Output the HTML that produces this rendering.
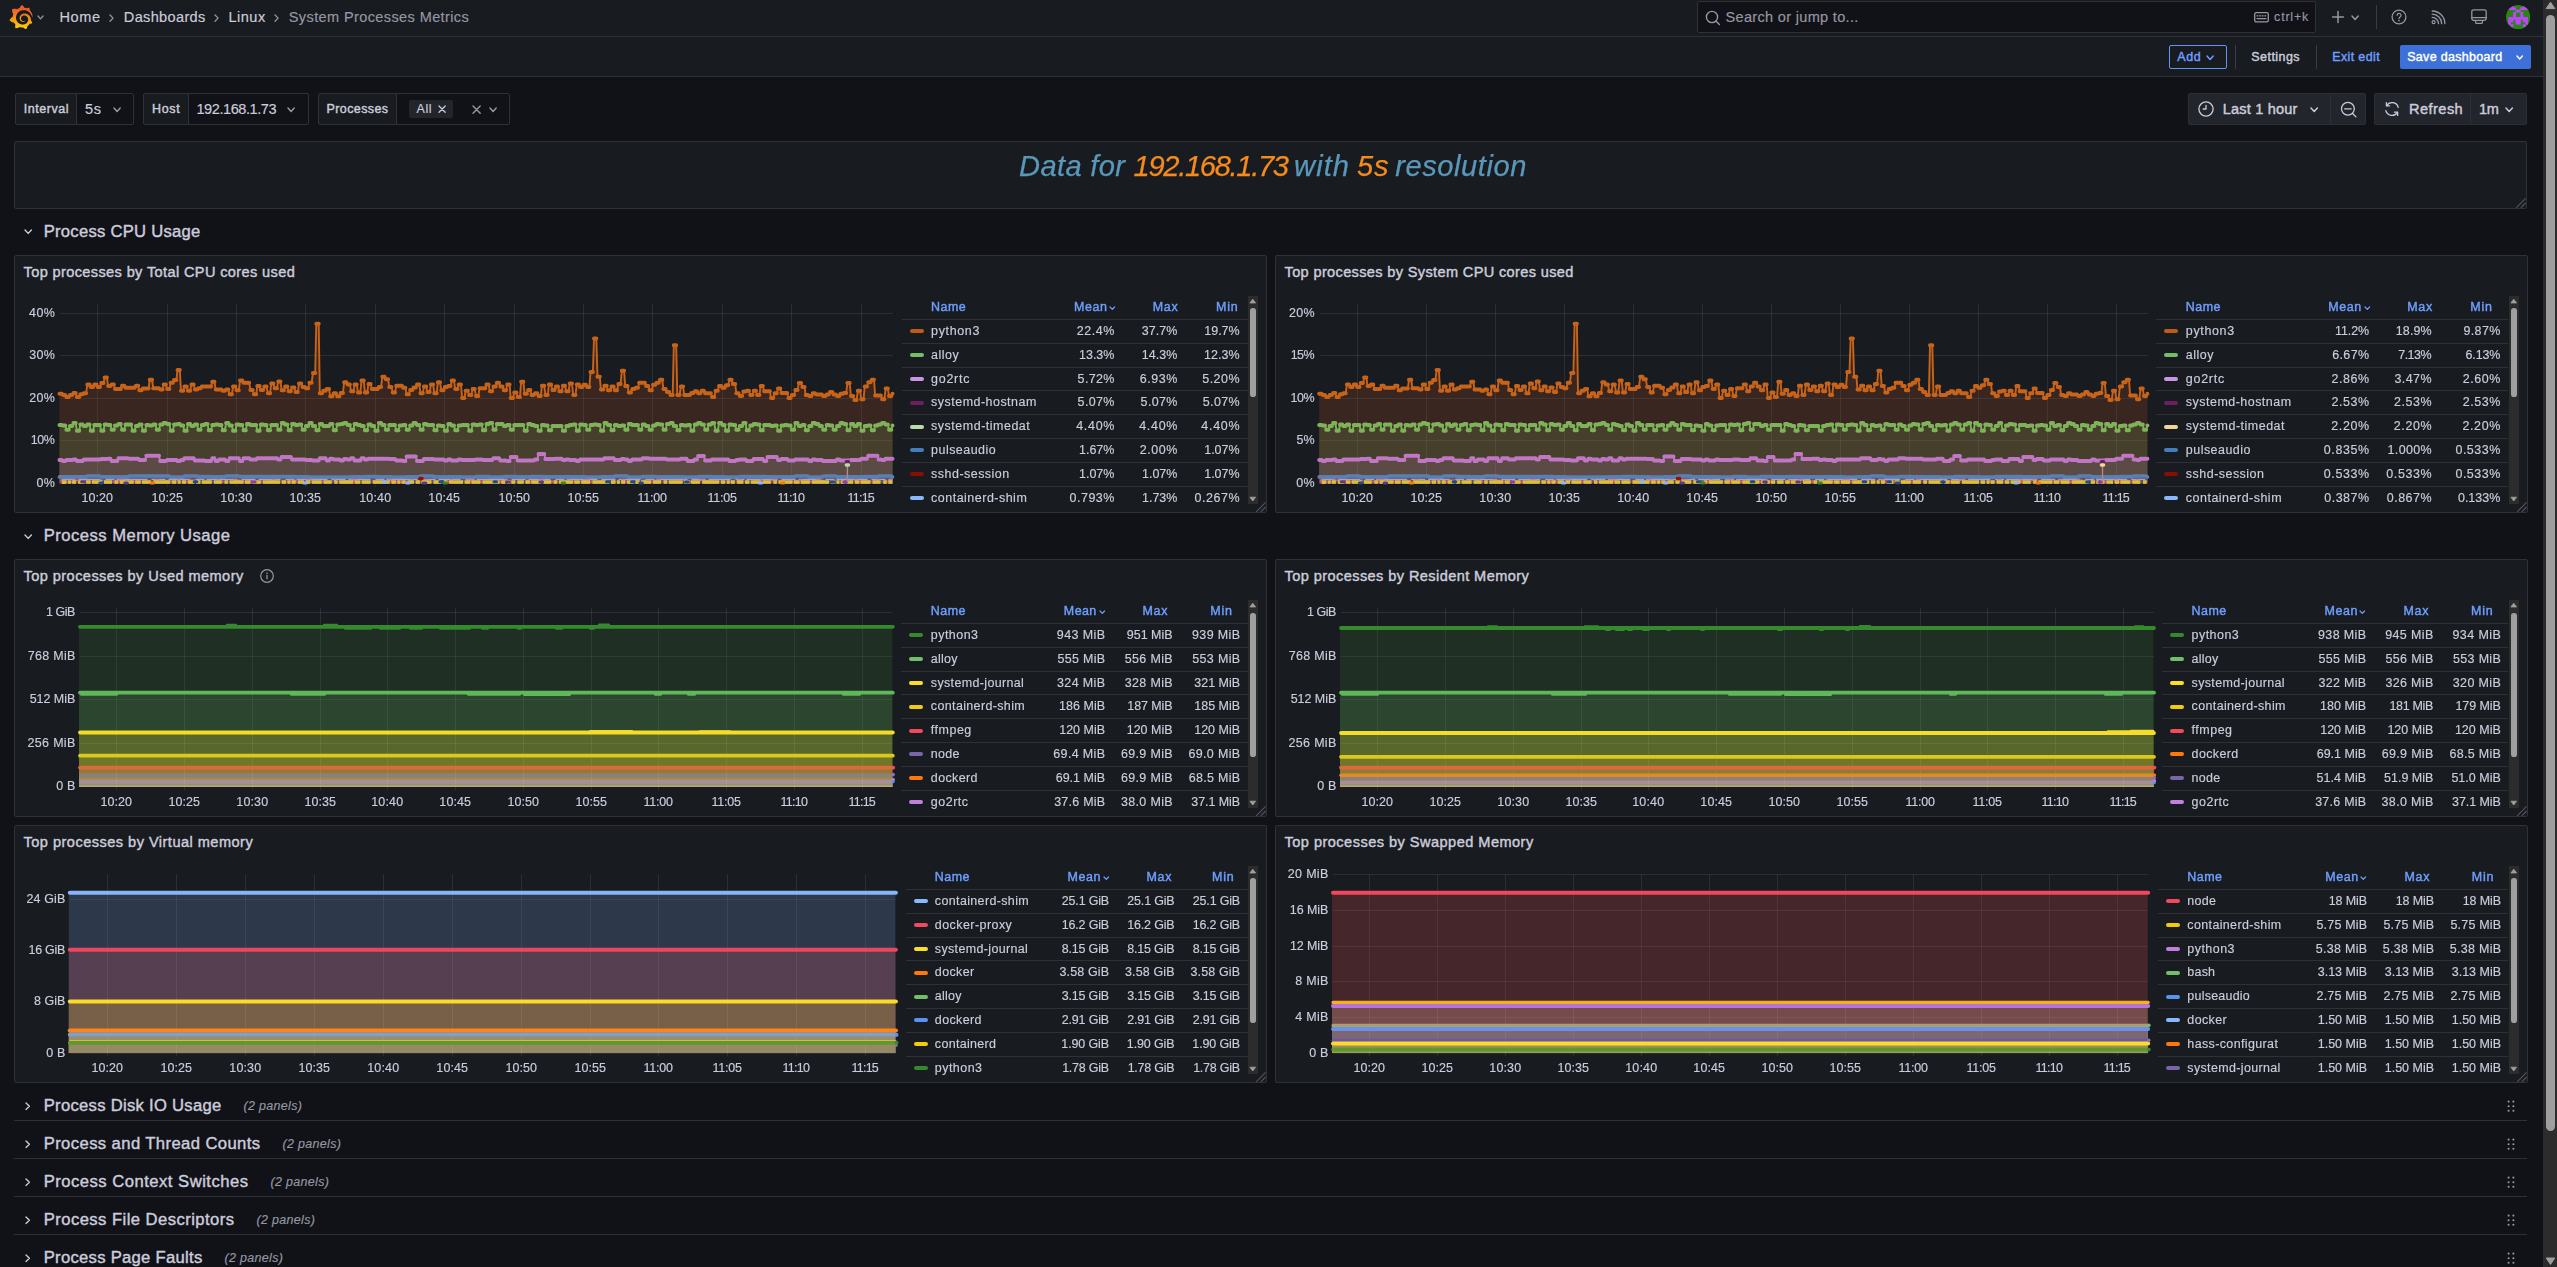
<!DOCTYPE html>
<html><head><meta charset="utf-8"><title>System Processes Metrics - Dashboards - Grafana</title>
<style>
html,body{margin:0;padding:0;}
body{width:2557px;height:1267px;overflow:hidden;background:#111217;position:relative;font-family:"Liberation Sans", sans-serif;color:#ccccdc;}
.t{position:absolute;white-space:nowrap;}
.b{position:absolute;box-sizing:border-box;display:block;}
svg{overflow:visible;}
</style></head>
<body>
<div class="b" style="left:0.00px;top:0.00px;width:2543.00px;height:37.00px;background:#181b1f;border-bottom:1px solid #2f3137;"></div>
<div class="b" style="left:0.00px;top:37.00px;width:2543.00px;height:40.00px;background:#181b1f;border-bottom:1px solid #2f3137;"></div>
<svg class="b" style="left:8.73px;top:4.78px;" width="24.05" height="24.28" viewBox="0 0 351 365" preserveAspectRatio="none"><defs><linearGradient id="gl" gradientUnits="userSpaceOnUse" x1="175.5" y1="430" x2="175.5" y2="60"><stop offset="0" stop-color="#fff100"/><stop offset="1" stop-color="#f05a28"/></linearGradient></defs><path fill="url(#gl)" d="M342 161.2c-.6-6.1-1.6-13.1-3.6-20.9-2-7.7-5-16.2-9.4-25-4.4-8.8-10.1-17.9-17.5-26.8-2.900-3.500-6.100-6.900-9.500-10.200 5.100-20.300-6.200-37.900-6.200-37.900-19.500-1.200-31.900 6.100-36.500 9.400-.8-.3-1.500-.700-2.300-1-3.300-1.300-6.700-2.600-10.300-3.700-3.500-1.100-7.100-2.100-10.800-3-3.700-.9-7.400-1.600-11.200-2.200-.7-.1-1.300-.2-2-.3-8.500-27.200-32.900-38.600-32.900-38.600-27.300 17.300-32.400 41.500-32.400 41.500s-.1.500-.3 1.400c-1.500.4-3 .9-4.500 1.300-2.100.6-4.200 1.400-6.200 2.200-2.100.8-4.100 1.600-6.200 2.500-4.100 1.800-8.200 3.800-12.200 6-3.900 2.200-7.700 4.600-11.400 7.100-.5-.2-1-.4-1-.4-37.800-14.400-71.300 2.900-71.300 2.900-3.100 40.200 15.100 65.500 18.700 70.100-.9 2.500-1.700 5-2.500 7.500-2.800 9.100-4.900 18.400-6.200 28.100-.2 1.400-.4 2.800-.5 4.200-35 17.300-45.300 52.600-45.300 52.600 29.100 33.500 63.100 35.600 63.100 35.600l.1-.1c4.300 7.700 9.300 15 14.900 21.900 2.400 2.900 4.800 5.600 7.400 8.300-10.600 30.400 1.500 55.600 1.500 55.600 32.400 1.200 53.700-14.200 58.200-17.700 3.200 1.100 6.500 2.100 9.800 2.900 10 2.600 20.200 4.100 30.400 4.500 2.500.1 5.100.2 7.600.1h3.600l1.600-.1v.1c15.300 21.800 42.100 24.900 42.100 24.900 19.100-20.100 20.200-40.100 20.200-44.400v-1.800c4-2.800 7.800-5.800 11.400-9.100 7.600-6.900 14.300-14.800 19.900-23.300.5-.8 1-1.600 1.500-2.400 21.600 1.200 36.900-13.400 36.900-13.400-3.600-22.500-16.400-33.500-19.100-35.600l-.3-.2-.2-.2c-.1-.1-.3-.2-.5-.3.1-1.400.2-2.700.3-4.100.2-2.400.2-4.900.2-7.300v-3.700l-.1-1.500-.1-2c0-.7-.1-1.300-.2-1.900-.1-.6-.1-1.300-.2-1.900l-.2-1.900-.3-1.900c-.4-2.500-.8-4.900-1.400-7.400-2.300-9.700-6.100-18.900-11-27.200-5-8.300-11.200-15.600-18.300-21.800-7-6.200-14.900-11.200-23.100-14.900-8.300-3.700-16.900-6.100-25.500-7.200-4.300-.6-8.600-.8-12.900-.7h-3.200l-1.600.1c-.6 0-1.200.1-1.700.1-2.200.2-4.400.5-6.500.9-8.600 1.600-16.700 4.700-23.800 9-7.100 4.300-13.300 9.600-18.300 15.600-5 6-8.900 12.700-11.600 19.600-2.700 6.900-4.200 14.100-4.600 21-.1 1.700-.1 3.500-.1 5.200v1.300l.1 1.400c.1.8.1 1.700.2 2.500.3 3.500 1 6.900 1.900 10.100 1.900 6.500 4.900 12.400 8.600 17.400 3.700 5 8.200 9.100 12.900 12.400 4.700 3.200 9.800 5.500 14.800 7 5 1.500 10 2.100 14.700 2.100h2.600c.3 0 .6 0 .9-.1.500 0 1-.1 1.500-.1.100 0 .3 0 .4-.1l.5-.1c.3 0 .6-.1.900-.1.600-.1 1.100-.2 1.700-.3.600-.1 1.100-.2 1.600-.4 1.100-.2 2.100-.6 3.100-.9 2-.7 4-1.500 5.700-2.400 1.800-.9 3.400-2 5-3 .4-.3.9-.6 1.300-1 1.600-1.300 1.900-3.700.6-5.300-1.100-1.400-3.100-1.800-4.700-.9-.4.2-.8.4-1.200.6-1.400.7-2.800 1.300-4.300 1.800-1.500.5-3.100.9-4.700 1.200-.8.100-1.600.2-2.500.3-.4 0-.8.100-1.300.1h-2.400c-.5 0-1 0-1.500-.1h-.6c-.2 0-.5 0-.7-.1-.5-.1-.9-.1-1.400-.2-3.700-.5-7.400-1.600-10.900-3.200-3.600-1.600-7-3.800-10.100-6.600-3.100-2.800-5.800-6.100-7.900-9.900-2.100-3.800-3.600-8-4.300-12.400-.3-2.200-.5-4.500-.4-6.700 0-.6.100-1.200.1-1.800v-.8c0-.3.100-.6.100-.9.100-1.200.3-2.400.5-3.600 1.700-9.600 6.500-19 13.900-26.100 1.900-1.800 3.900-3.400 6-4.900 2.100-1.500 4.400-2.800 6.800-3.900 2.400-1.100 4.800-2 7.400-2.700 2.500-.7 5.100-1.100 7.800-1.400 1.300-.1 2.600-.2 4-.2h3.100l1.100.1c2.900.2 5.700.6 8.500 1.300 5.600 1.200 11.100 3.300 16.200 6.100 10.200 5.700 18.900 14.500 24.200 25.100 2.700 5.300 4.600 11 5.500 16.900.2 1.500.4 3 .5 4.500l.1 1.100.1 1.100v5.400c0 .7-.1 1.900-.1 2.600-.1 1.600-.3 3.300-.5 4.900-.2 1.600-.5 3.200-.8 4.800-.3 1.600-.7 3.200-1.100 4.700-.8 3.100-1.800 6.200-3 9.300-2.400 6-5.600 11.800-9.400 17.100-7.700 10.600-18.200 19.200-30.200 24.700-6 2.700-12.300 4.700-18.800 5.700-3.200.6-6.500.9-9.800 1h-4.900c-1.800 0-3.500-.1-5.300-.3-7-.5-13.900-1.800-20.700-3.700-6.700-1.900-13.200-4.600-19.400-7.800-12.300-6.600-23.400-15.600-32-26.500-4.300-5.400-8.100-11.300-11.200-17.400-3.100-6.100-5.600-12.600-7.400-19.100-1.800-6.600-2.900-13.300-3.400-20.100l-.1-1.300v-8.300c.1-3.300.4-6.800.8-10.200.4-3.400 1-6.900 1.700-10.300.7-3.400 1.500-6.800 2.500-10.200 1.900-6.700 4.300-13.200 7.100-19.300 5.700-12.200 13.100-23.100 22-31.800 2.200-2.200 4.500-4.200 6.900-6.200 2.400-1.900 4.900-3.700 7.500-5.400 2.500-1.700 5.200-3.200 7.900-4.600 1.300-.7 2.700-1.400 4.100-2 .7-.3 1.400-.6 2.100-.9.7-.3 1.400-.6 2.100-.9 2.800-1.200 5.700-2.200 8.700-3.100.7-.2 1.500-.4 2.200-.7.7-.2 1.500-.4 2.200-.6 1.500-.4 3-.8 4.500-1.100.7-.2 1.500-.3 2.300-.5.8-.2 1.500-.3 2.300-.5.8-.1 1.500-.3 2.300-.4l1.100-.2 1.200-.2c.8-.1 1.500-.2 2.300-.3.9-.1 1.700-.2 2.600-.3.7-.1 1.900-.2 2.600-.3.5-.1 1.100-.1 1.600-.2l1.100-.1.500-.1h.6c.9-.1 1.700-.1 2.600-.2l1.300-.1h1c.7 0 1.500-.1 2.200-.1 2.900-.1 5.900-.1 8.800 0 5.800.2 11.500.9 17 1.900 11.100 2.100 21.500 5.600 31 10.300 9.500 4.600 17.900 10.300 25.300 16.500.5.400.9.800 1.400 1.200.4.400.9.800 1.300 1.200.9.800 1.700 1.600 2.600 2.400.9.800 1.700 1.600 2.500 2.400.8.800 1.600 1.600 2.400 2.500 3.100 3.300 6 6.600 8.600 10 5.200 6.700 9.400 13.500 12.700 19.900.2.400.4.800.6 1.200.2.400.4.800.6 1.200.4.800.8 1.600 1.100 2.400.4.800.7 1.500 1.100 2.300.3.800.7 1.500 1 2.300 1.200 3 2.400 5.900 3.300 8.600 1.500 4.400 2.600 8.300 3.500 11.700.3 1.400 1.600 2.300 3 2.100 1.500-.1 2.600-1.300 2.600-2.800 0-3.600-.1-7.900-.5-12.800z"/></svg>
<svg class="b" style="left:36.70px;top:14.90px;" width="7" height="4.8" viewBox="0 0 7 4.8"><path d="M1 1 L3.5 3.8 L6 1" fill="none" stroke="#9597a4" stroke-width="1.25" stroke-linecap="round" stroke-linejoin="round"/></svg>
<div class="t" style="top:9.00px;font-size:14.56px;line-height:16px;color:#ccccdc;-webkit-text-stroke:.16px #ccccdc;left:59.56px;letter-spacing:0.572px;">Home</div>
<svg class="b" style="left:109.35px;top:13.80px;" width="5.1" height="8.2" viewBox="0 0 5.1 8.2"><path d="M1 1 L4.1 4.1 L1 7.2" fill="none" stroke="#9597a4" stroke-width="1.3" stroke-linecap="round" stroke-linejoin="round"/></svg>
<div class="t" style="top:9.00px;font-size:14.56px;line-height:16px;color:#ccccdc;-webkit-text-stroke:.16px #ccccdc;left:123.81px;letter-spacing:0.340px;">Dashboards</div>
<svg class="b" style="left:214.05px;top:13.80px;" width="5.1" height="8.2" viewBox="0 0 5.1 8.2"><path d="M1 1 L4.1 4.1 L1 7.2" fill="none" stroke="#9597a4" stroke-width="1.3" stroke-linecap="round" stroke-linejoin="round"/></svg>
<div class="t" style="top:9.00px;font-size:14.56px;line-height:16px;color:#ccccdc;-webkit-text-stroke:.16px #ccccdc;left:228.56px;letter-spacing:0.464px;">Linux</div>
<svg class="b" style="left:273.85px;top:13.80px;" width="5.1" height="8.2" viewBox="0 0 5.1 8.2"><path d="M1 1 L4.1 4.1 L1 7.2" fill="none" stroke="#9597a4" stroke-width="1.3" stroke-linecap="round" stroke-linejoin="round"/></svg>
<div class="t" style="top:9.00px;font-size:14.56px;line-height:16px;color:#9597a4;-webkit-text-stroke:.16px #9597a4;left:288.81px;letter-spacing:0.374px;">System Processes Metrics</div>
<div class="b" style="left:1697.00px;top:1.00px;width:619.00px;height:32.00px;background:#111217;border:1px solid #2f3137;border-radius:2.0px;"></div>
<svg class="b" style="left:1705.00px;top:9.50px;" width="16" height="16" viewBox="0 0 16 16"><circle cx="7" cy="7" r="5.6" fill="none" stroke="#9597a4" stroke-width="1.4"/><path d="M11.2 11.2 L14.4 14.4" stroke="#9597a4" stroke-width="1.4" stroke-linecap="round"/></svg>
<div class="t" style="top:9.00px;font-size:14.56px;line-height:16px;color:#9597a4;-webkit-text-stroke:.16px #9597a4;left:1725.56px;letter-spacing:0.308px;">Search or jump to...</div>
<svg class="b" style="left:2254.00px;top:11.50px;" width="15" height="11" viewBox="0 0 15 11"><rect x="0.7" y="0.7" width="13.6" height="9.2" rx="1.6" fill="none" stroke="#9597a4" stroke-width="1.3"/><path d="M3 3.8h1M5.6 3.8h1M8.2 3.8h1M10.8 3.8h1M3 6.6h9" stroke="#9597a4" stroke-width="1.2" stroke-linecap="round"/></svg>
<div class="t" style="top:10.00px;font-size:12.48px;line-height:14px;color:#9597a4;-webkit-text-stroke:.16px #9597a4;left:2274.12px;letter-spacing:0.789px;">ctrl+k</div>
<svg class="b" style="left:2331.00px;top:10.00px;" width="14" height="14" viewBox="0 0 14 14"><path d="M7 1.6v10.8M1.6 7h10.8" stroke="#9597a4" stroke-width="1.5" stroke-linecap="round"/></svg>
<svg class="b" style="left:2350.50px;top:14.50px;" width="8.2" height="5.4" viewBox="0 0 8.2 5.4"><path d="M1 1 L4.1 4.4 L7.2 1" fill="none" stroke="#9597a4" stroke-width="1.5" stroke-linecap="round" stroke-linejoin="round"/></svg>
<div class="b" style="left:2376.00px;top:5.00px;width:1.00px;height:24.00px;background:#3a3c43;"></div>
<svg class="b" style="left:2391.00px;top:9.00px;" width="16" height="16" viewBox="0 0 16 16"><circle cx="8" cy="8" r="6.9" fill="none" stroke="#9597a4" stroke-width="1.3"/><path d="M6.1 6.3a1.95 1.95 0 1 1 2.9 1.7c-.65.36-1 .8-1 1.5" fill="none" stroke="#9597a4" stroke-width="1.25" stroke-linecap="round"/><circle cx="8" cy="11.6" r=".85" fill="#9597a4"/></svg>
<svg class="b" style="left:2431.00px;top:10.00px;" width="15" height="15" viewBox="0 0 15 15"><circle cx="2.6" cy="12.2" r="1.5" fill="none" stroke="#9597a4" stroke-width="1.2"/><path d="M1.2 7.4a6.3 6.3 0 0 1 6.3 6.3M1.2 4.2a9.5 9.5 0 0 1 9.5 9.5M1.2 1a12.7 12.7 0 0 1 12.7 12.7" fill="none" stroke="#9597a4" stroke-width="1.3" stroke-linecap="round"/></svg>
<svg class="b" style="left:2471.00px;top:9.00px;" width="16" height="16" viewBox="0 0 16 16"><rect x="0.8" y="0.8" width="14.4" height="10.6" rx="1.8" fill="none" stroke="#9597a4" stroke-width="1.3"/><path d="M0.8 8.6h14.4M4.6 11.6v1.6a1.2 1.2 0 0 0 1.2 1.2h4.4a1.2 1.2 0 0 0 1.2-1.2v-1.6" fill="none" stroke="#9597a4" stroke-width="1.3" stroke-linecap="round"/></svg>
<svg class="b" style="left:2506.00px;top:5.00px;" width="24.3" height="24.3" viewBox="0 0 24.3 24.3"><defs><clipPath id="avc"><circle cx="12.15" cy="12.15" r="12.15"/></clipPath></defs><g clip-path="url(#avc)"><rect width="24.3" height="24.3" fill="#27860f"/><g fill="#c044ff"><rect x="2.23" y="-0.20" width="2.83" height="2.83"/><rect x="4.66" y="-0.20" width="2.83" height="2.83"/><rect x="16.81" y="-0.20" width="2.83" height="2.83"/><rect x="19.24" y="-0.20" width="2.83" height="2.83"/><rect x="2.23" y="2.23" width="2.83" height="2.83"/><rect x="4.66" y="2.23" width="2.83" height="2.83"/><rect x="7.09" y="2.23" width="2.83" height="2.83"/><rect x="14.38" y="2.23" width="2.83" height="2.83"/><rect x="16.81" y="2.23" width="2.83" height="2.83"/><rect x="19.24" y="2.23" width="2.83" height="2.83"/><rect x="9.52" y="4.66" width="2.83" height="2.83"/><rect x="11.95" y="4.66" width="2.83" height="2.83"/><rect x="7.09" y="7.09" width="2.83" height="2.83"/><rect x="14.38" y="7.09" width="2.83" height="2.83"/><rect x="7.09" y="9.52" width="2.83" height="2.83"/><rect x="14.38" y="9.52" width="2.83" height="2.83"/><rect x="2.23" y="11.95" width="2.83" height="2.83"/><rect x="4.66" y="11.95" width="2.83" height="2.83"/><rect x="7.09" y="11.95" width="2.83" height="2.83"/><rect x="9.52" y="11.95" width="2.83" height="2.83"/><rect x="11.95" y="11.95" width="2.83" height="2.83"/><rect x="14.38" y="11.95" width="2.83" height="2.83"/><rect x="16.81" y="11.95" width="2.83" height="2.83"/><rect x="19.24" y="11.95" width="2.83" height="2.83"/><rect x="2.23" y="14.38" width="2.83" height="2.83"/><rect x="4.66" y="14.38" width="2.83" height="2.83"/><rect x="9.52" y="14.38" width="2.83" height="2.83"/><rect x="11.95" y="14.38" width="2.83" height="2.83"/><rect x="16.81" y="14.38" width="2.83" height="2.83"/><rect x="19.24" y="14.38" width="2.83" height="2.83"/><rect x="2.23" y="16.81" width="2.83" height="2.83"/><rect x="9.52" y="16.81" width="2.83" height="2.83"/><rect x="11.95" y="16.81" width="2.83" height="2.83"/><rect x="19.24" y="16.81" width="2.83" height="2.83"/><rect x="4.66" y="19.24" width="2.83" height="2.83"/><rect x="16.81" y="19.24" width="2.83" height="2.83"/></g></g></svg>
<div class="b" style="left:2169.00px;top:45.00px;width:58.00px;height:24.00px;border:1px solid #6394f5;border-radius:2.0px;"></div>
<div class="t" style="top:50.00px;font-size:12.48px;line-height:14px;color:#6e9fff;-webkit-text-stroke:.42px #6e9fff;left:2177.22px;letter-spacing:0.662px;">Add</div>
<svg class="b" style="left:2205.90px;top:54.60px;" width="8.2" height="5.4" viewBox="0 0 8.2 5.4"><path d="M1 1 L4.1 4.4 L7.2 1" fill="none" stroke="#6e9fff" stroke-width="1.5" stroke-linecap="round" stroke-linejoin="round"/></svg>
<div class="b" style="left:2235.00px;top:45.00px;width:1.00px;height:24.00px;background:#3a3c43;"></div>
<div class="t" style="top:50.00px;font-size:12.48px;line-height:14px;color:#ccccdc;-webkit-text-stroke:.42px #ccccdc;left:2251.37px;letter-spacing:0.445px;">Settings</div>
<div class="b" style="left:2316.00px;top:45.00px;width:1.00px;height:24.00px;background:#3a3c43;"></div>
<div class="t" style="top:50.00px;font-size:12.48px;line-height:14px;color:#6e9fff;-webkit-text-stroke:.42px #6e9fff;left:2332.22px;letter-spacing:0.379px;">Exit edit</div>
<div class="b" style="left:2399.75px;top:45.00px;width:131.00px;height:24.00px;background:#3d71d9;border-radius:2.0px;"></div>
<div class="t" style="top:50.00px;font-size:12.48px;line-height:14px;color:#ffffff;-webkit-text-stroke:.42px #ffffff;left:2407.22px;letter-spacing:0.311px;">Save dashboard</div>
<svg class="b" style="left:2516.00px;top:54.90px;" width="7.4" height="5" viewBox="0 0 7.4 5"><path d="M1 1 L3.7 4 L6.4 1" fill="none" stroke="#ffffff" stroke-width="1.4" stroke-linecap="round" stroke-linejoin="round"/></svg>
<div class="b" style="left:15.00px;top:93.00px;width:62.00px;height:32.00px;background:#181b1f;border:1px solid #2f3137;border-radius:2.0px;border-top-right-radius:0;border-bottom-right-radius:0;"></div>
<div class="b" style="left:76.00px;top:93.00px;width:58.00px;height:32.00px;background:#111217;border:1px solid #2f3137;border-radius:2.0px;border-top-left-radius:0;border-bottom-left-radius:0;"></div>
<div class="t" style="top:102.00px;font-size:12.48px;line-height:14px;color:#ccccdc;-webkit-text-stroke:.42px #ccccdc;left:23.82px;letter-spacing:0.535px;">Interval</div>
<div class="t" style="top:101.00px;font-size:14.56px;line-height:16px;color:#ccccdc;-webkit-text-stroke:.16px #ccccdc;left:85.06px;letter-spacing:0.663px;">5s</div>
<svg class="b" style="left:112.90px;top:107.30px;" width="8.2" height="5.4" viewBox="0 0 8.2 5.4"><path d="M1 1 L4.1 4.4 L7.2 1" fill="none" stroke="#9597a4" stroke-width="1.5" stroke-linecap="round" stroke-linejoin="round"/></svg>
<div class="b" style="left:143.00px;top:93.00px;width:46.00px;height:32.00px;background:#181b1f;border:1px solid #2f3137;border-radius:2.0px;border-top-right-radius:0;border-bottom-right-radius:0;"></div>
<div class="b" style="left:188.00px;top:93.00px;width:121.00px;height:32.00px;background:#111217;border:1px solid #2f3137;border-radius:2.0px;border-top-left-radius:0;border-bottom-left-radius:0;"></div>
<div class="t" style="top:102.00px;font-size:12.48px;line-height:14px;color:#ccccdc;-webkit-text-stroke:.42px #ccccdc;left:151.92px;letter-spacing:0.758px;">Host</div>
<div class="t" style="top:101.00px;font-size:14.56px;line-height:16px;color:#ccccdc;-webkit-text-stroke:.16px #ccccdc;left:196.46px;letter-spacing:-0.436px;">192.168.1.73</div>
<svg class="b" style="left:287.40px;top:107.30px;" width="8.2" height="5.4" viewBox="0 0 8.2 5.4"><path d="M1 1 L4.1 4.4 L7.2 1" fill="none" stroke="#9597a4" stroke-width="1.5" stroke-linecap="round" stroke-linejoin="round"/></svg>
<div class="b" style="left:318.00px;top:93.00px;width:79.00px;height:32.00px;background:#181b1f;border:1px solid #2f3137;border-radius:2.0px;border-top-right-radius:0;border-bottom-right-radius:0;"></div>
<div class="b" style="left:396.00px;top:93.00px;width:114.00px;height:32.00px;background:#111217;border:1px solid #2f3137;border-radius:2.0px;border-top-left-radius:0;border-bottom-left-radius:0;"></div>
<div class="t" style="top:102.00px;font-size:12.48px;line-height:14px;color:#ccccdc;-webkit-text-stroke:.42px #ccccdc;left:326.52px;letter-spacing:0.417px;">Processes</div>
<svg class="b" style="left:488.50px;top:107.30px;" width="8.2" height="5.4" viewBox="0 0 8.2 5.4"><path d="M1 1 L4.1 4.4 L7.2 1" fill="none" stroke="#9597a4" stroke-width="1.5" stroke-linecap="round" stroke-linejoin="round"/></svg>
<div class="b" style="left:408.75px;top:100.00px;width:44.00px;height:18.00px;background:#22252b;border-radius:2.0px;"></div>
<div class="t" style="top:102.00px;font-size:12.48px;line-height:14px;color:#ccccdc;-webkit-text-stroke:.16px #ccccdc;left:416.52px;letter-spacing:0.621px;">All</div>
<svg class="b" style="left:437.80px;top:104.80px;" width="8.2" height="8.2" viewBox="0 0 8.2 8.2"><path d="M1 1L7.2 7.2M7.2 1L1 7.2" stroke="#ccccdc" stroke-width="1.3" stroke-linecap="round"/></svg>
<svg class="b" style="left:472.00px;top:105.20px;" width="9.2" height="9.2" viewBox="0 0 9.2 9.2"><path d="M1 1L8.2 8.2M8.2 1L1 8.2" stroke="#9597a4" stroke-width="1.4" stroke-linecap="round"/></svg>
<div class="b" style="left:2188.00px;top:93.00px;width:178.00px;height:32.00px;background:#22252b;border:1px solid #2d2f35;border-radius:2.0px;"></div>
<div class="b" style="left:2330.00px;top:94.00px;width:1.00px;height:30.00px;background:#2d2f35;"></div>
<svg class="b" style="left:2198.00px;top:101.00px;" width="16" height="16" viewBox="0 0 16 16"><circle cx="8" cy="8" r="7.1" fill="none" stroke="#ccccdc" stroke-width="1.3"/><path d="M8 4.4V8H5.2" fill="none" stroke="#ccccdc" stroke-width="1.3" stroke-linecap="round" stroke-linejoin="round"/></svg>
<div class="t" style="top:101.00px;font-size:14.56px;line-height:16px;color:#ccccdc;-webkit-text-stroke:.42px #ccccdc;left:2222.81px;letter-spacing:0.187px;">Last 1 hour</div>
<svg class="b" style="left:2309.80px;top:106.50px;" width="8.4" height="5.4" viewBox="0 0 8.4 5.4"><path d="M1 1 L4.2 4.4 L7.4 1" fill="none" stroke="#ccccdc" stroke-width="1.5" stroke-linecap="round" stroke-linejoin="round"/></svg>
<svg class="b" style="left:2339.50px;top:100.50px;" width="18" height="18" viewBox="0 0 18 18"><circle cx="7.9" cy="7.8" r="6.4" fill="none" stroke="#ccccdc" stroke-width="1.3"/><path d="M12.6 12.5L16 15.9M4.6 7.8h6.6" fill="none" stroke="#ccccdc" stroke-width="1.3" stroke-linecap="round"/></svg>
<div class="b" style="left:2374.00px;top:93.00px;width:153.00px;height:32.00px;background:#22252b;border:1px solid #2d2f35;border-radius:2.0px;"></div>
<div class="b" style="left:2470.00px;top:94.00px;width:1.00px;height:30.00px;background:#2d2f35;"></div>
<svg class="b" style="left:2383.50px;top:101.00px;" width="16" height="16" viewBox="0 0 16 16"><path d="M14.2 6.3A6.4 6.4 0 0 0 2.6 4.6M1.8 9.7a6.4 6.4 0 0 0 11.6 1.7" fill="none" stroke="#ccccdc" stroke-width="1.3" stroke-linecap="round"/><path d="M2.4 1.6v3.2h3.2M13.6 14.4v-3.2h-3.2" fill="none" stroke="#ccccdc" stroke-width="1.3" stroke-linecap="round" stroke-linejoin="round"/></svg>
<div class="t" style="top:101.00px;font-size:14.56px;line-height:16px;color:#ccccdc;-webkit-text-stroke:.42px #ccccdc;left:2409.06px;letter-spacing:0.452px;">Refresh</div>
<div class="t" style="top:101.00px;font-size:14.56px;line-height:16px;color:#ccccdc;-webkit-text-stroke:.42px #ccccdc;left:2479.06px;letter-spacing:-0.309px;">1m</div>
<svg class="b" style="left:2505.30px;top:106.50px;" width="8.4" height="5.4" viewBox="0 0 8.4 5.4"><path d="M1 1 L4.2 4.4 L7.4 1" fill="none" stroke="#ccccdc" stroke-width="1.5" stroke-linecap="round" stroke-linejoin="round"/></svg>
<div class="b" style="left:14.00px;top:141.00px;width:2513.00px;height:68.00px;background:#181b1f;border:1px solid #2f3137;border-radius:2.0px;"></div>
<svg class="b" style="left:2515.00px;top:197.00px;" width="11" height="11" viewBox="0 0 11 11"><path d="M10.6 1.4L1.2 10.8M10.6 6L5.8 10.8" stroke="#53555d" stroke-width="1.1" fill="none"/></svg>
<div class="b" style="left:2543.00px;top:0.00px;width:14.00px;height:1267.00px;background:#2c2c2c;"></div>
<div class="b" style="left:2546.00px;top:15.00px;width:9.00px;height:1116.00px;background:#9f9f9f;border-radius:4.5px;"></div>
<svg class="b" style="left:2543.00px;top:0.00px;" width="14" height="14" viewBox="0 0 14 14"><path d="M7.5 2.2L11.8 8.6H3.2z" fill="#a0a0a0" stroke="#a0a0a0" stroke-width="1" stroke-linejoin="round"/></svg>
<svg class="b" style="left:2543.00px;top:1253.00px;" width="14" height="14" viewBox="0 0 14 14"><path d="M7.5 11.4L11.8 5H3.2z" fill="#a0a0a0" stroke="#a0a0a0" stroke-width="1" stroke-linejoin="round"/></svg>
<div class="b" style="left:14.00px;top:255.00px;width:1253.00px;height:258.00px;background:#181b1f;border:1px solid #2f3137;border-radius:2.0px;"></div>
<div class="t" style="top:264.00px;font-size:14.56px;line-height:16px;color:#ccccdc;-webkit-text-stroke:.42px #ccccdc;left:23.56px;letter-spacing:0.376px;">Top processes by Total CPU cores used</div>
<svg class="b" style="left:1255.00px;top:501.00px;" width="11" height="11" viewBox="0 0 11 11"><path d="M10.6 1.4L1.2 10.8M10.6 6L5.8 10.8" stroke="#53555d" stroke-width="1.1" fill="none"/></svg>
<svg class="b" style="left:14.00px;top:255.00px" width="1253" height="258" viewBox="14 255 1253 258"><path d="M60.50 313.50H893.00M60.50 355.50H893.00M60.50 398.50H893.00M60.50 440.50H893.00M60.50 483.50H893.00M97.50 304.00V487.00M167.50 304.00V487.00M236.50 304.00V487.00M305.50 304.00V487.00M375.50 304.00V487.00M444.50 304.00V487.00M514.50 304.00V487.00M583.50 304.00V487.00M652.50 304.00V487.00M722.50 304.00V487.00M791.50 304.00V487.00M861.50 304.00V487.00" stroke="rgba(240,250,255,0.09)" stroke-width="1" fill="none"/><defs><clipPath id="cc14"><path d="M59.5 483.3L59.5 393.7H61.8L63.0 395.0H65.3L66.4 397.1H68.8L69.9 395.0H72.2L73.4 392.9H75.7L76.9 397.1H79.2L80.3 394.2H82.6L83.8 393.3H86.1L87.3 384.4H89.6L90.7 386.9H93.1L94.2 384.4H96.5L97.7 386.9H100.0L101.2 383.1H103.5L104.6 377.6H106.9L108.1 386.1H110.4L111.6 384.4H113.9L115.0 389.1H117.3L118.5 389.1H120.8L122.0 385.7H124.3L125.4 387.8H127.8L128.9 387.8H131.2L132.4 387.8H134.7L135.9 385.7H138.2L139.3 390.3H141.6L142.8 388.6H145.1L146.3 388.6H148.6L149.7 379.7H152.1L153.2 388.2H155.5L156.7 388.2H159.0L160.2 389.5H162.5L163.6 384.4H165.9L167.1 389.1H169.4L170.6 382.7H172.9L174.0 380.1H176.4L177.5 370.0H179.8L181.0 390.8H183.3L184.4 386.5H186.8L187.9 390.8H190.2L191.4 384.4H193.7L194.9 389.5H197.2L198.3 388.2H200.6L201.8 386.5H204.1L205.3 386.5H207.6L208.7 386.5H211.1L212.2 381.8H214.5L215.7 389.5H218.0L219.2 389.5H221.5L222.6 390.8H224.9L226.1 389.5H228.4L229.6 394.2H231.9L233.0 386.5H235.4L236.5 390.3H238.8L240.0 380.6H242.3L243.5 382.7H245.8L246.9 382.7H249.2L250.4 389.9H252.7L253.9 394.2H256.2L257.3 386.1H259.7L260.8 389.9H263.1L264.3 386.5H266.6L267.8 393.3H270.1L271.2 383.5H273.5L274.7 388.2H277.0L278.2 381.4H280.5L281.6 390.3H283.9L285.1 386.5H287.4L288.6 391.2H290.9L292.0 387.4H294.4L295.5 392.0H297.8L299.0 383.5H301.3L302.5 386.9H304.8L305.9 388.2H308.2L309.4 382.7H311.7L312.9 372.9H315.2L316.3 323.7H318.7L319.8 393.3H322.1L323.3 390.8H325.6L326.8 389.1H329.1L330.2 396.3H332.5L333.7 393.3H336.0L337.2 396.3H339.5L340.6 392.9H343.0L344.1 382.3H346.4L347.6 384.4H349.9L351.1 391.2H353.4L354.5 384.4H356.8L358.0 392.5H360.3L361.5 380.6H363.8L364.9 392.5H367.2L368.4 384.0H370.7L371.9 389.1H374.2L375.3 389.1H377.7L378.8 386.9H381.1L382.3 376.8H384.6L385.8 379.3H388.1L389.2 386.9H391.5L392.7 392.5H395.0L396.2 385.7H398.5L399.6 385.7H402.0L403.1 387.8H405.4L406.6 394.2H408.9L410.1 389.9H412.4L413.5 387.4H415.8L417.0 384.4H419.3L420.5 393.3H422.8L423.9 386.5H426.3L427.4 392.0H429.7L430.9 384.4H433.2L434.3 393.3H436.7L437.8 382.3H440.1L441.3 390.3H443.6L444.8 386.9H447.1L448.2 386.1H450.5L451.7 380.6H454.0L455.2 389.1H457.5L458.6 384.4H461.0L462.1 398.0H464.4L465.6 390.8H467.9L469.1 395.0H471.4L472.5 389.1H474.8L476.0 395.9H478.3L479.5 388.2H481.8L482.9 388.2H485.3L486.4 384.4H488.7L489.9 391.2H492.2L493.4 386.5H495.7L496.8 382.7H499.1L500.3 386.5H502.6L503.8 390.3H506.1L507.2 384.4H509.6L510.7 398.0H513.0L514.2 392.5H516.5L517.6 397.1H520.0L521.1 381.8H523.4L524.6 393.7H526.9L528.1 389.9H530.4L531.5 395.0H533.8L535.0 393.3H537.3L538.5 395.9H540.8L541.9 385.7H544.3L545.4 395.0H547.7L548.9 384.4H551.2L552.4 389.9H554.7L555.8 386.5H558.1L559.3 391.2H561.6L562.8 385.7H565.1L566.2 391.2H568.6L569.7 383.5H572.0L573.2 395.0H575.5L576.7 384.4H579.0L580.1 386.9H582.4L583.6 384.8H585.9L587.1 386.9H589.4L590.5 372.1H592.9L594.0 338.5H596.3L597.5 376.8H599.8L600.9 389.5H603.3L604.4 385.7H606.7L607.9 390.3H610.2L611.4 386.5H613.7L614.8 390.3H617.1L618.3 384.0H620.6L621.8 370.8H624.1L625.2 386.1H627.6L628.7 392.5H631.0L632.2 389.1H634.5L635.7 387.8H638.0L639.1 382.7H641.4L642.6 382.7H644.9L646.1 386.1H648.4L649.5 390.3H651.9L653.0 384.8H655.3L656.5 382.7H658.8L660.0 379.7H662.3L663.4 389.1H665.7L666.9 392.0H669.2L670.4 395.0H672.7L673.8 345.3H676.2L677.3 395.0H679.6L680.8 386.5H683.1L684.2 395.0H686.6L687.7 395.0H690.0L691.2 392.9H693.5L694.7 391.2H697.0L698.1 393.3H700.4L701.6 390.8H703.9L705.1 393.3H707.4L708.5 393.3H710.9L712.0 397.1H714.3L715.5 390.8H717.8L719.0 386.1H721.3L722.4 387.8H724.7L725.9 385.2H728.2L729.4 379.7H731.7L732.8 384.0H735.2L736.3 393.3H738.6L739.8 395.9H742.1L743.3 391.6H745.6L746.7 390.8H749.0L750.2 395.0H752.5L753.7 390.8H756.0L757.1 395.0H759.5L760.6 386.1H762.9L764.1 391.2H766.4L767.5 391.2H769.9L771.0 398.0H773.3L774.5 393.3H776.8L778.0 388.6H780.3L781.4 392.9H783.7L784.9 392.9H787.2L788.4 398.0H790.7L791.8 395.0H794.2L795.3 389.9H797.6L798.8 383.1H801.1L802.3 386.9H804.6L805.7 395.0H808.0L809.2 395.9H811.5L812.7 393.3H815.0L816.1 394.6H818.5L819.6 394.6H821.9L823.1 395.9H825.4L826.6 394.6H828.9L830.0 392.0H832.3L833.5 394.6H835.8L837.0 395.9H839.3L840.4 393.7H842.8L843.9 392.9H846.2L847.4 383.1H849.7L850.9 395.9H853.2L854.3 400.1H856.6L857.8 390.8H860.1L861.3 399.2H863.6L864.7 386.5H867.0L868.2 382.3H870.5L871.7 379.7H874.0L875.1 395.4H877.5L878.6 395.4H880.9L882.1 399.2H884.4L885.6 388.6H887.9L889.0 395.9H891.3L892.5 393.7H892.5V483.3Z" fill="#3a2620"/></clipPath></defs><path d="M59.5 483.3L59.5 393.7H61.8L63.0 395.0H65.3L66.4 397.1H68.8L69.9 395.0H72.2L73.4 392.9H75.7L76.9 397.1H79.2L80.3 394.2H82.6L83.8 393.3H86.1L87.3 384.4H89.6L90.7 386.9H93.1L94.2 384.4H96.5L97.7 386.9H100.0L101.2 383.1H103.5L104.6 377.6H106.9L108.1 386.1H110.4L111.6 384.4H113.9L115.0 389.1H117.3L118.5 389.1H120.8L122.0 385.7H124.3L125.4 387.8H127.8L128.9 387.8H131.2L132.4 387.8H134.7L135.9 385.7H138.2L139.3 390.3H141.6L142.8 388.6H145.1L146.3 388.6H148.6L149.7 379.7H152.1L153.2 388.2H155.5L156.7 388.2H159.0L160.2 389.5H162.5L163.6 384.4H165.9L167.1 389.1H169.4L170.6 382.7H172.9L174.0 380.1H176.4L177.5 370.0H179.8L181.0 390.8H183.3L184.4 386.5H186.8L187.9 390.8H190.2L191.4 384.4H193.7L194.9 389.5H197.2L198.3 388.2H200.6L201.8 386.5H204.1L205.3 386.5H207.6L208.7 386.5H211.1L212.2 381.8H214.5L215.7 389.5H218.0L219.2 389.5H221.5L222.6 390.8H224.9L226.1 389.5H228.4L229.6 394.2H231.9L233.0 386.5H235.4L236.5 390.3H238.8L240.0 380.6H242.3L243.5 382.7H245.8L246.9 382.7H249.2L250.4 389.9H252.7L253.9 394.2H256.2L257.3 386.1H259.7L260.8 389.9H263.1L264.3 386.5H266.6L267.8 393.3H270.1L271.2 383.5H273.5L274.7 388.2H277.0L278.2 381.4H280.5L281.6 390.3H283.9L285.1 386.5H287.4L288.6 391.2H290.9L292.0 387.4H294.4L295.5 392.0H297.8L299.0 383.5H301.3L302.5 386.9H304.8L305.9 388.2H308.2L309.4 382.7H311.7L312.9 372.9H315.2L316.3 323.7H318.7L319.8 393.3H322.1L323.3 390.8H325.6L326.8 389.1H329.1L330.2 396.3H332.5L333.7 393.3H336.0L337.2 396.3H339.5L340.6 392.9H343.0L344.1 382.3H346.4L347.6 384.4H349.9L351.1 391.2H353.4L354.5 384.4H356.8L358.0 392.5H360.3L361.5 380.6H363.8L364.9 392.5H367.2L368.4 384.0H370.7L371.9 389.1H374.2L375.3 389.1H377.7L378.8 386.9H381.1L382.3 376.8H384.6L385.8 379.3H388.1L389.2 386.9H391.5L392.7 392.5H395.0L396.2 385.7H398.5L399.6 385.7H402.0L403.1 387.8H405.4L406.6 394.2H408.9L410.1 389.9H412.4L413.5 387.4H415.8L417.0 384.4H419.3L420.5 393.3H422.8L423.9 386.5H426.3L427.4 392.0H429.7L430.9 384.4H433.2L434.3 393.3H436.7L437.8 382.3H440.1L441.3 390.3H443.6L444.8 386.9H447.1L448.2 386.1H450.5L451.7 380.6H454.0L455.2 389.1H457.5L458.6 384.4H461.0L462.1 398.0H464.4L465.6 390.8H467.9L469.1 395.0H471.4L472.5 389.1H474.8L476.0 395.9H478.3L479.5 388.2H481.8L482.9 388.2H485.3L486.4 384.4H488.7L489.9 391.2H492.2L493.4 386.5H495.7L496.8 382.7H499.1L500.3 386.5H502.6L503.8 390.3H506.1L507.2 384.4H509.6L510.7 398.0H513.0L514.2 392.5H516.5L517.6 397.1H520.0L521.1 381.8H523.4L524.6 393.7H526.9L528.1 389.9H530.4L531.5 395.0H533.8L535.0 393.3H537.3L538.5 395.9H540.8L541.9 385.7H544.3L545.4 395.0H547.7L548.9 384.4H551.2L552.4 389.9H554.7L555.8 386.5H558.1L559.3 391.2H561.6L562.8 385.7H565.1L566.2 391.2H568.6L569.7 383.5H572.0L573.2 395.0H575.5L576.7 384.4H579.0L580.1 386.9H582.4L583.6 384.8H585.9L587.1 386.9H589.4L590.5 372.1H592.9L594.0 338.5H596.3L597.5 376.8H599.8L600.9 389.5H603.3L604.4 385.7H606.7L607.9 390.3H610.2L611.4 386.5H613.7L614.8 390.3H617.1L618.3 384.0H620.6L621.8 370.8H624.1L625.2 386.1H627.6L628.7 392.5H631.0L632.2 389.1H634.5L635.7 387.8H638.0L639.1 382.7H641.4L642.6 382.7H644.9L646.1 386.1H648.4L649.5 390.3H651.9L653.0 384.8H655.3L656.5 382.7H658.8L660.0 379.7H662.3L663.4 389.1H665.7L666.9 392.0H669.2L670.4 395.0H672.7L673.8 345.3H676.2L677.3 395.0H679.6L680.8 386.5H683.1L684.2 395.0H686.6L687.7 395.0H690.0L691.2 392.9H693.5L694.7 391.2H697.0L698.1 393.3H700.4L701.6 390.8H703.9L705.1 393.3H707.4L708.5 393.3H710.9L712.0 397.1H714.3L715.5 390.8H717.8L719.0 386.1H721.3L722.4 387.8H724.7L725.9 385.2H728.2L729.4 379.7H731.7L732.8 384.0H735.2L736.3 393.3H738.6L739.8 395.9H742.1L743.3 391.6H745.6L746.7 390.8H749.0L750.2 395.0H752.5L753.7 390.8H756.0L757.1 395.0H759.5L760.6 386.1H762.9L764.1 391.2H766.4L767.5 391.2H769.9L771.0 398.0H773.3L774.5 393.3H776.8L778.0 388.6H780.3L781.4 392.9H783.7L784.9 392.9H787.2L788.4 398.0H790.7L791.8 395.0H794.2L795.3 389.9H797.6L798.8 383.1H801.1L802.3 386.9H804.6L805.7 395.0H808.0L809.2 395.9H811.5L812.7 393.3H815.0L816.1 394.6H818.5L819.6 394.6H821.9L823.1 395.9H825.4L826.6 394.6H828.9L830.0 392.0H832.3L833.5 394.6H835.8L837.0 395.9H839.3L840.4 393.7H842.8L843.9 392.9H846.2L847.4 383.1H849.7L850.9 395.9H853.2L854.3 400.1H856.6L857.8 390.8H860.1L861.3 399.2H863.6L864.7 386.5H867.0L868.2 382.3H870.5L871.7 379.7H874.0L875.1 395.4H877.5L878.6 395.4H880.9L882.1 399.2H884.4L885.6 388.6H887.9L889.0 395.9H891.3L892.5 393.7H892.5V483.3Z" fill="#3a2620"/><path d="M59.5 483.3L59.5 424.9H61.8L63.0 425.4H65.3L66.4 429.8H68.8L69.9 426.0H72.2L73.4 423.0H75.7L76.9 430.7H79.2L80.3 424.5H82.6L83.8 426.0H86.1L87.3 424.5H89.6L90.7 430.7H93.1L94.2 424.9H96.5L97.7 424.9H100.0L101.2 430.7H103.5L104.6 424.5H106.9L108.1 424.9H110.4L111.6 429.8H113.9L115.0 425.4H117.3L118.5 424.1H120.8L122.0 429.8H124.3L125.4 424.5H127.8L128.9 424.5H131.2L132.4 430.7H134.7L135.9 426.0H138.2L139.3 424.5H141.6L142.8 430.7H145.1L146.3 424.9H148.6L149.7 425.4H152.1L153.2 424.5H155.5L156.7 429.8H159.0L160.2 424.5H162.5L163.6 423.0H165.9L167.1 424.1H169.4L170.6 430.7H172.9L174.0 424.5H176.4L177.5 424.1H179.8L181.0 425.4H183.3L184.4 430.7H186.8L187.9 424.1H190.2L191.4 426.0H193.7L194.9 424.5H197.2L198.3 429.8H200.6L201.8 424.9H204.1L205.3 424.1H207.6L208.7 430.2H211.1L212.2 424.9H214.5L215.7 424.5H218.0L219.2 424.9H221.5L222.6 430.2H224.9L226.1 423.0H228.4L229.6 425.4H231.9L233.0 430.7H235.4L236.5 424.5H238.8L240.0 424.9H242.3L243.5 430.2H245.8L246.9 424.1H249.2L250.4 424.9H252.7L253.9 424.9H256.2L257.3 430.7H259.7L260.8 424.5H263.1L264.3 424.9H266.6L267.8 430.2H270.1L271.2 424.9H273.5L274.7 424.9H277.0L278.2 429.8H280.5L281.6 423.0H283.9L285.1 424.5H287.4L288.6 430.2H290.9L292.0 424.1H294.4L295.5 424.9H297.8L299.0 424.5H301.3L302.5 429.8H304.8L305.9 426.0H308.2L309.4 423.0H311.7L312.9 426.0H315.2L316.3 430.2H318.7L319.8 424.1H322.1L323.3 426.0H325.6L326.8 426.0H329.1L330.2 424.1H332.5L333.7 430.2H336.0L337.2 424.5H339.5L340.6 424.1H343.0L344.1 423.0H346.4L347.6 424.9H349.9L351.1 429.8H353.4L354.5 424.1H356.8L358.0 424.9H360.3L361.5 426.0H363.8L364.9 430.2H367.2L368.4 424.5H370.7L371.9 426.0H374.2L375.3 430.7H377.7L378.8 423.0H381.1L382.3 424.9H384.6L385.8 429.8H388.1L389.2 424.9H391.5L392.7 424.9H395.0L396.2 430.2H398.5L399.6 425.4H402.0L403.1 424.9H405.4L406.6 429.8H408.9L410.1 425.4H412.4L413.5 423.0H415.8L417.0 424.9H419.3L420.5 429.8H422.8L423.9 424.1H426.3L427.4 424.9H429.7L430.9 424.9H433.2L434.3 430.2H436.7L437.8 425.4H440.1L441.3 426.0H443.6L444.8 430.7H447.1L448.2 424.1H450.5L451.7 425.4H454.0L455.2 430.2H457.5L458.6 425.4H461.0L462.1 424.9H464.4L465.6 424.9H467.9L469.1 430.7H471.4L472.5 424.5H474.8L476.0 424.9H478.3L479.5 424.5H481.8L482.9 430.2H485.3L486.4 424.1H488.7L489.9 423.0H492.2L493.4 429.8H495.7L496.8 424.1H499.1L500.3 424.1H502.6L503.8 426.0H506.1L507.2 424.9H509.6L510.7 429.8H513.0L514.2 424.9H516.5L517.6 424.9H520.0L521.1 424.9H523.4L524.6 430.7H526.9L528.1 424.1H530.4L531.5 424.9H533.8L535.0 426.0H537.3L538.5 430.7H540.8L541.9 424.9H544.3L545.4 425.4H547.7L548.9 430.2H551.2L552.4 426.0H554.7L555.8 426.0H558.1L559.3 426.0H561.6L562.8 430.7H565.1L566.2 426.0H568.6L569.7 424.9H572.0L573.2 424.5H575.5L576.7 430.7H579.0L580.1 424.5H582.4L583.6 424.9H585.9L587.1 429.8H589.4L590.5 424.9H592.9L594.0 424.5H596.3L597.5 424.9H599.8L600.9 430.7H603.3L604.4 423.0H606.7L607.9 424.9H610.2L611.4 430.2H613.7L614.8 424.9H617.1L618.3 426.0H620.6L621.8 425.4H624.1L625.2 429.8H627.6L628.7 424.1H631.0L632.2 424.9H634.5L635.7 424.9H638.0L639.1 429.8H641.4L642.6 424.5H644.9L646.1 426.0H648.4L649.5 429.8H651.9L653.0 425.4H655.3L656.5 424.1H658.8L660.0 424.5H662.3L663.4 429.8H665.7L666.9 424.1H669.2L670.4 423.0H672.7L673.8 426.0H676.2L677.3 430.2H679.6L680.8 424.9H683.1L684.2 425.4H686.6L687.7 424.9H690.0L691.2 430.7H693.5L694.7 424.5H697.0L698.1 423.0H700.4L701.6 424.5H703.9L705.1 429.8H707.4L708.5 424.5H710.9L712.0 423.0H714.3L715.5 430.7H717.8L719.0 423.0H721.3L722.4 424.9H724.7L725.9 430.7H728.2L729.4 424.5H731.7L732.8 424.9H735.2L736.3 429.8H738.6L739.8 426.0H742.1L743.3 423.0H745.6L746.7 430.2H749.0L750.2 425.4H752.5L753.7 424.1H756.0L757.1 424.5H759.5L760.6 430.2H762.9L764.1 424.9H766.4L767.5 424.9H769.9L771.0 426.0H773.3L774.5 425.4H776.8L778.0 430.7H780.3L781.4 425.4H783.7L784.9 424.9H787.2L788.4 425.4H790.7L791.8 429.8H794.2L795.3 423.0H797.6L798.8 426.0H801.1L802.3 424.9H804.6L805.7 430.2H808.0L809.2 426.0H811.5L812.7 423.0H815.0L816.1 424.1H818.5L819.6 426.0H821.9L823.1 429.8H825.4L826.6 424.9H828.9L830.0 425.4H832.3L833.5 429.8H835.8L837.0 426.0H839.3L840.4 423.0H842.8L843.9 424.1H846.2L847.4 430.2H849.7L850.9 424.1H853.2L854.3 426.0H856.6L857.8 424.1H860.1L861.3 430.7H863.6L864.7 426.0H867.0L868.2 425.4H870.5L871.7 430.2H874.0L875.1 425.4H877.5L878.6 424.5H880.9L882.1 423.0H884.4L885.6 424.5H887.9L889.0 429.8H891.3L892.5 425.4H892.5V483.3Z" fill="#453f2b"/><path d="M59.5 483.3L59.5 460.0H61.8L63.0 461.0H65.3L66.4 460.0H68.8L69.9 460.0H72.2L73.4 459.5H75.7L76.9 461.0H79.2L80.3 461.0H82.6L83.8 459.5H86.1L87.3 459.5H89.6L90.7 459.5H93.1L94.2 459.5H96.5L97.7 459.5H100.0L101.2 459.1H103.5L104.6 459.1H106.9L108.1 458.7H110.4L111.6 461.0H113.9L115.0 461.0H117.3L118.5 458.3H120.8L122.0 458.3H124.3L125.4 458.3H127.8L128.9 458.7H131.2L132.4 458.7H134.7L135.9 458.7H138.2L139.3 460.0H141.6L142.8 460.0H145.1L146.3 455.7H148.6L149.7 455.7H152.1L153.2 455.7H155.5L156.7 455.7H159.0L160.2 461.0H162.5L163.6 461.0H165.9L167.1 460.0H169.4L170.6 460.0H172.9L174.0 460.0H176.4L177.5 461.0H179.8L181.0 460.0H183.3L184.4 458.3H186.8L187.9 458.3H190.2L191.4 458.3H193.7L194.9 460.6H197.2L198.3 460.6H200.6L201.8 460.6H204.1L205.3 461.0H207.6L208.7 461.0H211.1L212.2 458.3H214.5L215.7 461.0H218.0L219.2 459.5H221.5L222.6 459.5H224.9L226.1 461.0H228.4L229.6 458.3H231.9L233.0 458.3H235.4L236.5 458.3H238.8L240.0 461.0H242.3L243.5 458.3H245.8L246.9 458.3H249.2L250.4 459.5H252.7L253.9 459.5H256.2L257.3 458.3H259.7L260.8 458.3H263.1L264.3 458.3H266.6L267.8 458.3H270.1L271.2 458.3H273.5L274.7 458.3H277.0L278.2 459.5H280.5L281.6 457.0H283.9L285.1 457.0H287.4L288.6 457.0H290.9L292.0 459.5H294.4L295.5 459.5H297.8L299.0 459.5H301.3L302.5 459.5H304.8L305.9 460.0H308.2L309.4 460.0H311.7L312.9 460.6H315.2L316.3 460.6H318.7L319.8 458.3H322.1L323.3 458.3H325.6L326.8 460.6H329.1L330.2 458.7H332.5L333.7 459.5H336.0L337.2 459.5H339.5L340.6 460.6H343.0L344.1 459.1H346.4L347.6 459.5H349.9L351.1 458.3H353.4L354.5 460.6H356.8L358.0 460.6H360.3L361.5 458.3H363.8L364.9 459.5H367.2L368.4 458.7H370.7L371.9 458.7H374.2L375.3 458.7H377.7L378.8 458.7H381.1L382.3 458.7H384.6L385.8 458.7H388.1L389.2 459.1H391.5L392.7 459.1H395.0L396.2 460.6H398.5L399.6 460.6H402.0L403.1 461.0H405.4L406.6 456.6H408.9L410.1 456.6H412.4L413.5 456.6H415.8L417.0 461.0H419.3L420.5 461.0H422.8L423.9 459.1H426.3L427.4 459.1H429.7L430.9 459.1H433.2L434.3 459.5H436.7L437.8 459.5H440.1L441.3 459.5H443.6L444.8 460.6H447.1L448.2 459.5H450.5L451.7 460.6H454.0L455.2 460.6H457.5L458.6 459.5H461.0L462.1 460.0H464.4L465.6 460.0H467.9L469.1 460.0H471.4L472.5 460.0H474.8L476.0 459.5H478.3L479.5 459.5H481.8L482.9 460.0H485.3L486.4 460.0H488.7L489.9 460.0H492.2L493.4 458.3H495.7L496.8 458.3H499.1L500.3 460.6H502.6L503.8 460.6H506.1L507.2 461.0H509.6L510.7 457.0H513.0L514.2 457.0H516.5L517.6 460.6H520.0L521.1 460.6H523.4L524.6 460.6H526.9L528.1 460.6H530.4L531.5 460.6H533.8L535.0 459.5H537.3L538.5 454.0H540.8L541.9 454.0H544.3L545.4 459.1H547.7L548.9 459.1H551.2L552.4 459.1H554.7L555.8 458.7H558.1L559.3 458.7H561.6L562.8 460.0H565.1L566.2 459.5H568.6L569.7 460.0H572.0L573.2 460.0H575.5L576.7 461.0H579.0L580.1 459.5H582.4L583.6 459.5H585.9L587.1 459.5H589.4L590.5 459.5H592.9L594.0 459.5H596.3L597.5 459.5H599.8L600.9 459.5H603.3L604.4 458.3H606.7L607.9 458.3H610.2L611.4 458.3H613.7L614.8 460.0H617.1L618.3 460.0H620.6L621.8 459.1H624.1L625.2 459.5H627.6L628.7 461.0H631.0L632.2 459.5H634.5L635.7 459.5H638.0L639.1 459.5H641.4L642.6 458.3H644.9L646.1 458.3H648.4L649.5 458.7H651.9L653.0 458.7H655.3L656.5 458.7H658.8L660.0 458.7H662.3L663.4 458.7H665.7L666.9 459.5H669.2L670.4 459.5H672.7L673.8 459.5H676.2L677.3 459.5H679.6L680.8 458.7H683.1L684.2 458.7H686.6L687.7 461.0H690.0L691.2 461.0H693.5L694.7 459.5H697.0L698.1 456.1H700.4L701.6 456.1H703.9L705.1 460.6H707.4L708.5 460.6H710.9L712.0 459.5H714.3L715.5 459.5H717.8L719.0 459.5H721.3L722.4 459.5H724.7L725.9 459.5H728.2L729.4 461.0H731.7L732.8 461.0H735.2L736.3 460.0H738.6L739.8 459.5H742.1L743.3 459.5H745.6L746.7 461.0H749.0L750.2 461.0H752.5L753.7 459.1H756.0L757.1 459.1H759.5L760.6 459.1H762.9L764.1 461.0H766.4L767.5 457.0H769.9L771.0 457.0H773.3L774.5 457.0H776.8L778.0 460.0H780.3L781.4 459.1H783.7L784.9 459.1H787.2L788.4 460.6H790.7L791.8 460.6H794.2L795.3 459.5H797.6L798.8 459.5H801.1L802.3 459.5H804.6L805.7 459.5H808.0L809.2 461.0H811.5L812.7 459.5H815.0L816.1 460.0H818.5L819.6 460.0H821.9L823.1 461.0H825.4L826.6 461.0H828.9L830.0 461.0H832.3L833.5 461.0H835.8L837.0 459.5H839.3L840.4 460.6H842.8L843.9 460.6H846.2L847.4 460.6H849.7L850.9 460.0H853.2L854.3 460.0H856.6L857.8 460.0H860.1L861.3 458.7H863.6L864.7 458.7H867.0L868.2 455.7H870.5L871.7 455.7H874.0L875.1 455.7H877.5L878.6 459.5H880.9L882.1 460.0H884.4L885.6 458.7H887.9L889.0 458.7H891.3L892.5 458.7H892.5V483.3Z" fill="#5c4a45"/><path d="M59.5 483.3L59.5 476.9H61.8L63.0 476.9H65.3L66.4 476.9H68.8L69.9 476.9H72.2L73.4 476.9H75.7L76.9 476.9H79.2L80.3 476.9H82.6L83.8 476.9H86.1L87.3 476.0H89.6L90.7 476.0H93.1L94.2 476.0H96.5L97.7 476.0H100.0L101.2 476.9H103.5L104.6 476.9H106.9L108.1 476.9H110.4L111.6 476.9H113.9L115.0 476.9H117.3L118.5 476.9H120.8L122.0 476.9H124.3L125.4 476.9H127.8L128.9 476.0H131.2L132.4 476.0H134.7L135.9 476.0H138.2L139.3 476.0H141.6L142.8 476.0H145.1L146.3 476.0H148.6L149.7 476.0H152.1L153.2 476.0H155.5L156.7 476.0H159.0L160.2 476.0H162.5L163.6 476.0H165.9L167.1 476.0H169.4L170.6 477.2H172.9L174.0 477.2H176.4L177.5 477.2H179.8L181.0 477.2H183.3L184.4 476.0H186.8L187.9 476.0H190.2L191.4 476.0H193.7L194.9 476.0H197.2L198.3 476.6H200.6L201.8 476.6H204.1L205.3 476.6H207.6L208.7 476.6H211.1L212.2 476.9H214.5L215.7 476.9H218.0L219.2 476.9H221.5L222.6 476.9H224.9L226.1 476.0H228.4L229.6 476.0H231.9L233.0 476.0H235.4L236.5 476.0H238.8L240.0 476.6H242.3L243.5 476.6H245.8L246.9 476.6H249.2L250.4 476.6H252.7L253.9 476.6H256.2L257.3 476.6H259.7L260.8 476.6H263.1L264.3 476.6H266.6L267.8 476.6H270.1L271.2 476.6H273.5L274.7 476.6H277.0L278.2 476.6H280.5L281.6 476.6H283.9L285.1 476.6H287.4L288.6 476.6H290.9L292.0 476.6H294.4L295.5 476.9H297.8L299.0 476.9H301.3L302.5 476.9H304.8L305.9 476.9H308.2L309.4 477.2H311.7L312.9 477.2H315.2L316.3 477.2H318.7L319.8 477.2H322.1L323.3 477.2H325.6L326.8 477.2H329.1L330.2 477.2H332.5L333.7 477.2H336.0L337.2 477.2H339.5L340.6 477.2H343.0L344.1 477.2H346.4L347.6 477.2H349.9L351.1 476.9H353.4L354.5 476.9H356.8L358.0 476.9H360.3L361.5 476.9H363.8L364.9 476.6H367.2L368.4 476.6H370.7L371.9 476.6H374.2L375.3 476.6H377.7L378.8 476.9H381.1L382.3 476.9H384.6L385.8 476.9H388.1L389.2 476.9H391.5L392.7 477.2H395.0L396.2 477.2H398.5L399.6 477.2H402.0L403.1 477.2H405.4L406.6 476.9H408.9L410.1 476.9H412.4L413.5 476.9H415.8L417.0 476.9H419.3L420.5 476.0H422.8L423.9 476.0H426.3L427.4 476.0H429.7L430.9 476.0H433.2L434.3 476.9H436.7L437.8 476.9H440.1L441.3 476.9H443.6L444.8 476.9H447.1L448.2 476.9H450.5L451.7 476.9H454.0L455.2 476.9H457.5L458.6 476.9H461.0L462.1 477.2H464.4L465.6 477.2H467.9L469.1 477.2H471.4L472.5 477.2H474.8L476.0 476.6H478.3L479.5 476.6H481.8L482.9 476.6H485.3L486.4 476.6H488.7L489.9 477.2H492.2L493.4 477.2H495.7L496.8 477.2H499.1L500.3 477.2H502.6L503.8 476.6H506.1L507.2 476.6H509.6L510.7 476.6H513.0L514.2 476.6H516.5L517.6 476.9H520.0L521.1 476.9H523.4L524.6 476.9H526.9L528.1 476.9H530.4L531.5 476.6H533.8L535.0 476.6H537.3L538.5 476.6H540.8L541.9 476.6H544.3L545.4 476.9H547.7L548.9 476.9H551.2L552.4 476.9H554.7L555.8 476.9H558.1L559.3 476.9H561.6L562.8 476.9H565.1L566.2 476.9H568.6L569.7 476.9H572.0L573.2 476.9H575.5L576.7 476.9H579.0L580.1 476.9H582.4L583.6 476.9H585.9L587.1 477.2H589.4L590.5 477.2H592.9L594.0 477.2H596.3L597.5 477.2H599.8L600.9 476.9H603.3L604.4 476.9H606.7L607.9 476.9H610.2L611.4 476.9H613.7L614.8 476.0H617.1L618.3 476.0H620.6L621.8 476.0H624.1L625.2 476.0H627.6L628.7 477.2H631.0L632.2 477.2H634.5L635.7 477.2H638.0L639.1 477.2H641.4L642.6 476.6H644.9L646.1 476.6H648.4L649.5 476.6H651.9L653.0 476.6H655.3L656.5 476.9H658.8L660.0 476.9H662.3L663.4 476.9H665.7L666.9 476.9H669.2L670.4 476.9H672.7L673.8 476.9H676.2L677.3 476.9H679.6L680.8 476.9H683.1L684.2 477.2H686.6L687.7 477.2H690.0L691.2 477.2H693.5L694.7 477.2H697.0L698.1 476.6H700.4L701.6 476.6H703.9L705.1 476.6H707.4L708.5 476.6H710.9L712.0 476.9H714.3L715.5 476.9H717.8L719.0 476.9H721.3L722.4 476.9H724.7L725.9 477.2H728.2L729.4 477.2H731.7L732.8 477.2H735.2L736.3 477.2H738.6L739.8 476.6H742.1L743.3 476.6H745.6L746.7 476.6H749.0L750.2 476.6H752.5L753.7 476.6H756.0L757.1 476.6H759.5L760.6 476.6H762.9L764.1 476.6H766.4L767.5 476.9H769.9L771.0 476.9H773.3L774.5 476.9H776.8L778.0 476.9H780.3L781.4 476.9H783.7L784.9 476.9H787.2L788.4 476.9H790.7L791.8 476.9H794.2L795.3 476.0H797.6L798.8 476.0H801.1L802.3 476.0H804.6L805.7 476.0H808.0L809.2 477.2H811.5L812.7 477.2H815.0L816.1 477.2H818.5L819.6 477.2H821.9L823.1 476.0H825.4L826.6 476.0H828.9L830.0 476.0H832.3L833.5 476.0H835.8L837.0 476.9H839.3L840.4 476.9H842.8L843.9 476.9H846.2L847.4 476.9H849.7L850.9 476.9H853.2L854.3 476.9H856.6L857.8 476.9H860.1L861.3 476.9H863.6L864.7 476.6H867.0L868.2 476.6H870.5L871.7 476.6H874.0L875.1 476.6H877.5L878.6 476.0H880.9L882.1 476.0H884.4L885.6 476.0H887.9L889.0 476.0H891.3L892.5 476.9H892.5V483.3Z" fill="#5e5560"/><g clip-path="url(#cc14)"><path d="M60.50 313.50H893.00M60.50 355.50H893.00M60.50 398.50H893.00M60.50 440.50H893.00M60.50 483.50H893.00M97.50 304.00V487.00M167.50 304.00V487.00M236.50 304.00V487.00M305.50 304.00V487.00M375.50 304.00V487.00M444.50 304.00V487.00M514.50 304.00V487.00M583.50 304.00V487.00M652.50 304.00V487.00M722.50 304.00V487.00M791.50 304.00V487.00M861.50 304.00V487.00" stroke="rgba(240,250,255,0.07)" stroke-width="1" fill="none"/></g><path d="M59.5 393.7L59.5 393.7H61.8L63.0 395.0H65.3L66.4 397.1H68.8L69.9 395.0H72.2L73.4 392.9H75.7L76.9 397.1H79.2L80.3 394.2H82.6L83.8 393.3H86.1L87.3 384.4H89.6L90.7 386.9H93.1L94.2 384.4H96.5L97.7 386.9H100.0L101.2 383.1H103.5L104.6 377.6H106.9L108.1 386.1H110.4L111.6 384.4H113.9L115.0 389.1H117.3L118.5 389.1H120.8L122.0 385.7H124.3L125.4 387.8H127.8L128.9 387.8H131.2L132.4 387.8H134.7L135.9 385.7H138.2L139.3 390.3H141.6L142.8 388.6H145.1L146.3 388.6H148.6L149.7 379.7H152.1L153.2 388.2H155.5L156.7 388.2H159.0L160.2 389.5H162.5L163.6 384.4H165.9L167.1 389.1H169.4L170.6 382.7H172.9L174.0 380.1H176.4L177.5 370.0H179.8L181.0 390.8H183.3L184.4 386.5H186.8L187.9 390.8H190.2L191.4 384.4H193.7L194.9 389.5H197.2L198.3 388.2H200.6L201.8 386.5H204.1L205.3 386.5H207.6L208.7 386.5H211.1L212.2 381.8H214.5L215.7 389.5H218.0L219.2 389.5H221.5L222.6 390.8H224.9L226.1 389.5H228.4L229.6 394.2H231.9L233.0 386.5H235.4L236.5 390.3H238.8L240.0 380.6H242.3L243.5 382.7H245.8L246.9 382.7H249.2L250.4 389.9H252.7L253.9 394.2H256.2L257.3 386.1H259.7L260.8 389.9H263.1L264.3 386.5H266.6L267.8 393.3H270.1L271.2 383.5H273.5L274.7 388.2H277.0L278.2 381.4H280.5L281.6 390.3H283.9L285.1 386.5H287.4L288.6 391.2H290.9L292.0 387.4H294.4L295.5 392.0H297.8L299.0 383.5H301.3L302.5 386.9H304.8L305.9 388.2H308.2L309.4 382.7H311.7L312.9 372.9H315.2L316.3 323.7H318.7L319.8 393.3H322.1L323.3 390.8H325.6L326.8 389.1H329.1L330.2 396.3H332.5L333.7 393.3H336.0L337.2 396.3H339.5L340.6 392.9H343.0L344.1 382.3H346.4L347.6 384.4H349.9L351.1 391.2H353.4L354.5 384.4H356.8L358.0 392.5H360.3L361.5 380.6H363.8L364.9 392.5H367.2L368.4 384.0H370.7L371.9 389.1H374.2L375.3 389.1H377.7L378.8 386.9H381.1L382.3 376.8H384.6L385.8 379.3H388.1L389.2 386.9H391.5L392.7 392.5H395.0L396.2 385.7H398.5L399.6 385.7H402.0L403.1 387.8H405.4L406.6 394.2H408.9L410.1 389.9H412.4L413.5 387.4H415.8L417.0 384.4H419.3L420.5 393.3H422.8L423.9 386.5H426.3L427.4 392.0H429.7L430.9 384.4H433.2L434.3 393.3H436.7L437.8 382.3H440.1L441.3 390.3H443.6L444.8 386.9H447.1L448.2 386.1H450.5L451.7 380.6H454.0L455.2 389.1H457.5L458.6 384.4H461.0L462.1 398.0H464.4L465.6 390.8H467.9L469.1 395.0H471.4L472.5 389.1H474.8L476.0 395.9H478.3L479.5 388.2H481.8L482.9 388.2H485.3L486.4 384.4H488.7L489.9 391.2H492.2L493.4 386.5H495.7L496.8 382.7H499.1L500.3 386.5H502.6L503.8 390.3H506.1L507.2 384.4H509.6L510.7 398.0H513.0L514.2 392.5H516.5L517.6 397.1H520.0L521.1 381.8H523.4L524.6 393.7H526.9L528.1 389.9H530.4L531.5 395.0H533.8L535.0 393.3H537.3L538.5 395.9H540.8L541.9 385.7H544.3L545.4 395.0H547.7L548.9 384.4H551.2L552.4 389.9H554.7L555.8 386.5H558.1L559.3 391.2H561.6L562.8 385.7H565.1L566.2 391.2H568.6L569.7 383.5H572.0L573.2 395.0H575.5L576.7 384.4H579.0L580.1 386.9H582.4L583.6 384.8H585.9L587.1 386.9H589.4L590.5 372.1H592.9L594.0 338.5H596.3L597.5 376.8H599.8L600.9 389.5H603.3L604.4 385.7H606.7L607.9 390.3H610.2L611.4 386.5H613.7L614.8 390.3H617.1L618.3 384.0H620.6L621.8 370.8H624.1L625.2 386.1H627.6L628.7 392.5H631.0L632.2 389.1H634.5L635.7 387.8H638.0L639.1 382.7H641.4L642.6 382.7H644.9L646.1 386.1H648.4L649.5 390.3H651.9L653.0 384.8H655.3L656.5 382.7H658.8L660.0 379.7H662.3L663.4 389.1H665.7L666.9 392.0H669.2L670.4 395.0H672.7L673.8 345.3H676.2L677.3 395.0H679.6L680.8 386.5H683.1L684.2 395.0H686.6L687.7 395.0H690.0L691.2 392.9H693.5L694.7 391.2H697.0L698.1 393.3H700.4L701.6 390.8H703.9L705.1 393.3H707.4L708.5 393.3H710.9L712.0 397.1H714.3L715.5 390.8H717.8L719.0 386.1H721.3L722.4 387.8H724.7L725.9 385.2H728.2L729.4 379.7H731.7L732.8 384.0H735.2L736.3 393.3H738.6L739.8 395.9H742.1L743.3 391.6H745.6L746.7 390.8H749.0L750.2 395.0H752.5L753.7 390.8H756.0L757.1 395.0H759.5L760.6 386.1H762.9L764.1 391.2H766.4L767.5 391.2H769.9L771.0 398.0H773.3L774.5 393.3H776.8L778.0 388.6H780.3L781.4 392.9H783.7L784.9 392.9H787.2L788.4 398.0H790.7L791.8 395.0H794.2L795.3 389.9H797.6L798.8 383.1H801.1L802.3 386.9H804.6L805.7 395.0H808.0L809.2 395.9H811.5L812.7 393.3H815.0L816.1 394.6H818.5L819.6 394.6H821.9L823.1 395.9H825.4L826.6 394.6H828.9L830.0 392.0H832.3L833.5 394.6H835.8L837.0 395.9H839.3L840.4 393.7H842.8L843.9 392.9H846.2L847.4 383.1H849.7L850.9 395.9H853.2L854.3 400.1H856.6L857.8 390.8H860.1L861.3 399.2H863.6L864.7 386.5H867.0L868.2 382.3H870.5L871.7 379.7H874.0L875.1 395.4H877.5L878.6 395.4H880.9L882.1 399.2H884.4L885.6 388.6H887.9L889.0 395.9H891.3L892.5 393.7H892.5" fill="none" stroke="#c8641a" stroke-width="1.9" stroke-linejoin="round"/><path d="M59.5 393.7H61.8M63.0 395.0H65.3M66.4 397.1H68.8M69.9 395.0H72.2M73.4 392.9H75.7M76.9 397.1H79.2M80.3 394.2H82.6M83.8 393.3H86.1M87.3 384.4H89.6M90.7 386.9H93.1M94.2 384.4H96.5M97.7 386.9H100.0M101.2 383.1H103.5M104.6 377.6H106.9M108.1 386.1H110.4M111.6 384.4H113.9M115.0 389.1H117.3M118.5 389.1H120.8M122.0 385.7H124.3M125.4 387.8H127.8M128.9 387.8H131.2M132.4 387.8H134.7M135.9 385.7H138.2M139.3 390.3H141.6M142.8 388.6H145.1M146.3 388.6H148.6M149.7 379.7H152.1M153.2 388.2H155.5M156.7 388.2H159.0M160.2 389.5H162.5M163.6 384.4H165.9M167.1 389.1H169.4M170.6 382.7H172.9M174.0 380.1H176.4M177.5 370.0H179.8M181.0 390.8H183.3M184.4 386.5H186.8M187.9 390.8H190.2M191.4 384.4H193.7M194.9 389.5H197.2M198.3 388.2H200.6M201.8 386.5H204.1M205.3 386.5H207.6M208.7 386.5H211.1M212.2 381.8H214.5M215.7 389.5H218.0M219.2 389.5H221.5M222.6 390.8H224.9M226.1 389.5H228.4M229.6 394.2H231.9M233.0 386.5H235.4M236.5 390.3H238.8M240.0 380.6H242.3M243.5 382.7H245.8M246.9 382.7H249.2M250.4 389.9H252.7M253.9 394.2H256.2M257.3 386.1H259.7M260.8 389.9H263.1M264.3 386.5H266.6M267.8 393.3H270.1M271.2 383.5H273.5M274.7 388.2H277.0M278.2 381.4H280.5M281.6 390.3H283.9M285.1 386.5H287.4M288.6 391.2H290.9M292.0 387.4H294.4M295.5 392.0H297.8M299.0 383.5H301.3M302.5 386.9H304.8M305.9 388.2H308.2M309.4 382.7H311.7M312.9 372.9H315.2M316.3 323.7H318.7M319.8 393.3H322.1M323.3 390.8H325.6M326.8 389.1H329.1M330.2 396.3H332.5M333.7 393.3H336.0M337.2 396.3H339.5M340.6 392.9H343.0M344.1 382.3H346.4M347.6 384.4H349.9M351.1 391.2H353.4M354.5 384.4H356.8M358.0 392.5H360.3M361.5 380.6H363.8M364.9 392.5H367.2M368.4 384.0H370.7M371.9 389.1H374.2M375.3 389.1H377.7M378.8 386.9H381.1M382.3 376.8H384.6M385.8 379.3H388.1M389.2 386.9H391.5M392.7 392.5H395.0M396.2 385.7H398.5M399.6 385.7H402.0M403.1 387.8H405.4M406.6 394.2H408.9M410.1 389.9H412.4M413.5 387.4H415.8M417.0 384.4H419.3M420.5 393.3H422.8M423.9 386.5H426.3M427.4 392.0H429.7M430.9 384.4H433.2M434.3 393.3H436.7M437.8 382.3H440.1M441.3 390.3H443.6M444.8 386.9H447.1M448.2 386.1H450.5M451.7 380.6H454.0M455.2 389.1H457.5M458.6 384.4H461.0M462.1 398.0H464.4M465.6 390.8H467.9M469.1 395.0H471.4M472.5 389.1H474.8M476.0 395.9H478.3M479.5 388.2H481.8M482.9 388.2H485.3M486.4 384.4H488.7M489.9 391.2H492.2M493.4 386.5H495.7M496.8 382.7H499.1M500.3 386.5H502.6M503.8 390.3H506.1M507.2 384.4H509.6M510.7 398.0H513.0M514.2 392.5H516.5M517.6 397.1H520.0M521.1 381.8H523.4M524.6 393.7H526.9M528.1 389.9H530.4M531.5 395.0H533.8M535.0 393.3H537.3M538.5 395.9H540.8M541.9 385.7H544.3M545.4 395.0H547.7M548.9 384.4H551.2M552.4 389.9H554.7M555.8 386.5H558.1M559.3 391.2H561.6M562.8 385.7H565.1M566.2 391.2H568.6M569.7 383.5H572.0M573.2 395.0H575.5M576.7 384.4H579.0M580.1 386.9H582.4M583.6 384.8H585.9M587.1 386.9H589.4M590.5 372.1H592.9M594.0 338.5H596.3M597.5 376.8H599.8M600.9 389.5H603.3M604.4 385.7H606.7M607.9 390.3H610.2M611.4 386.5H613.7M614.8 390.3H617.1M618.3 384.0H620.6M621.8 370.8H624.1M625.2 386.1H627.6M628.7 392.5H631.0M632.2 389.1H634.5M635.7 387.8H638.0M639.1 382.7H641.4M642.6 382.7H644.9M646.1 386.1H648.4M649.5 390.3H651.9M653.0 384.8H655.3M656.5 382.7H658.8M660.0 379.7H662.3M663.4 389.1H665.7M666.9 392.0H669.2M670.4 395.0H672.7M673.8 345.3H676.2M677.3 395.0H679.6M680.8 386.5H683.1M684.2 395.0H686.6M687.7 395.0H690.0M691.2 392.9H693.5M694.7 391.2H697.0M698.1 393.3H700.4M701.6 390.8H703.9M705.1 393.3H707.4M708.5 393.3H710.9M712.0 397.1H714.3M715.5 390.8H717.8M719.0 386.1H721.3M722.4 387.8H724.7M725.9 385.2H728.2M729.4 379.7H731.7M732.8 384.0H735.2M736.3 393.3H738.6M739.8 395.9H742.1M743.3 391.6H745.6M746.7 390.8H749.0M750.2 395.0H752.5M753.7 390.8H756.0M757.1 395.0H759.5M760.6 386.1H762.9M764.1 391.2H766.4M767.5 391.2H769.9M771.0 398.0H773.3M774.5 393.3H776.8M778.0 388.6H780.3M781.4 392.9H783.7M784.9 392.9H787.2M788.4 398.0H790.7M791.8 395.0H794.2M795.3 389.9H797.6M798.8 383.1H801.1M802.3 386.9H804.6M805.7 395.0H808.0M809.2 395.9H811.5M812.7 393.3H815.0M816.1 394.6H818.5M819.6 394.6H821.9M823.1 395.9H825.4M826.6 394.6H828.9M830.0 392.0H832.3M833.5 394.6H835.8M837.0 395.9H839.3M840.4 393.7H842.8M843.9 392.9H846.2M847.4 383.1H849.7M850.9 395.9H853.2M854.3 400.1H856.6M857.8 390.8H860.1M861.3 399.2H863.6M864.7 386.5H867.0M868.2 382.3H870.5M871.7 379.7H874.0M875.1 395.4H877.5M878.6 395.4H880.9M882.1 399.2H884.4M885.6 388.6H887.9M889.0 395.9H891.3M892.5 393.7H892.5" fill="none" stroke="#c8641a" stroke-width="4" stroke-linecap="round"/><path d="M59.5 424.9L59.5 424.9H61.8L63.0 425.4H65.3L66.4 429.8H68.8L69.9 426.0H72.2L73.4 423.0H75.7L76.9 430.7H79.2L80.3 424.5H82.6L83.8 426.0H86.1L87.3 424.5H89.6L90.7 430.7H93.1L94.2 424.9H96.5L97.7 424.9H100.0L101.2 430.7H103.5L104.6 424.5H106.9L108.1 424.9H110.4L111.6 429.8H113.9L115.0 425.4H117.3L118.5 424.1H120.8L122.0 429.8H124.3L125.4 424.5H127.8L128.9 424.5H131.2L132.4 430.7H134.7L135.9 426.0H138.2L139.3 424.5H141.6L142.8 430.7H145.1L146.3 424.9H148.6L149.7 425.4H152.1L153.2 424.5H155.5L156.7 429.8H159.0L160.2 424.5H162.5L163.6 423.0H165.9L167.1 424.1H169.4L170.6 430.7H172.9L174.0 424.5H176.4L177.5 424.1H179.8L181.0 425.4H183.3L184.4 430.7H186.8L187.9 424.1H190.2L191.4 426.0H193.7L194.9 424.5H197.2L198.3 429.8H200.6L201.8 424.9H204.1L205.3 424.1H207.6L208.7 430.2H211.1L212.2 424.9H214.5L215.7 424.5H218.0L219.2 424.9H221.5L222.6 430.2H224.9L226.1 423.0H228.4L229.6 425.4H231.9L233.0 430.7H235.4L236.5 424.5H238.8L240.0 424.9H242.3L243.5 430.2H245.8L246.9 424.1H249.2L250.4 424.9H252.7L253.9 424.9H256.2L257.3 430.7H259.7L260.8 424.5H263.1L264.3 424.9H266.6L267.8 430.2H270.1L271.2 424.9H273.5L274.7 424.9H277.0L278.2 429.8H280.5L281.6 423.0H283.9L285.1 424.5H287.4L288.6 430.2H290.9L292.0 424.1H294.4L295.5 424.9H297.8L299.0 424.5H301.3L302.5 429.8H304.8L305.9 426.0H308.2L309.4 423.0H311.7L312.9 426.0H315.2L316.3 430.2H318.7L319.8 424.1H322.1L323.3 426.0H325.6L326.8 426.0H329.1L330.2 424.1H332.5L333.7 430.2H336.0L337.2 424.5H339.5L340.6 424.1H343.0L344.1 423.0H346.4L347.6 424.9H349.9L351.1 429.8H353.4L354.5 424.1H356.8L358.0 424.9H360.3L361.5 426.0H363.8L364.9 430.2H367.2L368.4 424.5H370.7L371.9 426.0H374.2L375.3 430.7H377.7L378.8 423.0H381.1L382.3 424.9H384.6L385.8 429.8H388.1L389.2 424.9H391.5L392.7 424.9H395.0L396.2 430.2H398.5L399.6 425.4H402.0L403.1 424.9H405.4L406.6 429.8H408.9L410.1 425.4H412.4L413.5 423.0H415.8L417.0 424.9H419.3L420.5 429.8H422.8L423.9 424.1H426.3L427.4 424.9H429.7L430.9 424.9H433.2L434.3 430.2H436.7L437.8 425.4H440.1L441.3 426.0H443.6L444.8 430.7H447.1L448.2 424.1H450.5L451.7 425.4H454.0L455.2 430.2H457.5L458.6 425.4H461.0L462.1 424.9H464.4L465.6 424.9H467.9L469.1 430.7H471.4L472.5 424.5H474.8L476.0 424.9H478.3L479.5 424.5H481.8L482.9 430.2H485.3L486.4 424.1H488.7L489.9 423.0H492.2L493.4 429.8H495.7L496.8 424.1H499.1L500.3 424.1H502.6L503.8 426.0H506.1L507.2 424.9H509.6L510.7 429.8H513.0L514.2 424.9H516.5L517.6 424.9H520.0L521.1 424.9H523.4L524.6 430.7H526.9L528.1 424.1H530.4L531.5 424.9H533.8L535.0 426.0H537.3L538.5 430.7H540.8L541.9 424.9H544.3L545.4 425.4H547.7L548.9 430.2H551.2L552.4 426.0H554.7L555.8 426.0H558.1L559.3 426.0H561.6L562.8 430.7H565.1L566.2 426.0H568.6L569.7 424.9H572.0L573.2 424.5H575.5L576.7 430.7H579.0L580.1 424.5H582.4L583.6 424.9H585.9L587.1 429.8H589.4L590.5 424.9H592.9L594.0 424.5H596.3L597.5 424.9H599.8L600.9 430.7H603.3L604.4 423.0H606.7L607.9 424.9H610.2L611.4 430.2H613.7L614.8 424.9H617.1L618.3 426.0H620.6L621.8 425.4H624.1L625.2 429.8H627.6L628.7 424.1H631.0L632.2 424.9H634.5L635.7 424.9H638.0L639.1 429.8H641.4L642.6 424.5H644.9L646.1 426.0H648.4L649.5 429.8H651.9L653.0 425.4H655.3L656.5 424.1H658.8L660.0 424.5H662.3L663.4 429.8H665.7L666.9 424.1H669.2L670.4 423.0H672.7L673.8 426.0H676.2L677.3 430.2H679.6L680.8 424.9H683.1L684.2 425.4H686.6L687.7 424.9H690.0L691.2 430.7H693.5L694.7 424.5H697.0L698.1 423.0H700.4L701.6 424.5H703.9L705.1 429.8H707.4L708.5 424.5H710.9L712.0 423.0H714.3L715.5 430.7H717.8L719.0 423.0H721.3L722.4 424.9H724.7L725.9 430.7H728.2L729.4 424.5H731.7L732.8 424.9H735.2L736.3 429.8H738.6L739.8 426.0H742.1L743.3 423.0H745.6L746.7 430.2H749.0L750.2 425.4H752.5L753.7 424.1H756.0L757.1 424.5H759.5L760.6 430.2H762.9L764.1 424.9H766.4L767.5 424.9H769.9L771.0 426.0H773.3L774.5 425.4H776.8L778.0 430.7H780.3L781.4 425.4H783.7L784.9 424.9H787.2L788.4 425.4H790.7L791.8 429.8H794.2L795.3 423.0H797.6L798.8 426.0H801.1L802.3 424.9H804.6L805.7 430.2H808.0L809.2 426.0H811.5L812.7 423.0H815.0L816.1 424.1H818.5L819.6 426.0H821.9L823.1 429.8H825.4L826.6 424.9H828.9L830.0 425.4H832.3L833.5 429.8H835.8L837.0 426.0H839.3L840.4 423.0H842.8L843.9 424.1H846.2L847.4 430.2H849.7L850.9 424.1H853.2L854.3 426.0H856.6L857.8 424.1H860.1L861.3 430.7H863.6L864.7 426.0H867.0L868.2 425.4H870.5L871.7 430.2H874.0L875.1 425.4H877.5L878.6 424.5H880.9L882.1 423.0H884.4L885.6 424.5H887.9L889.0 429.8H891.3L892.5 425.4H892.5" fill="none" stroke="#7eb35a" stroke-width="1.9" stroke-linejoin="round"/><path d="M59.5 424.9H61.8M63.0 425.4H65.3M66.4 429.8H68.8M69.9 426.0H72.2M73.4 423.0H75.7M76.9 430.7H79.2M80.3 424.5H82.6M83.8 426.0H86.1M87.3 424.5H89.6M90.7 430.7H93.1M94.2 424.9H96.5M97.7 424.9H100.0M101.2 430.7H103.5M104.6 424.5H106.9M108.1 424.9H110.4M111.6 429.8H113.9M115.0 425.4H117.3M118.5 424.1H120.8M122.0 429.8H124.3M125.4 424.5H127.8M128.9 424.5H131.2M132.4 430.7H134.7M135.9 426.0H138.2M139.3 424.5H141.6M142.8 430.7H145.1M146.3 424.9H148.6M149.7 425.4H152.1M153.2 424.5H155.5M156.7 429.8H159.0M160.2 424.5H162.5M163.6 423.0H165.9M167.1 424.1H169.4M170.6 430.7H172.9M174.0 424.5H176.4M177.5 424.1H179.8M181.0 425.4H183.3M184.4 430.7H186.8M187.9 424.1H190.2M191.4 426.0H193.7M194.9 424.5H197.2M198.3 429.8H200.6M201.8 424.9H204.1M205.3 424.1H207.6M208.7 430.2H211.1M212.2 424.9H214.5M215.7 424.5H218.0M219.2 424.9H221.5M222.6 430.2H224.9M226.1 423.0H228.4M229.6 425.4H231.9M233.0 430.7H235.4M236.5 424.5H238.8M240.0 424.9H242.3M243.5 430.2H245.8M246.9 424.1H249.2M250.4 424.9H252.7M253.9 424.9H256.2M257.3 430.7H259.7M260.8 424.5H263.1M264.3 424.9H266.6M267.8 430.2H270.1M271.2 424.9H273.5M274.7 424.9H277.0M278.2 429.8H280.5M281.6 423.0H283.9M285.1 424.5H287.4M288.6 430.2H290.9M292.0 424.1H294.4M295.5 424.9H297.8M299.0 424.5H301.3M302.5 429.8H304.8M305.9 426.0H308.2M309.4 423.0H311.7M312.9 426.0H315.2M316.3 430.2H318.7M319.8 424.1H322.1M323.3 426.0H325.6M326.8 426.0H329.1M330.2 424.1H332.5M333.7 430.2H336.0M337.2 424.5H339.5M340.6 424.1H343.0M344.1 423.0H346.4M347.6 424.9H349.9M351.1 429.8H353.4M354.5 424.1H356.8M358.0 424.9H360.3M361.5 426.0H363.8M364.9 430.2H367.2M368.4 424.5H370.7M371.9 426.0H374.2M375.3 430.7H377.7M378.8 423.0H381.1M382.3 424.9H384.6M385.8 429.8H388.1M389.2 424.9H391.5M392.7 424.9H395.0M396.2 430.2H398.5M399.6 425.4H402.0M403.1 424.9H405.4M406.6 429.8H408.9M410.1 425.4H412.4M413.5 423.0H415.8M417.0 424.9H419.3M420.5 429.8H422.8M423.9 424.1H426.3M427.4 424.9H429.7M430.9 424.9H433.2M434.3 430.2H436.7M437.8 425.4H440.1M441.3 426.0H443.6M444.8 430.7H447.1M448.2 424.1H450.5M451.7 425.4H454.0M455.2 430.2H457.5M458.6 425.4H461.0M462.1 424.9H464.4M465.6 424.9H467.9M469.1 430.7H471.4M472.5 424.5H474.8M476.0 424.9H478.3M479.5 424.5H481.8M482.9 430.2H485.3M486.4 424.1H488.7M489.9 423.0H492.2M493.4 429.8H495.7M496.8 424.1H499.1M500.3 424.1H502.6M503.8 426.0H506.1M507.2 424.9H509.6M510.7 429.8H513.0M514.2 424.9H516.5M517.6 424.9H520.0M521.1 424.9H523.4M524.6 430.7H526.9M528.1 424.1H530.4M531.5 424.9H533.8M535.0 426.0H537.3M538.5 430.7H540.8M541.9 424.9H544.3M545.4 425.4H547.7M548.9 430.2H551.2M552.4 426.0H554.7M555.8 426.0H558.1M559.3 426.0H561.6M562.8 430.7H565.1M566.2 426.0H568.6M569.7 424.9H572.0M573.2 424.5H575.5M576.7 430.7H579.0M580.1 424.5H582.4M583.6 424.9H585.9M587.1 429.8H589.4M590.5 424.9H592.9M594.0 424.5H596.3M597.5 424.9H599.8M600.9 430.7H603.3M604.4 423.0H606.7M607.9 424.9H610.2M611.4 430.2H613.7M614.8 424.9H617.1M618.3 426.0H620.6M621.8 425.4H624.1M625.2 429.8H627.6M628.7 424.1H631.0M632.2 424.9H634.5M635.7 424.9H638.0M639.1 429.8H641.4M642.6 424.5H644.9M646.1 426.0H648.4M649.5 429.8H651.9M653.0 425.4H655.3M656.5 424.1H658.8M660.0 424.5H662.3M663.4 429.8H665.7M666.9 424.1H669.2M670.4 423.0H672.7M673.8 426.0H676.2M677.3 430.2H679.6M680.8 424.9H683.1M684.2 425.4H686.6M687.7 424.9H690.0M691.2 430.7H693.5M694.7 424.5H697.0M698.1 423.0H700.4M701.6 424.5H703.9M705.1 429.8H707.4M708.5 424.5H710.9M712.0 423.0H714.3M715.5 430.7H717.8M719.0 423.0H721.3M722.4 424.9H724.7M725.9 430.7H728.2M729.4 424.5H731.7M732.8 424.9H735.2M736.3 429.8H738.6M739.8 426.0H742.1M743.3 423.0H745.6M746.7 430.2H749.0M750.2 425.4H752.5M753.7 424.1H756.0M757.1 424.5H759.5M760.6 430.2H762.9M764.1 424.9H766.4M767.5 424.9H769.9M771.0 426.0H773.3M774.5 425.4H776.8M778.0 430.7H780.3M781.4 425.4H783.7M784.9 424.9H787.2M788.4 425.4H790.7M791.8 429.8H794.2M795.3 423.0H797.6M798.8 426.0H801.1M802.3 424.9H804.6M805.7 430.2H808.0M809.2 426.0H811.5M812.7 423.0H815.0M816.1 424.1H818.5M819.6 426.0H821.9M823.1 429.8H825.4M826.6 424.9H828.9M830.0 425.4H832.3M833.5 429.8H835.8M837.0 426.0H839.3M840.4 423.0H842.8M843.9 424.1H846.2M847.4 430.2H849.7M850.9 424.1H853.2M854.3 426.0H856.6M857.8 424.1H860.1M861.3 430.7H863.6M864.7 426.0H867.0M868.2 425.4H870.5M871.7 430.2H874.0M875.1 425.4H877.5M878.6 424.5H880.9M882.1 423.0H884.4M885.6 424.5H887.9M889.0 429.8H891.3M892.5 425.4H892.5" fill="none" stroke="#7eb35a" stroke-width="4" stroke-linecap="round"/><path d="M59.5 460.0L59.5 460.0H61.8L63.0 461.0H65.3L66.4 460.0H68.8L69.9 460.0H72.2L73.4 459.5H75.7L76.9 461.0H79.2L80.3 461.0H82.6L83.8 459.5H86.1L87.3 459.5H89.6L90.7 459.5H93.1L94.2 459.5H96.5L97.7 459.5H100.0L101.2 459.1H103.5L104.6 459.1H106.9L108.1 458.7H110.4L111.6 461.0H113.9L115.0 461.0H117.3L118.5 458.3H120.8L122.0 458.3H124.3L125.4 458.3H127.8L128.9 458.7H131.2L132.4 458.7H134.7L135.9 458.7H138.2L139.3 460.0H141.6L142.8 460.0H145.1L146.3 455.7H148.6L149.7 455.7H152.1L153.2 455.7H155.5L156.7 455.7H159.0L160.2 461.0H162.5L163.6 461.0H165.9L167.1 460.0H169.4L170.6 460.0H172.9L174.0 460.0H176.4L177.5 461.0H179.8L181.0 460.0H183.3L184.4 458.3H186.8L187.9 458.3H190.2L191.4 458.3H193.7L194.9 460.6H197.2L198.3 460.6H200.6L201.8 460.6H204.1L205.3 461.0H207.6L208.7 461.0H211.1L212.2 458.3H214.5L215.7 461.0H218.0L219.2 459.5H221.5L222.6 459.5H224.9L226.1 461.0H228.4L229.6 458.3H231.9L233.0 458.3H235.4L236.5 458.3H238.8L240.0 461.0H242.3L243.5 458.3H245.8L246.9 458.3H249.2L250.4 459.5H252.7L253.9 459.5H256.2L257.3 458.3H259.7L260.8 458.3H263.1L264.3 458.3H266.6L267.8 458.3H270.1L271.2 458.3H273.5L274.7 458.3H277.0L278.2 459.5H280.5L281.6 457.0H283.9L285.1 457.0H287.4L288.6 457.0H290.9L292.0 459.5H294.4L295.5 459.5H297.8L299.0 459.5H301.3L302.5 459.5H304.8L305.9 460.0H308.2L309.4 460.0H311.7L312.9 460.6H315.2L316.3 460.6H318.7L319.8 458.3H322.1L323.3 458.3H325.6L326.8 460.6H329.1L330.2 458.7H332.5L333.7 459.5H336.0L337.2 459.5H339.5L340.6 460.6H343.0L344.1 459.1H346.4L347.6 459.5H349.9L351.1 458.3H353.4L354.5 460.6H356.8L358.0 460.6H360.3L361.5 458.3H363.8L364.9 459.5H367.2L368.4 458.7H370.7L371.9 458.7H374.2L375.3 458.7H377.7L378.8 458.7H381.1L382.3 458.7H384.6L385.8 458.7H388.1L389.2 459.1H391.5L392.7 459.1H395.0L396.2 460.6H398.5L399.6 460.6H402.0L403.1 461.0H405.4L406.6 456.6H408.9L410.1 456.6H412.4L413.5 456.6H415.8L417.0 461.0H419.3L420.5 461.0H422.8L423.9 459.1H426.3L427.4 459.1H429.7L430.9 459.1H433.2L434.3 459.5H436.7L437.8 459.5H440.1L441.3 459.5H443.6L444.8 460.6H447.1L448.2 459.5H450.5L451.7 460.6H454.0L455.2 460.6H457.5L458.6 459.5H461.0L462.1 460.0H464.4L465.6 460.0H467.9L469.1 460.0H471.4L472.5 460.0H474.8L476.0 459.5H478.3L479.5 459.5H481.8L482.9 460.0H485.3L486.4 460.0H488.7L489.9 460.0H492.2L493.4 458.3H495.7L496.8 458.3H499.1L500.3 460.6H502.6L503.8 460.6H506.1L507.2 461.0H509.6L510.7 457.0H513.0L514.2 457.0H516.5L517.6 460.6H520.0L521.1 460.6H523.4L524.6 460.6H526.9L528.1 460.6H530.4L531.5 460.6H533.8L535.0 459.5H537.3L538.5 454.0H540.8L541.9 454.0H544.3L545.4 459.1H547.7L548.9 459.1H551.2L552.4 459.1H554.7L555.8 458.7H558.1L559.3 458.7H561.6L562.8 460.0H565.1L566.2 459.5H568.6L569.7 460.0H572.0L573.2 460.0H575.5L576.7 461.0H579.0L580.1 459.5H582.4L583.6 459.5H585.9L587.1 459.5H589.4L590.5 459.5H592.9L594.0 459.5H596.3L597.5 459.5H599.8L600.9 459.5H603.3L604.4 458.3H606.7L607.9 458.3H610.2L611.4 458.3H613.7L614.8 460.0H617.1L618.3 460.0H620.6L621.8 459.1H624.1L625.2 459.5H627.6L628.7 461.0H631.0L632.2 459.5H634.5L635.7 459.5H638.0L639.1 459.5H641.4L642.6 458.3H644.9L646.1 458.3H648.4L649.5 458.7H651.9L653.0 458.7H655.3L656.5 458.7H658.8L660.0 458.7H662.3L663.4 458.7H665.7L666.9 459.5H669.2L670.4 459.5H672.7L673.8 459.5H676.2L677.3 459.5H679.6L680.8 458.7H683.1L684.2 458.7H686.6L687.7 461.0H690.0L691.2 461.0H693.5L694.7 459.5H697.0L698.1 456.1H700.4L701.6 456.1H703.9L705.1 460.6H707.4L708.5 460.6H710.9L712.0 459.5H714.3L715.5 459.5H717.8L719.0 459.5H721.3L722.4 459.5H724.7L725.9 459.5H728.2L729.4 461.0H731.7L732.8 461.0H735.2L736.3 460.0H738.6L739.8 459.5H742.1L743.3 459.5H745.6L746.7 461.0H749.0L750.2 461.0H752.5L753.7 459.1H756.0L757.1 459.1H759.5L760.6 459.1H762.9L764.1 461.0H766.4L767.5 457.0H769.9L771.0 457.0H773.3L774.5 457.0H776.8L778.0 460.0H780.3L781.4 459.1H783.7L784.9 459.1H787.2L788.4 460.6H790.7L791.8 460.6H794.2L795.3 459.5H797.6L798.8 459.5H801.1L802.3 459.5H804.6L805.7 459.5H808.0L809.2 461.0H811.5L812.7 459.5H815.0L816.1 460.0H818.5L819.6 460.0H821.9L823.1 461.0H825.4L826.6 461.0H828.9L830.0 461.0H832.3L833.5 461.0H835.8L837.0 459.5H839.3L840.4 460.6H842.8L843.9 460.6H846.2L847.4 460.6H849.7L850.9 460.0H853.2L854.3 460.0H856.6L857.8 460.0H860.1L861.3 458.7H863.6L864.7 458.7H867.0L868.2 455.7H870.5L871.7 455.7H874.0L875.1 455.7H877.5L878.6 459.5H880.9L882.1 460.0H884.4L885.6 458.7H887.9L889.0 458.7H891.3L892.5 458.7H892.5" fill="none" stroke="#c277c6" stroke-width="1.9" stroke-linejoin="round"/><path d="M59.5 460.0H61.8M63.0 461.0H65.3M66.4 460.0H68.8M69.9 460.0H72.2M73.4 459.5H75.7M76.9 461.0H79.2M80.3 461.0H82.6M83.8 459.5H86.1M87.3 459.5H89.6M90.7 459.5H93.1M94.2 459.5H96.5M97.7 459.5H100.0M101.2 459.1H103.5M104.6 459.1H106.9M108.1 458.7H110.4M111.6 461.0H113.9M115.0 461.0H117.3M118.5 458.3H120.8M122.0 458.3H124.3M125.4 458.3H127.8M128.9 458.7H131.2M132.4 458.7H134.7M135.9 458.7H138.2M139.3 460.0H141.6M142.8 460.0H145.1M146.3 455.7H148.6M149.7 455.7H152.1M153.2 455.7H155.5M156.7 455.7H159.0M160.2 461.0H162.5M163.6 461.0H165.9M167.1 460.0H169.4M170.6 460.0H172.9M174.0 460.0H176.4M177.5 461.0H179.8M181.0 460.0H183.3M184.4 458.3H186.8M187.9 458.3H190.2M191.4 458.3H193.7M194.9 460.6H197.2M198.3 460.6H200.6M201.8 460.6H204.1M205.3 461.0H207.6M208.7 461.0H211.1M212.2 458.3H214.5M215.7 461.0H218.0M219.2 459.5H221.5M222.6 459.5H224.9M226.1 461.0H228.4M229.6 458.3H231.9M233.0 458.3H235.4M236.5 458.3H238.8M240.0 461.0H242.3M243.5 458.3H245.8M246.9 458.3H249.2M250.4 459.5H252.7M253.9 459.5H256.2M257.3 458.3H259.7M260.8 458.3H263.1M264.3 458.3H266.6M267.8 458.3H270.1M271.2 458.3H273.5M274.7 458.3H277.0M278.2 459.5H280.5M281.6 457.0H283.9M285.1 457.0H287.4M288.6 457.0H290.9M292.0 459.5H294.4M295.5 459.5H297.8M299.0 459.5H301.3M302.5 459.5H304.8M305.9 460.0H308.2M309.4 460.0H311.7M312.9 460.6H315.2M316.3 460.6H318.7M319.8 458.3H322.1M323.3 458.3H325.6M326.8 460.6H329.1M330.2 458.7H332.5M333.7 459.5H336.0M337.2 459.5H339.5M340.6 460.6H343.0M344.1 459.1H346.4M347.6 459.5H349.9M351.1 458.3H353.4M354.5 460.6H356.8M358.0 460.6H360.3M361.5 458.3H363.8M364.9 459.5H367.2M368.4 458.7H370.7M371.9 458.7H374.2M375.3 458.7H377.7M378.8 458.7H381.1M382.3 458.7H384.6M385.8 458.7H388.1M389.2 459.1H391.5M392.7 459.1H395.0M396.2 460.6H398.5M399.6 460.6H402.0M403.1 461.0H405.4M406.6 456.6H408.9M410.1 456.6H412.4M413.5 456.6H415.8M417.0 461.0H419.3M420.5 461.0H422.8M423.9 459.1H426.3M427.4 459.1H429.7M430.9 459.1H433.2M434.3 459.5H436.7M437.8 459.5H440.1M441.3 459.5H443.6M444.8 460.6H447.1M448.2 459.5H450.5M451.7 460.6H454.0M455.2 460.6H457.5M458.6 459.5H461.0M462.1 460.0H464.4M465.6 460.0H467.9M469.1 460.0H471.4M472.5 460.0H474.8M476.0 459.5H478.3M479.5 459.5H481.8M482.9 460.0H485.3M486.4 460.0H488.7M489.9 460.0H492.2M493.4 458.3H495.7M496.8 458.3H499.1M500.3 460.6H502.6M503.8 460.6H506.1M507.2 461.0H509.6M510.7 457.0H513.0M514.2 457.0H516.5M517.6 460.6H520.0M521.1 460.6H523.4M524.6 460.6H526.9M528.1 460.6H530.4M531.5 460.6H533.8M535.0 459.5H537.3M538.5 454.0H540.8M541.9 454.0H544.3M545.4 459.1H547.7M548.9 459.1H551.2M552.4 459.1H554.7M555.8 458.7H558.1M559.3 458.7H561.6M562.8 460.0H565.1M566.2 459.5H568.6M569.7 460.0H572.0M573.2 460.0H575.5M576.7 461.0H579.0M580.1 459.5H582.4M583.6 459.5H585.9M587.1 459.5H589.4M590.5 459.5H592.9M594.0 459.5H596.3M597.5 459.5H599.8M600.9 459.5H603.3M604.4 458.3H606.7M607.9 458.3H610.2M611.4 458.3H613.7M614.8 460.0H617.1M618.3 460.0H620.6M621.8 459.1H624.1M625.2 459.5H627.6M628.7 461.0H631.0M632.2 459.5H634.5M635.7 459.5H638.0M639.1 459.5H641.4M642.6 458.3H644.9M646.1 458.3H648.4M649.5 458.7H651.9M653.0 458.7H655.3M656.5 458.7H658.8M660.0 458.7H662.3M663.4 458.7H665.7M666.9 459.5H669.2M670.4 459.5H672.7M673.8 459.5H676.2M677.3 459.5H679.6M680.8 458.7H683.1M684.2 458.7H686.6M687.7 461.0H690.0M691.2 461.0H693.5M694.7 459.5H697.0M698.1 456.1H700.4M701.6 456.1H703.9M705.1 460.6H707.4M708.5 460.6H710.9M712.0 459.5H714.3M715.5 459.5H717.8M719.0 459.5H721.3M722.4 459.5H724.7M725.9 459.5H728.2M729.4 461.0H731.7M732.8 461.0H735.2M736.3 460.0H738.6M739.8 459.5H742.1M743.3 459.5H745.6M746.7 461.0H749.0M750.2 461.0H752.5M753.7 459.1H756.0M757.1 459.1H759.5M760.6 459.1H762.9M764.1 461.0H766.4M767.5 457.0H769.9M771.0 457.0H773.3M774.5 457.0H776.8M778.0 460.0H780.3M781.4 459.1H783.7M784.9 459.1H787.2M788.4 460.6H790.7M791.8 460.6H794.2M795.3 459.5H797.6M798.8 459.5H801.1M802.3 459.5H804.6M805.7 459.5H808.0M809.2 461.0H811.5M812.7 459.5H815.0M816.1 460.0H818.5M819.6 460.0H821.9M823.1 461.0H825.4M826.6 461.0H828.9M830.0 461.0H832.3M833.5 461.0H835.8M837.0 459.5H839.3M840.4 460.6H842.8M843.9 460.6H846.2M847.4 460.6H849.7M850.9 460.0H853.2M854.3 460.0H856.6M857.8 460.0H860.1M861.3 458.7H863.6M864.7 458.7H867.0M868.2 455.7H870.5M871.7 455.7H874.0M875.1 455.7H877.5M878.6 459.5H880.9M882.1 460.0H884.4M885.6 458.7H887.9M889.0 458.7H891.3M892.5 458.7H892.5" fill="none" stroke="#c277c6" stroke-width="4" stroke-linecap="round"/><path d="M59.5 476.9L59.5 476.9H61.8L63.0 476.9H65.3L66.4 476.9H68.8L69.9 476.9H72.2L73.4 476.9H75.7L76.9 476.9H79.2L80.3 476.9H82.6L83.8 476.9H86.1L87.3 476.0H89.6L90.7 476.0H93.1L94.2 476.0H96.5L97.7 476.0H100.0L101.2 476.9H103.5L104.6 476.9H106.9L108.1 476.9H110.4L111.6 476.9H113.9L115.0 476.9H117.3L118.5 476.9H120.8L122.0 476.9H124.3L125.4 476.9H127.8L128.9 476.0H131.2L132.4 476.0H134.7L135.9 476.0H138.2L139.3 476.0H141.6L142.8 476.0H145.1L146.3 476.0H148.6L149.7 476.0H152.1L153.2 476.0H155.5L156.7 476.0H159.0L160.2 476.0H162.5L163.6 476.0H165.9L167.1 476.0H169.4L170.6 477.2H172.9L174.0 477.2H176.4L177.5 477.2H179.8L181.0 477.2H183.3L184.4 476.0H186.8L187.9 476.0H190.2L191.4 476.0H193.7L194.9 476.0H197.2L198.3 476.6H200.6L201.8 476.6H204.1L205.3 476.6H207.6L208.7 476.6H211.1L212.2 476.9H214.5L215.7 476.9H218.0L219.2 476.9H221.5L222.6 476.9H224.9L226.1 476.0H228.4L229.6 476.0H231.9L233.0 476.0H235.4L236.5 476.0H238.8L240.0 476.6H242.3L243.5 476.6H245.8L246.9 476.6H249.2L250.4 476.6H252.7L253.9 476.6H256.2L257.3 476.6H259.7L260.8 476.6H263.1L264.3 476.6H266.6L267.8 476.6H270.1L271.2 476.6H273.5L274.7 476.6H277.0L278.2 476.6H280.5L281.6 476.6H283.9L285.1 476.6H287.4L288.6 476.6H290.9L292.0 476.6H294.4L295.5 476.9H297.8L299.0 476.9H301.3L302.5 476.9H304.8L305.9 476.9H308.2L309.4 477.2H311.7L312.9 477.2H315.2L316.3 477.2H318.7L319.8 477.2H322.1L323.3 477.2H325.6L326.8 477.2H329.1L330.2 477.2H332.5L333.7 477.2H336.0L337.2 477.2H339.5L340.6 477.2H343.0L344.1 477.2H346.4L347.6 477.2H349.9L351.1 476.9H353.4L354.5 476.9H356.8L358.0 476.9H360.3L361.5 476.9H363.8L364.9 476.6H367.2L368.4 476.6H370.7L371.9 476.6H374.2L375.3 476.6H377.7L378.8 476.9H381.1L382.3 476.9H384.6L385.8 476.9H388.1L389.2 476.9H391.5L392.7 477.2H395.0L396.2 477.2H398.5L399.6 477.2H402.0L403.1 477.2H405.4L406.6 476.9H408.9L410.1 476.9H412.4L413.5 476.9H415.8L417.0 476.9H419.3L420.5 476.0H422.8L423.9 476.0H426.3L427.4 476.0H429.7L430.9 476.0H433.2L434.3 476.9H436.7L437.8 476.9H440.1L441.3 476.9H443.6L444.8 476.9H447.1L448.2 476.9H450.5L451.7 476.9H454.0L455.2 476.9H457.5L458.6 476.9H461.0L462.1 477.2H464.4L465.6 477.2H467.9L469.1 477.2H471.4L472.5 477.2H474.8L476.0 476.6H478.3L479.5 476.6H481.8L482.9 476.6H485.3L486.4 476.6H488.7L489.9 477.2H492.2L493.4 477.2H495.7L496.8 477.2H499.1L500.3 477.2H502.6L503.8 476.6H506.1L507.2 476.6H509.6L510.7 476.6H513.0L514.2 476.6H516.5L517.6 476.9H520.0L521.1 476.9H523.4L524.6 476.9H526.9L528.1 476.9H530.4L531.5 476.6H533.8L535.0 476.6H537.3L538.5 476.6H540.8L541.9 476.6H544.3L545.4 476.9H547.7L548.9 476.9H551.2L552.4 476.9H554.7L555.8 476.9H558.1L559.3 476.9H561.6L562.8 476.9H565.1L566.2 476.9H568.6L569.7 476.9H572.0L573.2 476.9H575.5L576.7 476.9H579.0L580.1 476.9H582.4L583.6 476.9H585.9L587.1 477.2H589.4L590.5 477.2H592.9L594.0 477.2H596.3L597.5 477.2H599.8L600.9 476.9H603.3L604.4 476.9H606.7L607.9 476.9H610.2L611.4 476.9H613.7L614.8 476.0H617.1L618.3 476.0H620.6L621.8 476.0H624.1L625.2 476.0H627.6L628.7 477.2H631.0L632.2 477.2H634.5L635.7 477.2H638.0L639.1 477.2H641.4L642.6 476.6H644.9L646.1 476.6H648.4L649.5 476.6H651.9L653.0 476.6H655.3L656.5 476.9H658.8L660.0 476.9H662.3L663.4 476.9H665.7L666.9 476.9H669.2L670.4 476.9H672.7L673.8 476.9H676.2L677.3 476.9H679.6L680.8 476.9H683.1L684.2 477.2H686.6L687.7 477.2H690.0L691.2 477.2H693.5L694.7 477.2H697.0L698.1 476.6H700.4L701.6 476.6H703.9L705.1 476.6H707.4L708.5 476.6H710.9L712.0 476.9H714.3L715.5 476.9H717.8L719.0 476.9H721.3L722.4 476.9H724.7L725.9 477.2H728.2L729.4 477.2H731.7L732.8 477.2H735.2L736.3 477.2H738.6L739.8 476.6H742.1L743.3 476.6H745.6L746.7 476.6H749.0L750.2 476.6H752.5L753.7 476.6H756.0L757.1 476.6H759.5L760.6 476.6H762.9L764.1 476.6H766.4L767.5 476.9H769.9L771.0 476.9H773.3L774.5 476.9H776.8L778.0 476.9H780.3L781.4 476.9H783.7L784.9 476.9H787.2L788.4 476.9H790.7L791.8 476.9H794.2L795.3 476.0H797.6L798.8 476.0H801.1L802.3 476.0H804.6L805.7 476.0H808.0L809.2 477.2H811.5L812.7 477.2H815.0L816.1 477.2H818.5L819.6 477.2H821.9L823.1 476.0H825.4L826.6 476.0H828.9L830.0 476.0H832.3L833.5 476.0H835.8L837.0 476.9H839.3L840.4 476.9H842.8L843.9 476.9H846.2L847.4 476.9H849.7L850.9 476.9H853.2L854.3 476.9H856.6L857.8 476.9H860.1L861.3 476.9H863.6L864.7 476.6H867.0L868.2 476.6H870.5L871.7 476.6H874.0L875.1 476.6H877.5L878.6 476.0H880.9L882.1 476.0H884.4L885.6 476.0H887.9L889.0 476.0H891.3L892.5 476.9H892.5" fill="none" stroke="#5980b1" stroke-width="1.8" stroke-linejoin="round"/><path d="M59.5 476.9H61.8M63.0 476.9H65.3M66.4 476.9H68.8M69.9 476.9H72.2M73.4 476.9H75.7M76.9 476.9H79.2M80.3 476.9H82.6M83.8 476.9H86.1M87.3 476.0H89.6M90.7 476.0H93.1M94.2 476.0H96.5M97.7 476.0H100.0M101.2 476.9H103.5M104.6 476.9H106.9M108.1 476.9H110.4M111.6 476.9H113.9M115.0 476.9H117.3M118.5 476.9H120.8M122.0 476.9H124.3M125.4 476.9H127.8M128.9 476.0H131.2M132.4 476.0H134.7M135.9 476.0H138.2M139.3 476.0H141.6M142.8 476.0H145.1M146.3 476.0H148.6M149.7 476.0H152.1M153.2 476.0H155.5M156.7 476.0H159.0M160.2 476.0H162.5M163.6 476.0H165.9M167.1 476.0H169.4M170.6 477.2H172.9M174.0 477.2H176.4M177.5 477.2H179.8M181.0 477.2H183.3M184.4 476.0H186.8M187.9 476.0H190.2M191.4 476.0H193.7M194.9 476.0H197.2M198.3 476.6H200.6M201.8 476.6H204.1M205.3 476.6H207.6M208.7 476.6H211.1M212.2 476.9H214.5M215.7 476.9H218.0M219.2 476.9H221.5M222.6 476.9H224.9M226.1 476.0H228.4M229.6 476.0H231.9M233.0 476.0H235.4M236.5 476.0H238.8M240.0 476.6H242.3M243.5 476.6H245.8M246.9 476.6H249.2M250.4 476.6H252.7M253.9 476.6H256.2M257.3 476.6H259.7M260.8 476.6H263.1M264.3 476.6H266.6M267.8 476.6H270.1M271.2 476.6H273.5M274.7 476.6H277.0M278.2 476.6H280.5M281.6 476.6H283.9M285.1 476.6H287.4M288.6 476.6H290.9M292.0 476.6H294.4M295.5 476.9H297.8M299.0 476.9H301.3M302.5 476.9H304.8M305.9 476.9H308.2M309.4 477.2H311.7M312.9 477.2H315.2M316.3 477.2H318.7M319.8 477.2H322.1M323.3 477.2H325.6M326.8 477.2H329.1M330.2 477.2H332.5M333.7 477.2H336.0M337.2 477.2H339.5M340.6 477.2H343.0M344.1 477.2H346.4M347.6 477.2H349.9M351.1 476.9H353.4M354.5 476.9H356.8M358.0 476.9H360.3M361.5 476.9H363.8M364.9 476.6H367.2M368.4 476.6H370.7M371.9 476.6H374.2M375.3 476.6H377.7M378.8 476.9H381.1M382.3 476.9H384.6M385.8 476.9H388.1M389.2 476.9H391.5M392.7 477.2H395.0M396.2 477.2H398.5M399.6 477.2H402.0M403.1 477.2H405.4M406.6 476.9H408.9M410.1 476.9H412.4M413.5 476.9H415.8M417.0 476.9H419.3M420.5 476.0H422.8M423.9 476.0H426.3M427.4 476.0H429.7M430.9 476.0H433.2M434.3 476.9H436.7M437.8 476.9H440.1M441.3 476.9H443.6M444.8 476.9H447.1M448.2 476.9H450.5M451.7 476.9H454.0M455.2 476.9H457.5M458.6 476.9H461.0M462.1 477.2H464.4M465.6 477.2H467.9M469.1 477.2H471.4M472.5 477.2H474.8M476.0 476.6H478.3M479.5 476.6H481.8M482.9 476.6H485.3M486.4 476.6H488.7M489.9 477.2H492.2M493.4 477.2H495.7M496.8 477.2H499.1M500.3 477.2H502.6M503.8 476.6H506.1M507.2 476.6H509.6M510.7 476.6H513.0M514.2 476.6H516.5M517.6 476.9H520.0M521.1 476.9H523.4M524.6 476.9H526.9M528.1 476.9H530.4M531.5 476.6H533.8M535.0 476.6H537.3M538.5 476.6H540.8M541.9 476.6H544.3M545.4 476.9H547.7M548.9 476.9H551.2M552.4 476.9H554.7M555.8 476.9H558.1M559.3 476.9H561.6M562.8 476.9H565.1M566.2 476.9H568.6M569.7 476.9H572.0M573.2 476.9H575.5M576.7 476.9H579.0M580.1 476.9H582.4M583.6 476.9H585.9M587.1 477.2H589.4M590.5 477.2H592.9M594.0 477.2H596.3M597.5 477.2H599.8M600.9 476.9H603.3M604.4 476.9H606.7M607.9 476.9H610.2M611.4 476.9H613.7M614.8 476.0H617.1M618.3 476.0H620.6M621.8 476.0H624.1M625.2 476.0H627.6M628.7 477.2H631.0M632.2 477.2H634.5M635.7 477.2H638.0M639.1 477.2H641.4M642.6 476.6H644.9M646.1 476.6H648.4M649.5 476.6H651.9M653.0 476.6H655.3M656.5 476.9H658.8M660.0 476.9H662.3M663.4 476.9H665.7M666.9 476.9H669.2M670.4 476.9H672.7M673.8 476.9H676.2M677.3 476.9H679.6M680.8 476.9H683.1M684.2 477.2H686.6M687.7 477.2H690.0M691.2 477.2H693.5M694.7 477.2H697.0M698.1 476.6H700.4M701.6 476.6H703.9M705.1 476.6H707.4M708.5 476.6H710.9M712.0 476.9H714.3M715.5 476.9H717.8M719.0 476.9H721.3M722.4 476.9H724.7M725.9 477.2H728.2M729.4 477.2H731.7M732.8 477.2H735.2M736.3 477.2H738.6M739.8 476.6H742.1M743.3 476.6H745.6M746.7 476.6H749.0M750.2 476.6H752.5M753.7 476.6H756.0M757.1 476.6H759.5M760.6 476.6H762.9M764.1 476.6H766.4M767.5 476.9H769.9M771.0 476.9H773.3M774.5 476.9H776.8M778.0 476.9H780.3M781.4 476.9H783.7M784.9 476.9H787.2M788.4 476.9H790.7M791.8 476.9H794.2M795.3 476.0H797.6M798.8 476.0H801.1M802.3 476.0H804.6M805.7 476.0H808.0M809.2 477.2H811.5M812.7 477.2H815.0M816.1 477.2H818.5M819.6 477.2H821.9M823.1 476.0H825.4M826.6 476.0H828.9M830.0 476.0H832.3M833.5 476.0H835.8M837.0 476.9H839.3M840.4 476.9H842.8M843.9 476.9H846.2M847.4 476.9H849.7M850.9 476.9H853.2M854.3 476.9H856.6M857.8 476.9H860.1M861.3 476.9H863.6M864.7 476.6H867.0M868.2 476.6H870.5M871.7 476.6H874.0M875.1 476.6H877.5M878.6 476.0H880.9M882.1 476.0H884.4M885.6 476.0H887.9M889.0 476.0H891.3M892.5 476.9H892.5" fill="none" stroke="#5980b1" stroke-width="3.7" stroke-linecap="round"/><path d="M61.5 479.4H892.5" stroke="#a5a0d8" stroke-width="1.3" stroke-dasharray="14 3 22 5 9 2 31 4"/><path d="M60.5 481.9H892.5" stroke="#c9566f" stroke-width="3.2" stroke-dasharray="7 3 2 6 11 2 4 9 3 5"/><path d="M60.5 480.2H892.5" stroke="#e0607a" stroke-width="1.5" stroke-dasharray="3 9 6 22 2.5 14 7 31 4 18"/><path d="M62.0 482.1H892.5" stroke="#ddbe3b" stroke-width="3.6" stroke-linecap="butt" stroke-dasharray="4.5 1.4 3 1.2 4 2 6.5 1.6 4.5 1.3 10 2 8 2.6 3.5 1.6 14 1.5 5.5 1.3 9 2.2 17 1.6"/><path d="M65.5 484.4H892.5" stroke="#0c1424" stroke-width=".9"/><path d="M81.7 481.7h2.6" stroke="#5a3d86" stroke-width="3" stroke-linecap="round"/><path d="M99.8 482.9h2.6" stroke="#1f4e8c" stroke-width="3" stroke-linecap="round"/><path d="M124.8 482.9h2.6" stroke="#5a3d86" stroke-width="3" stroke-linecap="round"/><path d="M194.2 481.7h2.6" stroke="#1f4e8c" stroke-width="3" stroke-linecap="round"/><path d="M252.5 482.1h2.6" stroke="#8f3bb8" stroke-width="3" stroke-linecap="round"/><path d="M303.8 482.9h2.6" stroke="#8ab8ff" stroke-width="3" stroke-linecap="round"/><path d="M383.0 482.1h2.6" stroke="#8ab8ff" stroke-width="3" stroke-linecap="round"/><path d="M406.6 482.9h2.6" stroke="#8ab8ff" stroke-width="3" stroke-linecap="round"/><path d="M423.2 482.9h2.6" stroke="#5a3d86" stroke-width="3" stroke-linecap="round"/><path d="M439.9 481.7h2.6" stroke="#1f4e8c" stroke-width="3" stroke-linecap="round"/><path d="M444.1 482.9h2.6" stroke="#37872d" stroke-width="3" stroke-linecap="round"/><path d="M494.0 481.7h2.6" stroke="#1f4e8c" stroke-width="3" stroke-linecap="round"/><path d="M506.5 482.1h2.6" stroke="#5a3d86" stroke-width="3" stroke-linecap="round"/><path d="M539.9 482.1h2.6" stroke="#5a3d86" stroke-width="3" stroke-linecap="round"/><path d="M562.1 482.9h2.6" stroke="#37872d" stroke-width="3" stroke-linecap="round"/><path d="M606.5 481.7h2.6" stroke="#1f4e8c" stroke-width="3" stroke-linecap="round"/><path d="M631.5 481.7h2.6" stroke="#1f4e8c" stroke-width="3" stroke-linecap="round"/><path d="M639.8 482.9h2.6" stroke="#1f4e8c" stroke-width="3" stroke-linecap="round"/><path d="M685.6 482.1h2.6" stroke="#1f4e8c" stroke-width="3" stroke-linecap="round"/><path d="M759.2 482.9h2.6" stroke="#8ab8ff" stroke-width="3" stroke-linecap="round"/><path d="M781.4 482.9h2.6" stroke="#ff780a" stroke-width="3" stroke-linecap="round"/><path d="M831.4 482.1h2.6" stroke="#1f4e8c" stroke-width="3" stroke-linecap="round"/><path d="M843.9 482.1h2.6" stroke="#8f3bb8" stroke-width="3" stroke-linecap="round"/><path d="M151.1 482.9h2.6" stroke="#ff780a" stroke-width="3" stroke-linecap="round"/><path d="M419.8 478.5h2.2" stroke="#9c0f02" stroke-width="3.4" stroke-linecap="round"/><path d="M847.4 464.6V482.0" stroke="#b08a8a" stroke-width="1.4"/><path d="M846.3 461.8h2.2" stroke="#6d1f62" stroke-width="3.4" stroke-linecap="round"/><path d="M846.3 465.0h2.2" stroke="#b7dbab" stroke-width="3.4" stroke-linecap="round"/></svg>
<svg class="b" style="left:1109.10px;top:305.50px;" width="6.6" height="4.4" viewBox="0 0 6.6 4.4"><path d="M1 1 L3.3 3.4 L5.6 1" fill="none" stroke="#6e9fff" stroke-width="1.2" stroke-linecap="round" stroke-linejoin="round"/></svg>
<div class="b" style="left:902.00px;top:319.00px;width:345.60px;height:1.00px;background:#2f3137;"></div>
<div class="b" style="left:909.80px;top:329.00px;width:14.20px;height:4.00px;background:#c15c17;border-radius:2.0px;"></div>
<div class="b" style="left:902.00px;top:343.00px;width:345.60px;height:1.00px;background:#2f3137;"></div>
<div class="b" style="left:909.80px;top:353.00px;width:14.20px;height:4.00px;background:#73bf69;border-radius:2.0px;"></div>
<div class="b" style="left:902.00px;top:367.00px;width:345.60px;height:1.00px;background:#2f3137;"></div>
<div class="b" style="left:909.80px;top:377.00px;width:14.20px;height:4.00px;background:#ca95e5;border-radius:2.0px;"></div>
<div class="b" style="left:902.00px;top:390.00px;width:345.60px;height:1.00px;background:#2f3137;"></div>
<div class="b" style="left:909.80px;top:401.00px;width:14.20px;height:4.00px;background:#6d1f62;border-radius:2.0px;"></div>
<div class="b" style="left:902.00px;top:414.00px;width:345.60px;height:1.00px;background:#2f3137;"></div>
<div class="b" style="left:909.80px;top:425.00px;width:14.20px;height:4.00px;background:#b7dbab;border-radius:2.0px;"></div>
<div class="b" style="left:902.00px;top:438.00px;width:345.60px;height:1.00px;background:#2f3137;"></div>
<div class="b" style="left:909.80px;top:448.00px;width:14.20px;height:4.00px;background:#447ebc;border-radius:2.0px;"></div>
<div class="b" style="left:902.00px;top:462.00px;width:345.60px;height:1.00px;background:#2f3137;"></div>
<div class="b" style="left:909.80px;top:472.00px;width:14.20px;height:4.00px;background:#890f02;border-radius:2.0px;"></div>
<div class="b" style="left:902.00px;top:486.00px;width:345.60px;height:1.00px;background:#2f3137;"></div>
<div class="b" style="left:909.80px;top:496.00px;width:14.20px;height:4.00px;background:#8ab8ff;border-radius:2.0px;"></div>
<div class="b" style="left:1248.40px;top:296.00px;width:9.50px;height:208.00px;background:#2c2c2c;"></div>
<div class="b" style="left:1250.40px;top:307.80px;width:5.50px;height:88.80px;background:#9f9f9f;border-radius:2.8px;"></div>
<svg class="b" style="left:1248.40px;top:297.00px;" width="9.5" height="8" viewBox="0 0 9.5 8"><path d="M4.75 2.2L7.6 6H1.9z" fill="#a0a0a0" stroke="#a0a0a0" stroke-width=".8" stroke-linejoin="round"/></svg>
<svg class="b" style="left:1248.40px;top:494.50px;" width="9.5" height="8" viewBox="0 0 9.5 8"><path d="M4.75 6L7.6 2.2H1.9z" fill="#a0a0a0" stroke="#a0a0a0" stroke-width=".8" stroke-linejoin="round"/></svg>
<div class="b" style="left:1275.00px;top:255.00px;width:1253.00px;height:258.00px;background:#181b1f;border:1px solid #2f3137;border-radius:2.0px;"></div>
<div class="t" style="top:264.00px;font-size:14.56px;line-height:16px;color:#ccccdc;-webkit-text-stroke:.42px #ccccdc;left:1284.56px;letter-spacing:0.353px;">Top processes by System CPU cores used</div>
<svg class="b" style="left:2516.00px;top:501.00px;" width="11" height="11" viewBox="0 0 11 11"><path d="M10.6 1.4L1.2 10.8M10.6 6L5.8 10.8" stroke="#53555d" stroke-width="1.1" fill="none"/></svg>
<svg class="b" style="left:1275.00px;top:255.00px" width="1253" height="258" viewBox="1275 255 1253 258"><path d="M1320.25 313.50H2147.90M1320.25 355.50H2147.90M1320.25 398.50H2147.90M1320.25 440.50H2147.90M1320.25 483.50H2147.90M1357.50 304.00V487.00M1426.50 304.00V487.00M1495.50 304.00V487.00M1564.50 304.00V487.00M1633.50 304.00V487.00M1702.50 304.00V487.00M1771.50 304.00V487.00M1840.50 304.00V487.00M1909.50 304.00V487.00M1978.50 304.00V487.00M2047.50 304.00V487.00M2116.50 304.00V487.00" stroke="rgba(240,250,255,0.09)" stroke-width="1" fill="none"/><defs><clipPath id="cc1275"><path d="M1319.2 483.3L1319.2 393.7H1321.6L1322.7 395.0H1325.0L1326.2 397.1H1328.5L1329.6 395.0H1331.9L1333.1 392.9H1335.4L1336.5 397.1H1338.8L1340.0 394.2H1342.3L1343.4 393.3H1345.7L1346.9 384.4H1349.2L1350.3 386.9H1352.6L1353.8 384.4H1356.1L1357.2 386.9H1359.5L1360.7 383.1H1363.0L1364.1 377.6H1366.4L1367.6 386.1H1369.9L1371.0 384.4H1373.3L1374.5 389.1H1376.8L1377.9 389.1H1380.2L1381.4 385.7H1383.7L1384.8 387.8H1387.1L1388.3 387.8H1390.6L1391.7 387.8H1394.0L1395.2 385.7H1397.5L1398.6 390.3H1400.9L1402.1 388.6H1404.4L1405.5 388.6H1407.8L1409.0 379.7H1411.3L1412.4 388.2H1414.7L1415.9 388.2H1418.2L1419.3 389.5H1421.6L1422.8 384.4H1425.1L1426.2 389.1H1428.5L1429.7 382.7H1432.0L1433.1 380.1H1435.4L1436.6 370.0H1438.9L1440.0 390.8H1442.3L1443.5 386.5H1445.8L1446.9 390.8H1449.2L1450.4 384.4H1452.7L1453.8 389.5H1456.1L1457.3 388.2H1459.6L1460.7 386.5H1463.0L1464.2 386.5H1466.5L1467.6 386.5H1469.9L1471.1 381.8H1473.4L1474.5 389.5H1476.8L1478.0 389.5H1480.3L1481.4 390.8H1483.7L1484.9 389.5H1487.2L1488.3 394.2H1490.6L1491.8 386.5H1494.1L1495.2 390.3H1497.5L1498.7 380.6H1501.0L1502.1 382.7H1504.4L1505.6 382.7H1507.9L1509.0 389.9H1511.3L1512.5 394.2H1514.8L1515.9 386.1H1518.2L1519.4 389.9H1521.7L1522.8 386.5H1525.1L1526.3 393.3H1528.6L1529.7 383.5H1532.0L1533.2 388.2H1535.5L1536.6 381.4H1538.9L1540.1 390.3H1542.4L1543.5 386.5H1545.8L1547.0 391.2H1549.3L1550.4 387.4H1552.7L1553.9 392.0H1556.2L1557.3 383.5H1559.6L1560.8 386.9H1563.1L1564.2 388.2H1566.5L1567.7 382.7H1570.0L1571.1 372.9H1573.4L1574.6 323.7H1576.9L1578.0 393.3H1580.3L1581.5 390.8H1583.8L1584.9 389.1H1587.2L1588.4 396.3H1590.7L1591.8 393.3H1594.1L1595.3 396.3H1597.6L1598.8 392.9H1601.1L1602.2 382.3H1604.5L1605.7 384.4H1608.0L1609.1 391.2H1611.4L1612.6 384.4H1614.9L1616.0 392.5H1618.3L1619.5 380.6H1621.8L1622.9 392.5H1625.2L1626.4 384.0H1628.7L1629.8 389.1H1632.1L1633.3 389.1H1635.6L1636.7 386.9H1639.0L1640.2 376.8H1642.5L1643.6 379.3H1645.9L1647.1 386.9H1649.4L1650.5 392.5H1652.8L1654.0 385.7H1656.3L1657.4 385.7H1659.7L1660.9 387.8H1663.2L1664.3 394.2H1666.6L1667.8 389.9H1670.1L1671.2 387.4H1673.5L1674.7 384.4H1677.0L1678.1 393.3H1680.4L1681.6 386.5H1683.9L1685.0 392.0H1687.3L1688.5 384.4H1690.8L1691.9 393.3H1694.2L1695.4 382.3H1697.7L1698.8 390.3H1701.1L1702.3 386.9H1704.6L1705.7 386.1H1708.0L1709.2 380.6H1711.5L1712.6 389.1H1714.9L1716.1 384.4H1718.4L1719.5 398.0H1721.8L1723.0 390.8H1725.3L1726.4 395.0H1728.7L1729.9 389.1H1732.2L1733.3 395.9H1735.6L1736.8 388.2H1739.1L1740.2 388.2H1742.5L1743.7 384.4H1746.0L1747.1 391.2H1749.4L1750.6 386.5H1752.9L1754.0 382.7H1756.3L1757.5 386.5H1759.8L1760.9 390.3H1763.2L1764.4 384.4H1766.7L1767.8 398.0H1770.1L1771.3 392.5H1773.6L1774.7 397.1H1777.0L1778.2 381.8H1780.5L1781.6 393.7H1783.9L1785.1 389.9H1787.4L1788.5 395.0H1790.8L1792.0 393.3H1794.3L1795.4 395.9H1797.7L1798.9 385.7H1801.2L1802.3 395.0H1804.6L1805.8 384.4H1808.1L1809.2 389.9H1811.5L1812.7 386.5H1815.0L1816.1 391.2H1818.4L1819.6 385.7H1821.9L1823.0 391.2H1825.3L1826.5 383.5H1828.8L1829.9 395.0H1832.2L1833.4 384.4H1835.7L1836.8 386.9H1839.1L1840.3 384.8H1842.6L1843.7 386.9H1846.0L1847.2 372.1H1849.5L1850.6 338.5H1852.9L1854.1 376.8H1856.4L1857.5 389.5H1859.8L1861.0 385.7H1863.3L1864.4 390.3H1866.7L1867.9 386.5H1870.2L1871.4 390.3H1873.7L1874.8 384.0H1877.1L1878.3 370.8H1880.6L1881.7 386.1H1884.0L1885.2 392.5H1887.5L1888.6 389.1H1890.9L1892.1 387.8H1894.4L1895.5 382.7H1897.8L1899.0 382.7H1901.3L1902.4 386.1H1904.7L1905.9 390.3H1908.2L1909.3 384.8H1911.6L1912.8 382.7H1915.1L1916.2 379.7H1918.5L1919.7 389.1H1922.0L1923.1 392.0H1925.4L1926.6 395.0H1928.9L1930.0 345.3H1932.3L1933.5 395.0H1935.8L1936.9 386.5H1939.2L1940.4 395.0H1942.7L1943.8 395.0H1946.1L1947.3 392.9H1949.6L1950.7 391.2H1953.0L1954.2 393.3H1956.5L1957.6 390.8H1959.9L1961.1 393.3H1963.4L1964.5 393.3H1966.8L1968.0 397.1H1970.3L1971.4 390.8H1973.7L1974.9 386.1H1977.2L1978.3 387.8H1980.6L1981.8 385.2H1984.1L1985.2 379.7H1987.5L1988.7 384.0H1991.0L1992.1 393.3H1994.4L1995.6 395.9H1997.9L1999.0 391.6H2001.3L2002.5 390.8H2004.8L2005.9 395.0H2008.2L2009.4 390.8H2011.7L2012.8 395.0H2015.1L2016.3 386.1H2018.6L2019.7 391.2H2022.0L2023.2 391.2H2025.5L2026.6 398.0H2028.9L2030.1 393.3H2032.4L2033.5 388.6H2035.8L2037.0 392.9H2039.3L2040.4 392.9H2042.7L2043.9 398.0H2046.2L2047.3 395.0H2049.6L2050.8 389.9H2053.1L2054.2 383.1H2056.5L2057.7 386.9H2060.0L2061.1 395.0H2063.4L2064.6 395.9H2066.9L2068.0 393.3H2070.3L2071.5 394.6H2073.8L2074.9 394.6H2077.2L2078.4 395.9H2080.7L2081.8 394.6H2084.1L2085.3 392.0H2087.6L2088.7 394.6H2091.0L2092.2 395.9H2094.5L2095.6 393.7H2097.9L2099.1 392.9H2101.4L2102.5 383.1H2104.8L2106.0 395.9H2108.3L2109.4 400.1H2111.7L2112.9 390.8H2115.2L2116.3 399.2H2118.6L2119.8 386.5H2122.1L2123.2 382.3H2125.5L2126.7 379.7H2129.0L2130.1 395.4H2132.4L2133.6 395.4H2135.9L2137.0 399.2H2139.3L2140.5 388.6H2142.8L2143.9 395.9H2146.2L2147.4 393.7H2147.4V483.3Z" fill="#3a2620"/></clipPath></defs><path d="M1319.2 483.3L1319.2 393.7H1321.6L1322.7 395.0H1325.0L1326.2 397.1H1328.5L1329.6 395.0H1331.9L1333.1 392.9H1335.4L1336.5 397.1H1338.8L1340.0 394.2H1342.3L1343.4 393.3H1345.7L1346.9 384.4H1349.2L1350.3 386.9H1352.6L1353.8 384.4H1356.1L1357.2 386.9H1359.5L1360.7 383.1H1363.0L1364.1 377.6H1366.4L1367.6 386.1H1369.9L1371.0 384.4H1373.3L1374.5 389.1H1376.8L1377.9 389.1H1380.2L1381.4 385.7H1383.7L1384.8 387.8H1387.1L1388.3 387.8H1390.6L1391.7 387.8H1394.0L1395.2 385.7H1397.5L1398.6 390.3H1400.9L1402.1 388.6H1404.4L1405.5 388.6H1407.8L1409.0 379.7H1411.3L1412.4 388.2H1414.7L1415.9 388.2H1418.2L1419.3 389.5H1421.6L1422.8 384.4H1425.1L1426.2 389.1H1428.5L1429.7 382.7H1432.0L1433.1 380.1H1435.4L1436.6 370.0H1438.9L1440.0 390.8H1442.3L1443.5 386.5H1445.8L1446.9 390.8H1449.2L1450.4 384.4H1452.7L1453.8 389.5H1456.1L1457.3 388.2H1459.6L1460.7 386.5H1463.0L1464.2 386.5H1466.5L1467.6 386.5H1469.9L1471.1 381.8H1473.4L1474.5 389.5H1476.8L1478.0 389.5H1480.3L1481.4 390.8H1483.7L1484.9 389.5H1487.2L1488.3 394.2H1490.6L1491.8 386.5H1494.1L1495.2 390.3H1497.5L1498.7 380.6H1501.0L1502.1 382.7H1504.4L1505.6 382.7H1507.9L1509.0 389.9H1511.3L1512.5 394.2H1514.8L1515.9 386.1H1518.2L1519.4 389.9H1521.7L1522.8 386.5H1525.1L1526.3 393.3H1528.6L1529.7 383.5H1532.0L1533.2 388.2H1535.5L1536.6 381.4H1538.9L1540.1 390.3H1542.4L1543.5 386.5H1545.8L1547.0 391.2H1549.3L1550.4 387.4H1552.7L1553.9 392.0H1556.2L1557.3 383.5H1559.6L1560.8 386.9H1563.1L1564.2 388.2H1566.5L1567.7 382.7H1570.0L1571.1 372.9H1573.4L1574.6 323.7H1576.9L1578.0 393.3H1580.3L1581.5 390.8H1583.8L1584.9 389.1H1587.2L1588.4 396.3H1590.7L1591.8 393.3H1594.1L1595.3 396.3H1597.6L1598.8 392.9H1601.1L1602.2 382.3H1604.5L1605.7 384.4H1608.0L1609.1 391.2H1611.4L1612.6 384.4H1614.9L1616.0 392.5H1618.3L1619.5 380.6H1621.8L1622.9 392.5H1625.2L1626.4 384.0H1628.7L1629.8 389.1H1632.1L1633.3 389.1H1635.6L1636.7 386.9H1639.0L1640.2 376.8H1642.5L1643.6 379.3H1645.9L1647.1 386.9H1649.4L1650.5 392.5H1652.8L1654.0 385.7H1656.3L1657.4 385.7H1659.7L1660.9 387.8H1663.2L1664.3 394.2H1666.6L1667.8 389.9H1670.1L1671.2 387.4H1673.5L1674.7 384.4H1677.0L1678.1 393.3H1680.4L1681.6 386.5H1683.9L1685.0 392.0H1687.3L1688.5 384.4H1690.8L1691.9 393.3H1694.2L1695.4 382.3H1697.7L1698.8 390.3H1701.1L1702.3 386.9H1704.6L1705.7 386.1H1708.0L1709.2 380.6H1711.5L1712.6 389.1H1714.9L1716.1 384.4H1718.4L1719.5 398.0H1721.8L1723.0 390.8H1725.3L1726.4 395.0H1728.7L1729.9 389.1H1732.2L1733.3 395.9H1735.6L1736.8 388.2H1739.1L1740.2 388.2H1742.5L1743.7 384.4H1746.0L1747.1 391.2H1749.4L1750.6 386.5H1752.9L1754.0 382.7H1756.3L1757.5 386.5H1759.8L1760.9 390.3H1763.2L1764.4 384.4H1766.7L1767.8 398.0H1770.1L1771.3 392.5H1773.6L1774.7 397.1H1777.0L1778.2 381.8H1780.5L1781.6 393.7H1783.9L1785.1 389.9H1787.4L1788.5 395.0H1790.8L1792.0 393.3H1794.3L1795.4 395.9H1797.7L1798.9 385.7H1801.2L1802.3 395.0H1804.6L1805.8 384.4H1808.1L1809.2 389.9H1811.5L1812.7 386.5H1815.0L1816.1 391.2H1818.4L1819.6 385.7H1821.9L1823.0 391.2H1825.3L1826.5 383.5H1828.8L1829.9 395.0H1832.2L1833.4 384.4H1835.7L1836.8 386.9H1839.1L1840.3 384.8H1842.6L1843.7 386.9H1846.0L1847.2 372.1H1849.5L1850.6 338.5H1852.9L1854.1 376.8H1856.4L1857.5 389.5H1859.8L1861.0 385.7H1863.3L1864.4 390.3H1866.7L1867.9 386.5H1870.2L1871.4 390.3H1873.7L1874.8 384.0H1877.1L1878.3 370.8H1880.6L1881.7 386.1H1884.0L1885.2 392.5H1887.5L1888.6 389.1H1890.9L1892.1 387.8H1894.4L1895.5 382.7H1897.8L1899.0 382.7H1901.3L1902.4 386.1H1904.7L1905.9 390.3H1908.2L1909.3 384.8H1911.6L1912.8 382.7H1915.1L1916.2 379.7H1918.5L1919.7 389.1H1922.0L1923.1 392.0H1925.4L1926.6 395.0H1928.9L1930.0 345.3H1932.3L1933.5 395.0H1935.8L1936.9 386.5H1939.2L1940.4 395.0H1942.7L1943.8 395.0H1946.1L1947.3 392.9H1949.6L1950.7 391.2H1953.0L1954.2 393.3H1956.5L1957.6 390.8H1959.9L1961.1 393.3H1963.4L1964.5 393.3H1966.8L1968.0 397.1H1970.3L1971.4 390.8H1973.7L1974.9 386.1H1977.2L1978.3 387.8H1980.6L1981.8 385.2H1984.1L1985.2 379.7H1987.5L1988.7 384.0H1991.0L1992.1 393.3H1994.4L1995.6 395.9H1997.9L1999.0 391.6H2001.3L2002.5 390.8H2004.8L2005.9 395.0H2008.2L2009.4 390.8H2011.7L2012.8 395.0H2015.1L2016.3 386.1H2018.6L2019.7 391.2H2022.0L2023.2 391.2H2025.5L2026.6 398.0H2028.9L2030.1 393.3H2032.4L2033.5 388.6H2035.8L2037.0 392.9H2039.3L2040.4 392.9H2042.7L2043.9 398.0H2046.2L2047.3 395.0H2049.6L2050.8 389.9H2053.1L2054.2 383.1H2056.5L2057.7 386.9H2060.0L2061.1 395.0H2063.4L2064.6 395.9H2066.9L2068.0 393.3H2070.3L2071.5 394.6H2073.8L2074.9 394.6H2077.2L2078.4 395.9H2080.7L2081.8 394.6H2084.1L2085.3 392.0H2087.6L2088.7 394.6H2091.0L2092.2 395.9H2094.5L2095.6 393.7H2097.9L2099.1 392.9H2101.4L2102.5 383.1H2104.8L2106.0 395.9H2108.3L2109.4 400.1H2111.7L2112.9 390.8H2115.2L2116.3 399.2H2118.6L2119.8 386.5H2122.1L2123.2 382.3H2125.5L2126.7 379.7H2129.0L2130.1 395.4H2132.4L2133.6 395.4H2135.9L2137.0 399.2H2139.3L2140.5 388.6H2142.8L2143.9 395.9H2146.2L2147.4 393.7H2147.4V483.3Z" fill="#3a2620"/><path d="M1319.2 483.3L1319.2 424.9H1321.6L1322.7 425.4H1325.0L1326.2 429.8H1328.5L1329.6 426.0H1331.9L1333.1 423.0H1335.4L1336.5 430.7H1338.8L1340.0 424.5H1342.3L1343.4 426.0H1345.7L1346.9 424.5H1349.2L1350.3 430.7H1352.6L1353.8 424.9H1356.1L1357.2 424.9H1359.5L1360.7 430.7H1363.0L1364.1 424.5H1366.4L1367.6 424.9H1369.9L1371.0 429.8H1373.3L1374.5 425.4H1376.8L1377.9 424.1H1380.2L1381.4 429.8H1383.7L1384.8 424.5H1387.1L1388.3 424.5H1390.6L1391.7 430.7H1394.0L1395.2 426.0H1397.5L1398.6 424.5H1400.9L1402.1 430.7H1404.4L1405.5 424.9H1407.8L1409.0 425.4H1411.3L1412.4 424.5H1414.7L1415.9 429.8H1418.2L1419.3 424.5H1421.6L1422.8 423.0H1425.1L1426.2 424.1H1428.5L1429.7 430.7H1432.0L1433.1 424.5H1435.4L1436.6 424.1H1438.9L1440.0 425.4H1442.3L1443.5 430.7H1445.8L1446.9 424.1H1449.2L1450.4 426.0H1452.7L1453.8 424.5H1456.1L1457.3 429.8H1459.6L1460.7 424.9H1463.0L1464.2 424.1H1466.5L1467.6 430.2H1469.9L1471.1 424.9H1473.4L1474.5 424.5H1476.8L1478.0 424.9H1480.3L1481.4 430.2H1483.7L1484.9 423.0H1487.2L1488.3 425.4H1490.6L1491.8 430.7H1494.1L1495.2 424.5H1497.5L1498.7 424.9H1501.0L1502.1 430.2H1504.4L1505.6 424.1H1507.9L1509.0 424.9H1511.3L1512.5 424.9H1514.8L1515.9 430.7H1518.2L1519.4 424.5H1521.7L1522.8 424.9H1525.1L1526.3 430.2H1528.6L1529.7 424.9H1532.0L1533.2 424.9H1535.5L1536.6 429.8H1538.9L1540.1 423.0H1542.4L1543.5 424.5H1545.8L1547.0 430.2H1549.3L1550.4 424.1H1552.7L1553.9 424.9H1556.2L1557.3 424.5H1559.6L1560.8 429.8H1563.1L1564.2 426.0H1566.5L1567.7 423.0H1570.0L1571.1 426.0H1573.4L1574.6 430.2H1576.9L1578.0 424.1H1580.3L1581.5 426.0H1583.8L1584.9 426.0H1587.2L1588.4 424.1H1590.7L1591.8 430.2H1594.1L1595.3 424.5H1597.6L1598.8 424.1H1601.1L1602.2 423.0H1604.5L1605.7 424.9H1608.0L1609.1 429.8H1611.4L1612.6 424.1H1614.9L1616.0 424.9H1618.3L1619.5 426.0H1621.8L1622.9 430.2H1625.2L1626.4 424.5H1628.7L1629.8 426.0H1632.1L1633.3 430.7H1635.6L1636.7 423.0H1639.0L1640.2 424.9H1642.5L1643.6 429.8H1645.9L1647.1 424.9H1649.4L1650.5 424.9H1652.8L1654.0 430.2H1656.3L1657.4 425.4H1659.7L1660.9 424.9H1663.2L1664.3 429.8H1666.6L1667.8 425.4H1670.1L1671.2 423.0H1673.5L1674.7 424.9H1677.0L1678.1 429.8H1680.4L1681.6 424.1H1683.9L1685.0 424.9H1687.3L1688.5 424.9H1690.8L1691.9 430.2H1694.2L1695.4 425.4H1697.7L1698.8 426.0H1701.1L1702.3 430.7H1704.6L1705.7 424.1H1708.0L1709.2 425.4H1711.5L1712.6 430.2H1714.9L1716.1 425.4H1718.4L1719.5 424.9H1721.8L1723.0 424.9H1725.3L1726.4 430.7H1728.7L1729.9 424.5H1732.2L1733.3 424.9H1735.6L1736.8 424.5H1739.1L1740.2 430.2H1742.5L1743.7 424.1H1746.0L1747.1 423.0H1749.4L1750.6 429.8H1752.9L1754.0 424.1H1756.3L1757.5 424.1H1759.8L1760.9 426.0H1763.2L1764.4 424.9H1766.7L1767.8 429.8H1770.1L1771.3 424.9H1773.6L1774.7 424.9H1777.0L1778.2 424.9H1780.5L1781.6 430.7H1783.9L1785.1 424.1H1787.4L1788.5 424.9H1790.8L1792.0 426.0H1794.3L1795.4 430.7H1797.7L1798.9 424.9H1801.2L1802.3 425.4H1804.6L1805.8 430.2H1808.1L1809.2 426.0H1811.5L1812.7 426.0H1815.0L1816.1 426.0H1818.4L1819.6 430.7H1821.9L1823.0 426.0H1825.3L1826.5 424.9H1828.8L1829.9 424.5H1832.2L1833.4 430.7H1835.7L1836.8 424.5H1839.1L1840.3 424.9H1842.6L1843.7 429.8H1846.0L1847.2 424.9H1849.5L1850.6 424.5H1852.9L1854.1 424.9H1856.4L1857.5 430.7H1859.8L1861.0 423.0H1863.3L1864.4 424.9H1866.7L1867.9 430.2H1870.2L1871.4 424.9H1873.7L1874.8 426.0H1877.1L1878.3 425.4H1880.6L1881.7 429.8H1884.0L1885.2 424.1H1887.5L1888.6 424.9H1890.9L1892.1 424.9H1894.4L1895.5 429.8H1897.8L1899.0 424.5H1901.3L1902.4 426.0H1904.7L1905.9 429.8H1908.2L1909.3 425.4H1911.6L1912.8 424.1H1915.1L1916.2 424.5H1918.5L1919.7 429.8H1922.0L1923.1 424.1H1925.4L1926.6 423.0H1928.9L1930.0 426.0H1932.3L1933.5 430.2H1935.8L1936.9 424.9H1939.2L1940.4 425.4H1942.7L1943.8 424.9H1946.1L1947.3 430.7H1949.6L1950.7 424.5H1953.0L1954.2 423.0H1956.5L1957.6 424.5H1959.9L1961.1 429.8H1963.4L1964.5 424.5H1966.8L1968.0 423.0H1970.3L1971.4 430.7H1973.7L1974.9 423.0H1977.2L1978.3 424.9H1980.6L1981.8 430.7H1984.1L1985.2 424.5H1987.5L1988.7 424.9H1991.0L1992.1 429.8H1994.4L1995.6 426.0H1997.9L1999.0 423.0H2001.3L2002.5 430.2H2004.8L2005.9 425.4H2008.2L2009.4 424.1H2011.7L2012.8 424.5H2015.1L2016.3 430.2H2018.6L2019.7 424.9H2022.0L2023.2 424.9H2025.5L2026.6 426.0H2028.9L2030.1 425.4H2032.4L2033.5 430.7H2035.8L2037.0 425.4H2039.3L2040.4 424.9H2042.7L2043.9 425.4H2046.2L2047.3 429.8H2049.6L2050.8 423.0H2053.1L2054.2 426.0H2056.5L2057.7 424.9H2060.0L2061.1 430.2H2063.4L2064.6 426.0H2066.9L2068.0 423.0H2070.3L2071.5 424.1H2073.8L2074.9 426.0H2077.2L2078.4 429.8H2080.7L2081.8 424.9H2084.1L2085.3 425.4H2087.6L2088.7 429.8H2091.0L2092.2 426.0H2094.5L2095.6 423.0H2097.9L2099.1 424.1H2101.4L2102.5 430.2H2104.8L2106.0 424.1H2108.3L2109.4 426.0H2111.7L2112.9 424.1H2115.2L2116.3 430.7H2118.6L2119.8 426.0H2122.1L2123.2 425.4H2125.5L2126.7 430.2H2129.0L2130.1 425.4H2132.4L2133.6 424.5H2135.9L2137.0 423.0H2139.3L2140.5 424.5H2142.8L2143.9 429.8H2146.2L2147.4 425.4H2147.4V483.3Z" fill="#453f2b"/><path d="M1319.2 483.3L1319.2 460.0H1321.6L1322.7 461.0H1325.0L1326.2 460.0H1328.5L1329.6 460.0H1331.9L1333.1 459.5H1335.4L1336.5 461.0H1338.8L1340.0 461.0H1342.3L1343.4 459.5H1345.7L1346.9 459.5H1349.2L1350.3 459.5H1352.6L1353.8 459.5H1356.1L1357.2 459.5H1359.5L1360.7 459.1H1363.0L1364.1 459.1H1366.4L1367.6 458.7H1369.9L1371.0 461.0H1373.3L1374.5 461.0H1376.8L1377.9 458.3H1380.2L1381.4 458.3H1383.7L1384.8 458.3H1387.1L1388.3 458.7H1390.6L1391.7 458.7H1394.0L1395.2 458.7H1397.5L1398.6 460.0H1400.9L1402.1 460.0H1404.4L1405.5 455.7H1407.8L1409.0 455.7H1411.3L1412.4 455.7H1414.7L1415.9 455.7H1418.2L1419.3 461.0H1421.6L1422.8 461.0H1425.1L1426.2 460.0H1428.5L1429.7 460.0H1432.0L1433.1 460.0H1435.4L1436.6 461.0H1438.9L1440.0 460.0H1442.3L1443.5 458.3H1445.8L1446.9 458.3H1449.2L1450.4 458.3H1452.7L1453.8 460.6H1456.1L1457.3 460.6H1459.6L1460.7 460.6H1463.0L1464.2 461.0H1466.5L1467.6 461.0H1469.9L1471.1 458.3H1473.4L1474.5 461.0H1476.8L1478.0 459.5H1480.3L1481.4 459.5H1483.7L1484.9 461.0H1487.2L1488.3 458.3H1490.6L1491.8 458.3H1494.1L1495.2 458.3H1497.5L1498.7 461.0H1501.0L1502.1 458.3H1504.4L1505.6 458.3H1507.9L1509.0 459.5H1511.3L1512.5 459.5H1514.8L1515.9 458.3H1518.2L1519.4 458.3H1521.7L1522.8 458.3H1525.1L1526.3 458.3H1528.6L1529.7 458.3H1532.0L1533.2 458.3H1535.5L1536.6 459.5H1538.9L1540.1 457.0H1542.4L1543.5 457.0H1545.8L1547.0 457.0H1549.3L1550.4 459.5H1552.7L1553.9 459.5H1556.2L1557.3 459.5H1559.6L1560.8 459.5H1563.1L1564.2 460.0H1566.5L1567.7 460.0H1570.0L1571.1 460.6H1573.4L1574.6 460.6H1576.9L1578.0 458.3H1580.3L1581.5 458.3H1583.8L1584.9 460.6H1587.2L1588.4 458.7H1590.7L1591.8 459.5H1594.1L1595.3 459.5H1597.6L1598.8 460.6H1601.1L1602.2 459.1H1604.5L1605.7 459.5H1608.0L1609.1 458.3H1611.4L1612.6 460.6H1614.9L1616.0 460.6H1618.3L1619.5 458.3H1621.8L1622.9 459.5H1625.2L1626.4 458.7H1628.7L1629.8 458.7H1632.1L1633.3 458.7H1635.6L1636.7 458.7H1639.0L1640.2 458.7H1642.5L1643.6 458.7H1645.9L1647.1 459.1H1649.4L1650.5 459.1H1652.8L1654.0 460.6H1656.3L1657.4 460.6H1659.7L1660.9 461.0H1663.2L1664.3 456.6H1666.6L1667.8 456.6H1670.1L1671.2 456.6H1673.5L1674.7 461.0H1677.0L1678.1 461.0H1680.4L1681.6 459.1H1683.9L1685.0 459.1H1687.3L1688.5 459.1H1690.8L1691.9 459.5H1694.2L1695.4 459.5H1697.7L1698.8 459.5H1701.1L1702.3 460.6H1704.6L1705.7 459.5H1708.0L1709.2 460.6H1711.5L1712.6 460.6H1714.9L1716.1 459.5H1718.4L1719.5 460.0H1721.8L1723.0 460.0H1725.3L1726.4 460.0H1728.7L1729.9 460.0H1732.2L1733.3 459.5H1735.6L1736.8 459.5H1739.1L1740.2 460.0H1742.5L1743.7 460.0H1746.0L1747.1 460.0H1749.4L1750.6 458.3H1752.9L1754.0 458.3H1756.3L1757.5 460.6H1759.8L1760.9 460.6H1763.2L1764.4 461.0H1766.7L1767.8 457.0H1770.1L1771.3 457.0H1773.6L1774.7 460.6H1777.0L1778.2 460.6H1780.5L1781.6 460.6H1783.9L1785.1 460.6H1787.4L1788.5 460.6H1790.8L1792.0 459.5H1794.3L1795.4 454.0H1797.7L1798.9 454.0H1801.2L1802.3 459.1H1804.6L1805.8 459.1H1808.1L1809.2 459.1H1811.5L1812.7 458.7H1815.0L1816.1 458.7H1818.4L1819.6 460.0H1821.9L1823.0 459.5H1825.3L1826.5 460.0H1828.8L1829.9 460.0H1832.2L1833.4 461.0H1835.7L1836.8 459.5H1839.1L1840.3 459.5H1842.6L1843.7 459.5H1846.0L1847.2 459.5H1849.5L1850.6 459.5H1852.9L1854.1 459.5H1856.4L1857.5 459.5H1859.8L1861.0 458.3H1863.3L1864.4 458.3H1866.7L1867.9 458.3H1870.2L1871.4 460.0H1873.7L1874.8 460.0H1877.1L1878.3 459.1H1880.6L1881.7 459.5H1884.0L1885.2 461.0H1887.5L1888.6 459.5H1890.9L1892.1 459.5H1894.4L1895.5 459.5H1897.8L1899.0 458.3H1901.3L1902.4 458.3H1904.7L1905.9 458.7H1908.2L1909.3 458.7H1911.6L1912.8 458.7H1915.1L1916.2 458.7H1918.5L1919.7 458.7H1922.0L1923.1 459.5H1925.4L1926.6 459.5H1928.9L1930.0 459.5H1932.3L1933.5 459.5H1935.8L1936.9 458.7H1939.2L1940.4 458.7H1942.7L1943.8 461.0H1946.1L1947.3 461.0H1949.6L1950.7 459.5H1953.0L1954.2 456.1H1956.5L1957.6 456.1H1959.9L1961.1 460.6H1963.4L1964.5 460.6H1966.8L1968.0 459.5H1970.3L1971.4 459.5H1973.7L1974.9 459.5H1977.2L1978.3 459.5H1980.6L1981.8 459.5H1984.1L1985.2 461.0H1987.5L1988.7 461.0H1991.0L1992.1 460.0H1994.4L1995.6 459.5H1997.9L1999.0 459.5H2001.3L2002.5 461.0H2004.8L2005.9 461.0H2008.2L2009.4 459.1H2011.7L2012.8 459.1H2015.1L2016.3 459.1H2018.6L2019.7 461.0H2022.0L2023.2 457.0H2025.5L2026.6 457.0H2028.9L2030.1 457.0H2032.4L2033.5 460.0H2035.8L2037.0 459.1H2039.3L2040.4 459.1H2042.7L2043.9 460.6H2046.2L2047.3 460.6H2049.6L2050.8 459.5H2053.1L2054.2 459.5H2056.5L2057.7 459.5H2060.0L2061.1 459.5H2063.4L2064.6 461.0H2066.9L2068.0 459.5H2070.3L2071.5 460.0H2073.8L2074.9 460.0H2077.2L2078.4 461.0H2080.7L2081.8 461.0H2084.1L2085.3 461.0H2087.6L2088.7 461.0H2091.0L2092.2 459.5H2094.5L2095.6 460.6H2097.9L2099.1 460.6H2101.4L2102.5 460.6H2104.8L2106.0 460.0H2108.3L2109.4 460.0H2111.7L2112.9 460.0H2115.2L2116.3 458.7H2118.6L2119.8 458.7H2122.1L2123.2 455.7H2125.5L2126.7 455.7H2129.0L2130.1 455.7H2132.4L2133.6 459.5H2135.9L2137.0 460.0H2139.3L2140.5 458.7H2142.8L2143.9 458.7H2146.2L2147.4 458.7H2147.4V483.3Z" fill="#5c4a45"/><path d="M1319.2 483.3L1319.2 476.9H1321.6L1322.7 476.9H1325.0L1326.2 476.9H1328.5L1329.6 476.9H1331.9L1333.1 476.9H1335.4L1336.5 476.9H1338.8L1340.0 476.9H1342.3L1343.4 476.9H1345.7L1346.9 476.0H1349.2L1350.3 476.0H1352.6L1353.8 476.0H1356.1L1357.2 476.0H1359.5L1360.7 476.9H1363.0L1364.1 476.9H1366.4L1367.6 476.9H1369.9L1371.0 476.9H1373.3L1374.5 476.9H1376.8L1377.9 476.9H1380.2L1381.4 476.9H1383.7L1384.8 476.9H1387.1L1388.3 476.0H1390.6L1391.7 476.0H1394.0L1395.2 476.0H1397.5L1398.6 476.0H1400.9L1402.1 476.0H1404.4L1405.5 476.0H1407.8L1409.0 476.0H1411.3L1412.4 476.0H1414.7L1415.9 476.0H1418.2L1419.3 476.0H1421.6L1422.8 476.0H1425.1L1426.2 476.0H1428.5L1429.7 477.2H1432.0L1433.1 477.2H1435.4L1436.6 477.2H1438.9L1440.0 477.2H1442.3L1443.5 476.0H1445.8L1446.9 476.0H1449.2L1450.4 476.0H1452.7L1453.8 476.0H1456.1L1457.3 476.6H1459.6L1460.7 476.6H1463.0L1464.2 476.6H1466.5L1467.6 476.6H1469.9L1471.1 476.9H1473.4L1474.5 476.9H1476.8L1478.0 476.9H1480.3L1481.4 476.9H1483.7L1484.9 476.0H1487.2L1488.3 476.0H1490.6L1491.8 476.0H1494.1L1495.2 476.0H1497.5L1498.7 476.6H1501.0L1502.1 476.6H1504.4L1505.6 476.6H1507.9L1509.0 476.6H1511.3L1512.5 476.6H1514.8L1515.9 476.6H1518.2L1519.4 476.6H1521.7L1522.8 476.6H1525.1L1526.3 476.6H1528.6L1529.7 476.6H1532.0L1533.2 476.6H1535.5L1536.6 476.6H1538.9L1540.1 476.6H1542.4L1543.5 476.6H1545.8L1547.0 476.6H1549.3L1550.4 476.6H1552.7L1553.9 476.9H1556.2L1557.3 476.9H1559.6L1560.8 476.9H1563.1L1564.2 476.9H1566.5L1567.7 477.2H1570.0L1571.1 477.2H1573.4L1574.6 477.2H1576.9L1578.0 477.2H1580.3L1581.5 477.2H1583.8L1584.9 477.2H1587.2L1588.4 477.2H1590.7L1591.8 477.2H1594.1L1595.3 477.2H1597.6L1598.8 477.2H1601.1L1602.2 477.2H1604.5L1605.7 477.2H1608.0L1609.1 476.9H1611.4L1612.6 476.9H1614.9L1616.0 476.9H1618.3L1619.5 476.9H1621.8L1622.9 476.6H1625.2L1626.4 476.6H1628.7L1629.8 476.6H1632.1L1633.3 476.6H1635.6L1636.7 476.9H1639.0L1640.2 476.9H1642.5L1643.6 476.9H1645.9L1647.1 476.9H1649.4L1650.5 477.2H1652.8L1654.0 477.2H1656.3L1657.4 477.2H1659.7L1660.9 477.2H1663.2L1664.3 476.9H1666.6L1667.8 476.9H1670.1L1671.2 476.9H1673.5L1674.7 476.9H1677.0L1678.1 476.0H1680.4L1681.6 476.0H1683.9L1685.0 476.0H1687.3L1688.5 476.0H1690.8L1691.9 476.9H1694.2L1695.4 476.9H1697.7L1698.8 476.9H1701.1L1702.3 476.9H1704.6L1705.7 476.9H1708.0L1709.2 476.9H1711.5L1712.6 476.9H1714.9L1716.1 476.9H1718.4L1719.5 477.2H1721.8L1723.0 477.2H1725.3L1726.4 477.2H1728.7L1729.9 477.2H1732.2L1733.3 476.6H1735.6L1736.8 476.6H1739.1L1740.2 476.6H1742.5L1743.7 476.6H1746.0L1747.1 477.2H1749.4L1750.6 477.2H1752.9L1754.0 477.2H1756.3L1757.5 477.2H1759.8L1760.9 476.6H1763.2L1764.4 476.6H1766.7L1767.8 476.6H1770.1L1771.3 476.6H1773.6L1774.7 476.9H1777.0L1778.2 476.9H1780.5L1781.6 476.9H1783.9L1785.1 476.9H1787.4L1788.5 476.6H1790.8L1792.0 476.6H1794.3L1795.4 476.6H1797.7L1798.9 476.6H1801.2L1802.3 476.9H1804.6L1805.8 476.9H1808.1L1809.2 476.9H1811.5L1812.7 476.9H1815.0L1816.1 476.9H1818.4L1819.6 476.9H1821.9L1823.0 476.9H1825.3L1826.5 476.9H1828.8L1829.9 476.9H1832.2L1833.4 476.9H1835.7L1836.8 476.9H1839.1L1840.3 476.9H1842.6L1843.7 477.2H1846.0L1847.2 477.2H1849.5L1850.6 477.2H1852.9L1854.1 477.2H1856.4L1857.5 476.9H1859.8L1861.0 476.9H1863.3L1864.4 476.9H1866.7L1867.9 476.9H1870.2L1871.4 476.0H1873.7L1874.8 476.0H1877.1L1878.3 476.0H1880.6L1881.7 476.0H1884.0L1885.2 477.2H1887.5L1888.6 477.2H1890.9L1892.1 477.2H1894.4L1895.5 477.2H1897.8L1899.0 476.6H1901.3L1902.4 476.6H1904.7L1905.9 476.6H1908.2L1909.3 476.6H1911.6L1912.8 476.9H1915.1L1916.2 476.9H1918.5L1919.7 476.9H1922.0L1923.1 476.9H1925.4L1926.6 476.9H1928.9L1930.0 476.9H1932.3L1933.5 476.9H1935.8L1936.9 476.9H1939.2L1940.4 477.2H1942.7L1943.8 477.2H1946.1L1947.3 477.2H1949.6L1950.7 477.2H1953.0L1954.2 476.6H1956.5L1957.6 476.6H1959.9L1961.1 476.6H1963.4L1964.5 476.6H1966.8L1968.0 476.9H1970.3L1971.4 476.9H1973.7L1974.9 476.9H1977.2L1978.3 476.9H1980.6L1981.8 477.2H1984.1L1985.2 477.2H1987.5L1988.7 477.2H1991.0L1992.1 477.2H1994.4L1995.6 476.6H1997.9L1999.0 476.6H2001.3L2002.5 476.6H2004.8L2005.9 476.6H2008.2L2009.4 476.6H2011.7L2012.8 476.6H2015.1L2016.3 476.6H2018.6L2019.7 476.6H2022.0L2023.2 476.9H2025.5L2026.6 476.9H2028.9L2030.1 476.9H2032.4L2033.5 476.9H2035.8L2037.0 476.9H2039.3L2040.4 476.9H2042.7L2043.9 476.9H2046.2L2047.3 476.9H2049.6L2050.8 476.0H2053.1L2054.2 476.0H2056.5L2057.7 476.0H2060.0L2061.1 476.0H2063.4L2064.6 477.2H2066.9L2068.0 477.2H2070.3L2071.5 477.2H2073.8L2074.9 477.2H2077.2L2078.4 476.0H2080.7L2081.8 476.0H2084.1L2085.3 476.0H2087.6L2088.7 476.0H2091.0L2092.2 476.9H2094.5L2095.6 476.9H2097.9L2099.1 476.9H2101.4L2102.5 476.9H2104.8L2106.0 476.9H2108.3L2109.4 476.9H2111.7L2112.9 476.9H2115.2L2116.3 476.9H2118.6L2119.8 476.6H2122.1L2123.2 476.6H2125.5L2126.7 476.6H2129.0L2130.1 476.6H2132.4L2133.6 476.0H2135.9L2137.0 476.0H2139.3L2140.5 476.0H2142.8L2143.9 476.0H2146.2L2147.4 476.9H2147.4V483.3Z" fill="#5e5560"/><g clip-path="url(#cc1275)"><path d="M1320.25 313.50H2147.90M1320.25 355.50H2147.90M1320.25 398.50H2147.90M1320.25 440.50H2147.90M1320.25 483.50H2147.90M1357.50 304.00V487.00M1426.50 304.00V487.00M1495.50 304.00V487.00M1564.50 304.00V487.00M1633.50 304.00V487.00M1702.50 304.00V487.00M1771.50 304.00V487.00M1840.50 304.00V487.00M1909.50 304.00V487.00M1978.50 304.00V487.00M2047.50 304.00V487.00M2116.50 304.00V487.00" stroke="rgba(240,250,255,0.07)" stroke-width="1" fill="none"/></g><path d="M1319.2 393.7L1319.2 393.7H1321.6L1322.7 395.0H1325.0L1326.2 397.1H1328.5L1329.6 395.0H1331.9L1333.1 392.9H1335.4L1336.5 397.1H1338.8L1340.0 394.2H1342.3L1343.4 393.3H1345.7L1346.9 384.4H1349.2L1350.3 386.9H1352.6L1353.8 384.4H1356.1L1357.2 386.9H1359.5L1360.7 383.1H1363.0L1364.1 377.6H1366.4L1367.6 386.1H1369.9L1371.0 384.4H1373.3L1374.5 389.1H1376.8L1377.9 389.1H1380.2L1381.4 385.7H1383.7L1384.8 387.8H1387.1L1388.3 387.8H1390.6L1391.7 387.8H1394.0L1395.2 385.7H1397.5L1398.6 390.3H1400.9L1402.1 388.6H1404.4L1405.5 388.6H1407.8L1409.0 379.7H1411.3L1412.4 388.2H1414.7L1415.9 388.2H1418.2L1419.3 389.5H1421.6L1422.8 384.4H1425.1L1426.2 389.1H1428.5L1429.7 382.7H1432.0L1433.1 380.1H1435.4L1436.6 370.0H1438.9L1440.0 390.8H1442.3L1443.5 386.5H1445.8L1446.9 390.8H1449.2L1450.4 384.4H1452.7L1453.8 389.5H1456.1L1457.3 388.2H1459.6L1460.7 386.5H1463.0L1464.2 386.5H1466.5L1467.6 386.5H1469.9L1471.1 381.8H1473.4L1474.5 389.5H1476.8L1478.0 389.5H1480.3L1481.4 390.8H1483.7L1484.9 389.5H1487.2L1488.3 394.2H1490.6L1491.8 386.5H1494.1L1495.2 390.3H1497.5L1498.7 380.6H1501.0L1502.1 382.7H1504.4L1505.6 382.7H1507.9L1509.0 389.9H1511.3L1512.5 394.2H1514.8L1515.9 386.1H1518.2L1519.4 389.9H1521.7L1522.8 386.5H1525.1L1526.3 393.3H1528.6L1529.7 383.5H1532.0L1533.2 388.2H1535.5L1536.6 381.4H1538.9L1540.1 390.3H1542.4L1543.5 386.5H1545.8L1547.0 391.2H1549.3L1550.4 387.4H1552.7L1553.9 392.0H1556.2L1557.3 383.5H1559.6L1560.8 386.9H1563.1L1564.2 388.2H1566.5L1567.7 382.7H1570.0L1571.1 372.9H1573.4L1574.6 323.7H1576.9L1578.0 393.3H1580.3L1581.5 390.8H1583.8L1584.9 389.1H1587.2L1588.4 396.3H1590.7L1591.8 393.3H1594.1L1595.3 396.3H1597.6L1598.8 392.9H1601.1L1602.2 382.3H1604.5L1605.7 384.4H1608.0L1609.1 391.2H1611.4L1612.6 384.4H1614.9L1616.0 392.5H1618.3L1619.5 380.6H1621.8L1622.9 392.5H1625.2L1626.4 384.0H1628.7L1629.8 389.1H1632.1L1633.3 389.1H1635.6L1636.7 386.9H1639.0L1640.2 376.8H1642.5L1643.6 379.3H1645.9L1647.1 386.9H1649.4L1650.5 392.5H1652.8L1654.0 385.7H1656.3L1657.4 385.7H1659.7L1660.9 387.8H1663.2L1664.3 394.2H1666.6L1667.8 389.9H1670.1L1671.2 387.4H1673.5L1674.7 384.4H1677.0L1678.1 393.3H1680.4L1681.6 386.5H1683.9L1685.0 392.0H1687.3L1688.5 384.4H1690.8L1691.9 393.3H1694.2L1695.4 382.3H1697.7L1698.8 390.3H1701.1L1702.3 386.9H1704.6L1705.7 386.1H1708.0L1709.2 380.6H1711.5L1712.6 389.1H1714.9L1716.1 384.4H1718.4L1719.5 398.0H1721.8L1723.0 390.8H1725.3L1726.4 395.0H1728.7L1729.9 389.1H1732.2L1733.3 395.9H1735.6L1736.8 388.2H1739.1L1740.2 388.2H1742.5L1743.7 384.4H1746.0L1747.1 391.2H1749.4L1750.6 386.5H1752.9L1754.0 382.7H1756.3L1757.5 386.5H1759.8L1760.9 390.3H1763.2L1764.4 384.4H1766.7L1767.8 398.0H1770.1L1771.3 392.5H1773.6L1774.7 397.1H1777.0L1778.2 381.8H1780.5L1781.6 393.7H1783.9L1785.1 389.9H1787.4L1788.5 395.0H1790.8L1792.0 393.3H1794.3L1795.4 395.9H1797.7L1798.9 385.7H1801.2L1802.3 395.0H1804.6L1805.8 384.4H1808.1L1809.2 389.9H1811.5L1812.7 386.5H1815.0L1816.1 391.2H1818.4L1819.6 385.7H1821.9L1823.0 391.2H1825.3L1826.5 383.5H1828.8L1829.9 395.0H1832.2L1833.4 384.4H1835.7L1836.8 386.9H1839.1L1840.3 384.8H1842.6L1843.7 386.9H1846.0L1847.2 372.1H1849.5L1850.6 338.5H1852.9L1854.1 376.8H1856.4L1857.5 389.5H1859.8L1861.0 385.7H1863.3L1864.4 390.3H1866.7L1867.9 386.5H1870.2L1871.4 390.3H1873.7L1874.8 384.0H1877.1L1878.3 370.8H1880.6L1881.7 386.1H1884.0L1885.2 392.5H1887.5L1888.6 389.1H1890.9L1892.1 387.8H1894.4L1895.5 382.7H1897.8L1899.0 382.7H1901.3L1902.4 386.1H1904.7L1905.9 390.3H1908.2L1909.3 384.8H1911.6L1912.8 382.7H1915.1L1916.2 379.7H1918.5L1919.7 389.1H1922.0L1923.1 392.0H1925.4L1926.6 395.0H1928.9L1930.0 345.3H1932.3L1933.5 395.0H1935.8L1936.9 386.5H1939.2L1940.4 395.0H1942.7L1943.8 395.0H1946.1L1947.3 392.9H1949.6L1950.7 391.2H1953.0L1954.2 393.3H1956.5L1957.6 390.8H1959.9L1961.1 393.3H1963.4L1964.5 393.3H1966.8L1968.0 397.1H1970.3L1971.4 390.8H1973.7L1974.9 386.1H1977.2L1978.3 387.8H1980.6L1981.8 385.2H1984.1L1985.2 379.7H1987.5L1988.7 384.0H1991.0L1992.1 393.3H1994.4L1995.6 395.9H1997.9L1999.0 391.6H2001.3L2002.5 390.8H2004.8L2005.9 395.0H2008.2L2009.4 390.8H2011.7L2012.8 395.0H2015.1L2016.3 386.1H2018.6L2019.7 391.2H2022.0L2023.2 391.2H2025.5L2026.6 398.0H2028.9L2030.1 393.3H2032.4L2033.5 388.6H2035.8L2037.0 392.9H2039.3L2040.4 392.9H2042.7L2043.9 398.0H2046.2L2047.3 395.0H2049.6L2050.8 389.9H2053.1L2054.2 383.1H2056.5L2057.7 386.9H2060.0L2061.1 395.0H2063.4L2064.6 395.9H2066.9L2068.0 393.3H2070.3L2071.5 394.6H2073.8L2074.9 394.6H2077.2L2078.4 395.9H2080.7L2081.8 394.6H2084.1L2085.3 392.0H2087.6L2088.7 394.6H2091.0L2092.2 395.9H2094.5L2095.6 393.7H2097.9L2099.1 392.9H2101.4L2102.5 383.1H2104.8L2106.0 395.9H2108.3L2109.4 400.1H2111.7L2112.9 390.8H2115.2L2116.3 399.2H2118.6L2119.8 386.5H2122.1L2123.2 382.3H2125.5L2126.7 379.7H2129.0L2130.1 395.4H2132.4L2133.6 395.4H2135.9L2137.0 399.2H2139.3L2140.5 388.6H2142.8L2143.9 395.9H2146.2L2147.4 393.7H2147.4" fill="none" stroke="#c8641a" stroke-width="1.9" stroke-linejoin="round"/><path d="M1319.2 393.7H1321.6M1322.7 395.0H1325.0M1326.2 397.1H1328.5M1329.6 395.0H1331.9M1333.1 392.9H1335.4M1336.5 397.1H1338.8M1340.0 394.2H1342.3M1343.4 393.3H1345.7M1346.9 384.4H1349.2M1350.3 386.9H1352.6M1353.8 384.4H1356.1M1357.2 386.9H1359.5M1360.7 383.1H1363.0M1364.1 377.6H1366.4M1367.6 386.1H1369.9M1371.0 384.4H1373.3M1374.5 389.1H1376.8M1377.9 389.1H1380.2M1381.4 385.7H1383.7M1384.8 387.8H1387.1M1388.3 387.8H1390.6M1391.7 387.8H1394.0M1395.2 385.7H1397.5M1398.6 390.3H1400.9M1402.1 388.6H1404.4M1405.5 388.6H1407.8M1409.0 379.7H1411.3M1412.4 388.2H1414.7M1415.9 388.2H1418.2M1419.3 389.5H1421.6M1422.8 384.4H1425.1M1426.2 389.1H1428.5M1429.7 382.7H1432.0M1433.1 380.1H1435.4M1436.6 370.0H1438.9M1440.0 390.8H1442.3M1443.5 386.5H1445.8M1446.9 390.8H1449.2M1450.4 384.4H1452.7M1453.8 389.5H1456.1M1457.3 388.2H1459.6M1460.7 386.5H1463.0M1464.2 386.5H1466.5M1467.6 386.5H1469.9M1471.1 381.8H1473.4M1474.5 389.5H1476.8M1478.0 389.5H1480.3M1481.4 390.8H1483.7M1484.9 389.5H1487.2M1488.3 394.2H1490.6M1491.8 386.5H1494.1M1495.2 390.3H1497.5M1498.7 380.6H1501.0M1502.1 382.7H1504.4M1505.6 382.7H1507.9M1509.0 389.9H1511.3M1512.5 394.2H1514.8M1515.9 386.1H1518.2M1519.4 389.9H1521.7M1522.8 386.5H1525.1M1526.3 393.3H1528.6M1529.7 383.5H1532.0M1533.2 388.2H1535.5M1536.6 381.4H1538.9M1540.1 390.3H1542.4M1543.5 386.5H1545.8M1547.0 391.2H1549.3M1550.4 387.4H1552.7M1553.9 392.0H1556.2M1557.3 383.5H1559.6M1560.8 386.9H1563.1M1564.2 388.2H1566.5M1567.7 382.7H1570.0M1571.1 372.9H1573.4M1574.6 323.7H1576.9M1578.0 393.3H1580.3M1581.5 390.8H1583.8M1584.9 389.1H1587.2M1588.4 396.3H1590.7M1591.8 393.3H1594.1M1595.3 396.3H1597.6M1598.8 392.9H1601.1M1602.2 382.3H1604.5M1605.7 384.4H1608.0M1609.1 391.2H1611.4M1612.6 384.4H1614.9M1616.0 392.5H1618.3M1619.5 380.6H1621.8M1622.9 392.5H1625.2M1626.4 384.0H1628.7M1629.8 389.1H1632.1M1633.3 389.1H1635.6M1636.7 386.9H1639.0M1640.2 376.8H1642.5M1643.6 379.3H1645.9M1647.1 386.9H1649.4M1650.5 392.5H1652.8M1654.0 385.7H1656.3M1657.4 385.7H1659.7M1660.9 387.8H1663.2M1664.3 394.2H1666.6M1667.8 389.9H1670.1M1671.2 387.4H1673.5M1674.7 384.4H1677.0M1678.1 393.3H1680.4M1681.6 386.5H1683.9M1685.0 392.0H1687.3M1688.5 384.4H1690.8M1691.9 393.3H1694.2M1695.4 382.3H1697.7M1698.8 390.3H1701.1M1702.3 386.9H1704.6M1705.7 386.1H1708.0M1709.2 380.6H1711.5M1712.6 389.1H1714.9M1716.1 384.4H1718.4M1719.5 398.0H1721.8M1723.0 390.8H1725.3M1726.4 395.0H1728.7M1729.9 389.1H1732.2M1733.3 395.9H1735.6M1736.8 388.2H1739.1M1740.2 388.2H1742.5M1743.7 384.4H1746.0M1747.1 391.2H1749.4M1750.6 386.5H1752.9M1754.0 382.7H1756.3M1757.5 386.5H1759.8M1760.9 390.3H1763.2M1764.4 384.4H1766.7M1767.8 398.0H1770.1M1771.3 392.5H1773.6M1774.7 397.1H1777.0M1778.2 381.8H1780.5M1781.6 393.7H1783.9M1785.1 389.9H1787.4M1788.5 395.0H1790.8M1792.0 393.3H1794.3M1795.4 395.9H1797.7M1798.9 385.7H1801.2M1802.3 395.0H1804.6M1805.8 384.4H1808.1M1809.2 389.9H1811.5M1812.7 386.5H1815.0M1816.1 391.2H1818.4M1819.6 385.7H1821.9M1823.0 391.2H1825.3M1826.5 383.5H1828.8M1829.9 395.0H1832.2M1833.4 384.4H1835.7M1836.8 386.9H1839.1M1840.3 384.8H1842.6M1843.7 386.9H1846.0M1847.2 372.1H1849.5M1850.6 338.5H1852.9M1854.1 376.8H1856.4M1857.5 389.5H1859.8M1861.0 385.7H1863.3M1864.4 390.3H1866.7M1867.9 386.5H1870.2M1871.4 390.3H1873.7M1874.8 384.0H1877.1M1878.3 370.8H1880.6M1881.7 386.1H1884.0M1885.2 392.5H1887.5M1888.6 389.1H1890.9M1892.1 387.8H1894.4M1895.5 382.7H1897.8M1899.0 382.7H1901.3M1902.4 386.1H1904.7M1905.9 390.3H1908.2M1909.3 384.8H1911.6M1912.8 382.7H1915.1M1916.2 379.7H1918.5M1919.7 389.1H1922.0M1923.1 392.0H1925.4M1926.6 395.0H1928.9M1930.0 345.3H1932.3M1933.5 395.0H1935.8M1936.9 386.5H1939.2M1940.4 395.0H1942.7M1943.8 395.0H1946.1M1947.3 392.9H1949.6M1950.7 391.2H1953.0M1954.2 393.3H1956.5M1957.6 390.8H1959.9M1961.1 393.3H1963.4M1964.5 393.3H1966.8M1968.0 397.1H1970.3M1971.4 390.8H1973.7M1974.9 386.1H1977.2M1978.3 387.8H1980.6M1981.8 385.2H1984.1M1985.2 379.7H1987.5M1988.7 384.0H1991.0M1992.1 393.3H1994.4M1995.6 395.9H1997.9M1999.0 391.6H2001.3M2002.5 390.8H2004.8M2005.9 395.0H2008.2M2009.4 390.8H2011.7M2012.8 395.0H2015.1M2016.3 386.1H2018.6M2019.7 391.2H2022.0M2023.2 391.2H2025.5M2026.6 398.0H2028.9M2030.1 393.3H2032.4M2033.5 388.6H2035.8M2037.0 392.9H2039.3M2040.4 392.9H2042.7M2043.9 398.0H2046.2M2047.3 395.0H2049.6M2050.8 389.9H2053.1M2054.2 383.1H2056.5M2057.7 386.9H2060.0M2061.1 395.0H2063.4M2064.6 395.9H2066.9M2068.0 393.3H2070.3M2071.5 394.6H2073.8M2074.9 394.6H2077.2M2078.4 395.9H2080.7M2081.8 394.6H2084.1M2085.3 392.0H2087.6M2088.7 394.6H2091.0M2092.2 395.9H2094.5M2095.6 393.7H2097.9M2099.1 392.9H2101.4M2102.5 383.1H2104.8M2106.0 395.9H2108.3M2109.4 400.1H2111.7M2112.9 390.8H2115.2M2116.3 399.2H2118.6M2119.8 386.5H2122.1M2123.2 382.3H2125.5M2126.7 379.7H2129.0M2130.1 395.4H2132.4M2133.6 395.4H2135.9M2137.0 399.2H2139.3M2140.5 388.6H2142.8M2143.9 395.9H2146.2M2147.4 393.7H2147.4" fill="none" stroke="#c8641a" stroke-width="4" stroke-linecap="round"/><path d="M1319.2 424.9L1319.2 424.9H1321.6L1322.7 425.4H1325.0L1326.2 429.8H1328.5L1329.6 426.0H1331.9L1333.1 423.0H1335.4L1336.5 430.7H1338.8L1340.0 424.5H1342.3L1343.4 426.0H1345.7L1346.9 424.5H1349.2L1350.3 430.7H1352.6L1353.8 424.9H1356.1L1357.2 424.9H1359.5L1360.7 430.7H1363.0L1364.1 424.5H1366.4L1367.6 424.9H1369.9L1371.0 429.8H1373.3L1374.5 425.4H1376.8L1377.9 424.1H1380.2L1381.4 429.8H1383.7L1384.8 424.5H1387.1L1388.3 424.5H1390.6L1391.7 430.7H1394.0L1395.2 426.0H1397.5L1398.6 424.5H1400.9L1402.1 430.7H1404.4L1405.5 424.9H1407.8L1409.0 425.4H1411.3L1412.4 424.5H1414.7L1415.9 429.8H1418.2L1419.3 424.5H1421.6L1422.8 423.0H1425.1L1426.2 424.1H1428.5L1429.7 430.7H1432.0L1433.1 424.5H1435.4L1436.6 424.1H1438.9L1440.0 425.4H1442.3L1443.5 430.7H1445.8L1446.9 424.1H1449.2L1450.4 426.0H1452.7L1453.8 424.5H1456.1L1457.3 429.8H1459.6L1460.7 424.9H1463.0L1464.2 424.1H1466.5L1467.6 430.2H1469.9L1471.1 424.9H1473.4L1474.5 424.5H1476.8L1478.0 424.9H1480.3L1481.4 430.2H1483.7L1484.9 423.0H1487.2L1488.3 425.4H1490.6L1491.8 430.7H1494.1L1495.2 424.5H1497.5L1498.7 424.9H1501.0L1502.1 430.2H1504.4L1505.6 424.1H1507.9L1509.0 424.9H1511.3L1512.5 424.9H1514.8L1515.9 430.7H1518.2L1519.4 424.5H1521.7L1522.8 424.9H1525.1L1526.3 430.2H1528.6L1529.7 424.9H1532.0L1533.2 424.9H1535.5L1536.6 429.8H1538.9L1540.1 423.0H1542.4L1543.5 424.5H1545.8L1547.0 430.2H1549.3L1550.4 424.1H1552.7L1553.9 424.9H1556.2L1557.3 424.5H1559.6L1560.8 429.8H1563.1L1564.2 426.0H1566.5L1567.7 423.0H1570.0L1571.1 426.0H1573.4L1574.6 430.2H1576.9L1578.0 424.1H1580.3L1581.5 426.0H1583.8L1584.9 426.0H1587.2L1588.4 424.1H1590.7L1591.8 430.2H1594.1L1595.3 424.5H1597.6L1598.8 424.1H1601.1L1602.2 423.0H1604.5L1605.7 424.9H1608.0L1609.1 429.8H1611.4L1612.6 424.1H1614.9L1616.0 424.9H1618.3L1619.5 426.0H1621.8L1622.9 430.2H1625.2L1626.4 424.5H1628.7L1629.8 426.0H1632.1L1633.3 430.7H1635.6L1636.7 423.0H1639.0L1640.2 424.9H1642.5L1643.6 429.8H1645.9L1647.1 424.9H1649.4L1650.5 424.9H1652.8L1654.0 430.2H1656.3L1657.4 425.4H1659.7L1660.9 424.9H1663.2L1664.3 429.8H1666.6L1667.8 425.4H1670.1L1671.2 423.0H1673.5L1674.7 424.9H1677.0L1678.1 429.8H1680.4L1681.6 424.1H1683.9L1685.0 424.9H1687.3L1688.5 424.9H1690.8L1691.9 430.2H1694.2L1695.4 425.4H1697.7L1698.8 426.0H1701.1L1702.3 430.7H1704.6L1705.7 424.1H1708.0L1709.2 425.4H1711.5L1712.6 430.2H1714.9L1716.1 425.4H1718.4L1719.5 424.9H1721.8L1723.0 424.9H1725.3L1726.4 430.7H1728.7L1729.9 424.5H1732.2L1733.3 424.9H1735.6L1736.8 424.5H1739.1L1740.2 430.2H1742.5L1743.7 424.1H1746.0L1747.1 423.0H1749.4L1750.6 429.8H1752.9L1754.0 424.1H1756.3L1757.5 424.1H1759.8L1760.9 426.0H1763.2L1764.4 424.9H1766.7L1767.8 429.8H1770.1L1771.3 424.9H1773.6L1774.7 424.9H1777.0L1778.2 424.9H1780.5L1781.6 430.7H1783.9L1785.1 424.1H1787.4L1788.5 424.9H1790.8L1792.0 426.0H1794.3L1795.4 430.7H1797.7L1798.9 424.9H1801.2L1802.3 425.4H1804.6L1805.8 430.2H1808.1L1809.2 426.0H1811.5L1812.7 426.0H1815.0L1816.1 426.0H1818.4L1819.6 430.7H1821.9L1823.0 426.0H1825.3L1826.5 424.9H1828.8L1829.9 424.5H1832.2L1833.4 430.7H1835.7L1836.8 424.5H1839.1L1840.3 424.9H1842.6L1843.7 429.8H1846.0L1847.2 424.9H1849.5L1850.6 424.5H1852.9L1854.1 424.9H1856.4L1857.5 430.7H1859.8L1861.0 423.0H1863.3L1864.4 424.9H1866.7L1867.9 430.2H1870.2L1871.4 424.9H1873.7L1874.8 426.0H1877.1L1878.3 425.4H1880.6L1881.7 429.8H1884.0L1885.2 424.1H1887.5L1888.6 424.9H1890.9L1892.1 424.9H1894.4L1895.5 429.8H1897.8L1899.0 424.5H1901.3L1902.4 426.0H1904.7L1905.9 429.8H1908.2L1909.3 425.4H1911.6L1912.8 424.1H1915.1L1916.2 424.5H1918.5L1919.7 429.8H1922.0L1923.1 424.1H1925.4L1926.6 423.0H1928.9L1930.0 426.0H1932.3L1933.5 430.2H1935.8L1936.9 424.9H1939.2L1940.4 425.4H1942.7L1943.8 424.9H1946.1L1947.3 430.7H1949.6L1950.7 424.5H1953.0L1954.2 423.0H1956.5L1957.6 424.5H1959.9L1961.1 429.8H1963.4L1964.5 424.5H1966.8L1968.0 423.0H1970.3L1971.4 430.7H1973.7L1974.9 423.0H1977.2L1978.3 424.9H1980.6L1981.8 430.7H1984.1L1985.2 424.5H1987.5L1988.7 424.9H1991.0L1992.1 429.8H1994.4L1995.6 426.0H1997.9L1999.0 423.0H2001.3L2002.5 430.2H2004.8L2005.9 425.4H2008.2L2009.4 424.1H2011.7L2012.8 424.5H2015.1L2016.3 430.2H2018.6L2019.7 424.9H2022.0L2023.2 424.9H2025.5L2026.6 426.0H2028.9L2030.1 425.4H2032.4L2033.5 430.7H2035.8L2037.0 425.4H2039.3L2040.4 424.9H2042.7L2043.9 425.4H2046.2L2047.3 429.8H2049.6L2050.8 423.0H2053.1L2054.2 426.0H2056.5L2057.7 424.9H2060.0L2061.1 430.2H2063.4L2064.6 426.0H2066.9L2068.0 423.0H2070.3L2071.5 424.1H2073.8L2074.9 426.0H2077.2L2078.4 429.8H2080.7L2081.8 424.9H2084.1L2085.3 425.4H2087.6L2088.7 429.8H2091.0L2092.2 426.0H2094.5L2095.6 423.0H2097.9L2099.1 424.1H2101.4L2102.5 430.2H2104.8L2106.0 424.1H2108.3L2109.4 426.0H2111.7L2112.9 424.1H2115.2L2116.3 430.7H2118.6L2119.8 426.0H2122.1L2123.2 425.4H2125.5L2126.7 430.2H2129.0L2130.1 425.4H2132.4L2133.6 424.5H2135.9L2137.0 423.0H2139.3L2140.5 424.5H2142.8L2143.9 429.8H2146.2L2147.4 425.4H2147.4" fill="none" stroke="#7eb35a" stroke-width="1.9" stroke-linejoin="round"/><path d="M1319.2 424.9H1321.6M1322.7 425.4H1325.0M1326.2 429.8H1328.5M1329.6 426.0H1331.9M1333.1 423.0H1335.4M1336.5 430.7H1338.8M1340.0 424.5H1342.3M1343.4 426.0H1345.7M1346.9 424.5H1349.2M1350.3 430.7H1352.6M1353.8 424.9H1356.1M1357.2 424.9H1359.5M1360.7 430.7H1363.0M1364.1 424.5H1366.4M1367.6 424.9H1369.9M1371.0 429.8H1373.3M1374.5 425.4H1376.8M1377.9 424.1H1380.2M1381.4 429.8H1383.7M1384.8 424.5H1387.1M1388.3 424.5H1390.6M1391.7 430.7H1394.0M1395.2 426.0H1397.5M1398.6 424.5H1400.9M1402.1 430.7H1404.4M1405.5 424.9H1407.8M1409.0 425.4H1411.3M1412.4 424.5H1414.7M1415.9 429.8H1418.2M1419.3 424.5H1421.6M1422.8 423.0H1425.1M1426.2 424.1H1428.5M1429.7 430.7H1432.0M1433.1 424.5H1435.4M1436.6 424.1H1438.9M1440.0 425.4H1442.3M1443.5 430.7H1445.8M1446.9 424.1H1449.2M1450.4 426.0H1452.7M1453.8 424.5H1456.1M1457.3 429.8H1459.6M1460.7 424.9H1463.0M1464.2 424.1H1466.5M1467.6 430.2H1469.9M1471.1 424.9H1473.4M1474.5 424.5H1476.8M1478.0 424.9H1480.3M1481.4 430.2H1483.7M1484.9 423.0H1487.2M1488.3 425.4H1490.6M1491.8 430.7H1494.1M1495.2 424.5H1497.5M1498.7 424.9H1501.0M1502.1 430.2H1504.4M1505.6 424.1H1507.9M1509.0 424.9H1511.3M1512.5 424.9H1514.8M1515.9 430.7H1518.2M1519.4 424.5H1521.7M1522.8 424.9H1525.1M1526.3 430.2H1528.6M1529.7 424.9H1532.0M1533.2 424.9H1535.5M1536.6 429.8H1538.9M1540.1 423.0H1542.4M1543.5 424.5H1545.8M1547.0 430.2H1549.3M1550.4 424.1H1552.7M1553.9 424.9H1556.2M1557.3 424.5H1559.6M1560.8 429.8H1563.1M1564.2 426.0H1566.5M1567.7 423.0H1570.0M1571.1 426.0H1573.4M1574.6 430.2H1576.9M1578.0 424.1H1580.3M1581.5 426.0H1583.8M1584.9 426.0H1587.2M1588.4 424.1H1590.7M1591.8 430.2H1594.1M1595.3 424.5H1597.6M1598.8 424.1H1601.1M1602.2 423.0H1604.5M1605.7 424.9H1608.0M1609.1 429.8H1611.4M1612.6 424.1H1614.9M1616.0 424.9H1618.3M1619.5 426.0H1621.8M1622.9 430.2H1625.2M1626.4 424.5H1628.7M1629.8 426.0H1632.1M1633.3 430.7H1635.6M1636.7 423.0H1639.0M1640.2 424.9H1642.5M1643.6 429.8H1645.9M1647.1 424.9H1649.4M1650.5 424.9H1652.8M1654.0 430.2H1656.3M1657.4 425.4H1659.7M1660.9 424.9H1663.2M1664.3 429.8H1666.6M1667.8 425.4H1670.1M1671.2 423.0H1673.5M1674.7 424.9H1677.0M1678.1 429.8H1680.4M1681.6 424.1H1683.9M1685.0 424.9H1687.3M1688.5 424.9H1690.8M1691.9 430.2H1694.2M1695.4 425.4H1697.7M1698.8 426.0H1701.1M1702.3 430.7H1704.6M1705.7 424.1H1708.0M1709.2 425.4H1711.5M1712.6 430.2H1714.9M1716.1 425.4H1718.4M1719.5 424.9H1721.8M1723.0 424.9H1725.3M1726.4 430.7H1728.7M1729.9 424.5H1732.2M1733.3 424.9H1735.6M1736.8 424.5H1739.1M1740.2 430.2H1742.5M1743.7 424.1H1746.0M1747.1 423.0H1749.4M1750.6 429.8H1752.9M1754.0 424.1H1756.3M1757.5 424.1H1759.8M1760.9 426.0H1763.2M1764.4 424.9H1766.7M1767.8 429.8H1770.1M1771.3 424.9H1773.6M1774.7 424.9H1777.0M1778.2 424.9H1780.5M1781.6 430.7H1783.9M1785.1 424.1H1787.4M1788.5 424.9H1790.8M1792.0 426.0H1794.3M1795.4 430.7H1797.7M1798.9 424.9H1801.2M1802.3 425.4H1804.6M1805.8 430.2H1808.1M1809.2 426.0H1811.5M1812.7 426.0H1815.0M1816.1 426.0H1818.4M1819.6 430.7H1821.9M1823.0 426.0H1825.3M1826.5 424.9H1828.8M1829.9 424.5H1832.2M1833.4 430.7H1835.7M1836.8 424.5H1839.1M1840.3 424.9H1842.6M1843.7 429.8H1846.0M1847.2 424.9H1849.5M1850.6 424.5H1852.9M1854.1 424.9H1856.4M1857.5 430.7H1859.8M1861.0 423.0H1863.3M1864.4 424.9H1866.7M1867.9 430.2H1870.2M1871.4 424.9H1873.7M1874.8 426.0H1877.1M1878.3 425.4H1880.6M1881.7 429.8H1884.0M1885.2 424.1H1887.5M1888.6 424.9H1890.9M1892.1 424.9H1894.4M1895.5 429.8H1897.8M1899.0 424.5H1901.3M1902.4 426.0H1904.7M1905.9 429.8H1908.2M1909.3 425.4H1911.6M1912.8 424.1H1915.1M1916.2 424.5H1918.5M1919.7 429.8H1922.0M1923.1 424.1H1925.4M1926.6 423.0H1928.9M1930.0 426.0H1932.3M1933.5 430.2H1935.8M1936.9 424.9H1939.2M1940.4 425.4H1942.7M1943.8 424.9H1946.1M1947.3 430.7H1949.6M1950.7 424.5H1953.0M1954.2 423.0H1956.5M1957.6 424.5H1959.9M1961.1 429.8H1963.4M1964.5 424.5H1966.8M1968.0 423.0H1970.3M1971.4 430.7H1973.7M1974.9 423.0H1977.2M1978.3 424.9H1980.6M1981.8 430.7H1984.1M1985.2 424.5H1987.5M1988.7 424.9H1991.0M1992.1 429.8H1994.4M1995.6 426.0H1997.9M1999.0 423.0H2001.3M2002.5 430.2H2004.8M2005.9 425.4H2008.2M2009.4 424.1H2011.7M2012.8 424.5H2015.1M2016.3 430.2H2018.6M2019.7 424.9H2022.0M2023.2 424.9H2025.5M2026.6 426.0H2028.9M2030.1 425.4H2032.4M2033.5 430.7H2035.8M2037.0 425.4H2039.3M2040.4 424.9H2042.7M2043.9 425.4H2046.2M2047.3 429.8H2049.6M2050.8 423.0H2053.1M2054.2 426.0H2056.5M2057.7 424.9H2060.0M2061.1 430.2H2063.4M2064.6 426.0H2066.9M2068.0 423.0H2070.3M2071.5 424.1H2073.8M2074.9 426.0H2077.2M2078.4 429.8H2080.7M2081.8 424.9H2084.1M2085.3 425.4H2087.6M2088.7 429.8H2091.0M2092.2 426.0H2094.5M2095.6 423.0H2097.9M2099.1 424.1H2101.4M2102.5 430.2H2104.8M2106.0 424.1H2108.3M2109.4 426.0H2111.7M2112.9 424.1H2115.2M2116.3 430.7H2118.6M2119.8 426.0H2122.1M2123.2 425.4H2125.5M2126.7 430.2H2129.0M2130.1 425.4H2132.4M2133.6 424.5H2135.9M2137.0 423.0H2139.3M2140.5 424.5H2142.8M2143.9 429.8H2146.2M2147.4 425.4H2147.4" fill="none" stroke="#7eb35a" stroke-width="4" stroke-linecap="round"/><path d="M1319.2 460.0L1319.2 460.0H1321.6L1322.7 461.0H1325.0L1326.2 460.0H1328.5L1329.6 460.0H1331.9L1333.1 459.5H1335.4L1336.5 461.0H1338.8L1340.0 461.0H1342.3L1343.4 459.5H1345.7L1346.9 459.5H1349.2L1350.3 459.5H1352.6L1353.8 459.5H1356.1L1357.2 459.5H1359.5L1360.7 459.1H1363.0L1364.1 459.1H1366.4L1367.6 458.7H1369.9L1371.0 461.0H1373.3L1374.5 461.0H1376.8L1377.9 458.3H1380.2L1381.4 458.3H1383.7L1384.8 458.3H1387.1L1388.3 458.7H1390.6L1391.7 458.7H1394.0L1395.2 458.7H1397.5L1398.6 460.0H1400.9L1402.1 460.0H1404.4L1405.5 455.7H1407.8L1409.0 455.7H1411.3L1412.4 455.7H1414.7L1415.9 455.7H1418.2L1419.3 461.0H1421.6L1422.8 461.0H1425.1L1426.2 460.0H1428.5L1429.7 460.0H1432.0L1433.1 460.0H1435.4L1436.6 461.0H1438.9L1440.0 460.0H1442.3L1443.5 458.3H1445.8L1446.9 458.3H1449.2L1450.4 458.3H1452.7L1453.8 460.6H1456.1L1457.3 460.6H1459.6L1460.7 460.6H1463.0L1464.2 461.0H1466.5L1467.6 461.0H1469.9L1471.1 458.3H1473.4L1474.5 461.0H1476.8L1478.0 459.5H1480.3L1481.4 459.5H1483.7L1484.9 461.0H1487.2L1488.3 458.3H1490.6L1491.8 458.3H1494.1L1495.2 458.3H1497.5L1498.7 461.0H1501.0L1502.1 458.3H1504.4L1505.6 458.3H1507.9L1509.0 459.5H1511.3L1512.5 459.5H1514.8L1515.9 458.3H1518.2L1519.4 458.3H1521.7L1522.8 458.3H1525.1L1526.3 458.3H1528.6L1529.7 458.3H1532.0L1533.2 458.3H1535.5L1536.6 459.5H1538.9L1540.1 457.0H1542.4L1543.5 457.0H1545.8L1547.0 457.0H1549.3L1550.4 459.5H1552.7L1553.9 459.5H1556.2L1557.3 459.5H1559.6L1560.8 459.5H1563.1L1564.2 460.0H1566.5L1567.7 460.0H1570.0L1571.1 460.6H1573.4L1574.6 460.6H1576.9L1578.0 458.3H1580.3L1581.5 458.3H1583.8L1584.9 460.6H1587.2L1588.4 458.7H1590.7L1591.8 459.5H1594.1L1595.3 459.5H1597.6L1598.8 460.6H1601.1L1602.2 459.1H1604.5L1605.7 459.5H1608.0L1609.1 458.3H1611.4L1612.6 460.6H1614.9L1616.0 460.6H1618.3L1619.5 458.3H1621.8L1622.9 459.5H1625.2L1626.4 458.7H1628.7L1629.8 458.7H1632.1L1633.3 458.7H1635.6L1636.7 458.7H1639.0L1640.2 458.7H1642.5L1643.6 458.7H1645.9L1647.1 459.1H1649.4L1650.5 459.1H1652.8L1654.0 460.6H1656.3L1657.4 460.6H1659.7L1660.9 461.0H1663.2L1664.3 456.6H1666.6L1667.8 456.6H1670.1L1671.2 456.6H1673.5L1674.7 461.0H1677.0L1678.1 461.0H1680.4L1681.6 459.1H1683.9L1685.0 459.1H1687.3L1688.5 459.1H1690.8L1691.9 459.5H1694.2L1695.4 459.5H1697.7L1698.8 459.5H1701.1L1702.3 460.6H1704.6L1705.7 459.5H1708.0L1709.2 460.6H1711.5L1712.6 460.6H1714.9L1716.1 459.5H1718.4L1719.5 460.0H1721.8L1723.0 460.0H1725.3L1726.4 460.0H1728.7L1729.9 460.0H1732.2L1733.3 459.5H1735.6L1736.8 459.5H1739.1L1740.2 460.0H1742.5L1743.7 460.0H1746.0L1747.1 460.0H1749.4L1750.6 458.3H1752.9L1754.0 458.3H1756.3L1757.5 460.6H1759.8L1760.9 460.6H1763.2L1764.4 461.0H1766.7L1767.8 457.0H1770.1L1771.3 457.0H1773.6L1774.7 460.6H1777.0L1778.2 460.6H1780.5L1781.6 460.6H1783.9L1785.1 460.6H1787.4L1788.5 460.6H1790.8L1792.0 459.5H1794.3L1795.4 454.0H1797.7L1798.9 454.0H1801.2L1802.3 459.1H1804.6L1805.8 459.1H1808.1L1809.2 459.1H1811.5L1812.7 458.7H1815.0L1816.1 458.7H1818.4L1819.6 460.0H1821.9L1823.0 459.5H1825.3L1826.5 460.0H1828.8L1829.9 460.0H1832.2L1833.4 461.0H1835.7L1836.8 459.5H1839.1L1840.3 459.5H1842.6L1843.7 459.5H1846.0L1847.2 459.5H1849.5L1850.6 459.5H1852.9L1854.1 459.5H1856.4L1857.5 459.5H1859.8L1861.0 458.3H1863.3L1864.4 458.3H1866.7L1867.9 458.3H1870.2L1871.4 460.0H1873.7L1874.8 460.0H1877.1L1878.3 459.1H1880.6L1881.7 459.5H1884.0L1885.2 461.0H1887.5L1888.6 459.5H1890.9L1892.1 459.5H1894.4L1895.5 459.5H1897.8L1899.0 458.3H1901.3L1902.4 458.3H1904.7L1905.9 458.7H1908.2L1909.3 458.7H1911.6L1912.8 458.7H1915.1L1916.2 458.7H1918.5L1919.7 458.7H1922.0L1923.1 459.5H1925.4L1926.6 459.5H1928.9L1930.0 459.5H1932.3L1933.5 459.5H1935.8L1936.9 458.7H1939.2L1940.4 458.7H1942.7L1943.8 461.0H1946.1L1947.3 461.0H1949.6L1950.7 459.5H1953.0L1954.2 456.1H1956.5L1957.6 456.1H1959.9L1961.1 460.6H1963.4L1964.5 460.6H1966.8L1968.0 459.5H1970.3L1971.4 459.5H1973.7L1974.9 459.5H1977.2L1978.3 459.5H1980.6L1981.8 459.5H1984.1L1985.2 461.0H1987.5L1988.7 461.0H1991.0L1992.1 460.0H1994.4L1995.6 459.5H1997.9L1999.0 459.5H2001.3L2002.5 461.0H2004.8L2005.9 461.0H2008.2L2009.4 459.1H2011.7L2012.8 459.1H2015.1L2016.3 459.1H2018.6L2019.7 461.0H2022.0L2023.2 457.0H2025.5L2026.6 457.0H2028.9L2030.1 457.0H2032.4L2033.5 460.0H2035.8L2037.0 459.1H2039.3L2040.4 459.1H2042.7L2043.9 460.6H2046.2L2047.3 460.6H2049.6L2050.8 459.5H2053.1L2054.2 459.5H2056.5L2057.7 459.5H2060.0L2061.1 459.5H2063.4L2064.6 461.0H2066.9L2068.0 459.5H2070.3L2071.5 460.0H2073.8L2074.9 460.0H2077.2L2078.4 461.0H2080.7L2081.8 461.0H2084.1L2085.3 461.0H2087.6L2088.7 461.0H2091.0L2092.2 459.5H2094.5L2095.6 460.6H2097.9L2099.1 460.6H2101.4L2102.5 460.6H2104.8L2106.0 460.0H2108.3L2109.4 460.0H2111.7L2112.9 460.0H2115.2L2116.3 458.7H2118.6L2119.8 458.7H2122.1L2123.2 455.7H2125.5L2126.7 455.7H2129.0L2130.1 455.7H2132.4L2133.6 459.5H2135.9L2137.0 460.0H2139.3L2140.5 458.7H2142.8L2143.9 458.7H2146.2L2147.4 458.7H2147.4" fill="none" stroke="#c277c6" stroke-width="1.9" stroke-linejoin="round"/><path d="M1319.2 460.0H1321.6M1322.7 461.0H1325.0M1326.2 460.0H1328.5M1329.6 460.0H1331.9M1333.1 459.5H1335.4M1336.5 461.0H1338.8M1340.0 461.0H1342.3M1343.4 459.5H1345.7M1346.9 459.5H1349.2M1350.3 459.5H1352.6M1353.8 459.5H1356.1M1357.2 459.5H1359.5M1360.7 459.1H1363.0M1364.1 459.1H1366.4M1367.6 458.7H1369.9M1371.0 461.0H1373.3M1374.5 461.0H1376.8M1377.9 458.3H1380.2M1381.4 458.3H1383.7M1384.8 458.3H1387.1M1388.3 458.7H1390.6M1391.7 458.7H1394.0M1395.2 458.7H1397.5M1398.6 460.0H1400.9M1402.1 460.0H1404.4M1405.5 455.7H1407.8M1409.0 455.7H1411.3M1412.4 455.7H1414.7M1415.9 455.7H1418.2M1419.3 461.0H1421.6M1422.8 461.0H1425.1M1426.2 460.0H1428.5M1429.7 460.0H1432.0M1433.1 460.0H1435.4M1436.6 461.0H1438.9M1440.0 460.0H1442.3M1443.5 458.3H1445.8M1446.9 458.3H1449.2M1450.4 458.3H1452.7M1453.8 460.6H1456.1M1457.3 460.6H1459.6M1460.7 460.6H1463.0M1464.2 461.0H1466.5M1467.6 461.0H1469.9M1471.1 458.3H1473.4M1474.5 461.0H1476.8M1478.0 459.5H1480.3M1481.4 459.5H1483.7M1484.9 461.0H1487.2M1488.3 458.3H1490.6M1491.8 458.3H1494.1M1495.2 458.3H1497.5M1498.7 461.0H1501.0M1502.1 458.3H1504.4M1505.6 458.3H1507.9M1509.0 459.5H1511.3M1512.5 459.5H1514.8M1515.9 458.3H1518.2M1519.4 458.3H1521.7M1522.8 458.3H1525.1M1526.3 458.3H1528.6M1529.7 458.3H1532.0M1533.2 458.3H1535.5M1536.6 459.5H1538.9M1540.1 457.0H1542.4M1543.5 457.0H1545.8M1547.0 457.0H1549.3M1550.4 459.5H1552.7M1553.9 459.5H1556.2M1557.3 459.5H1559.6M1560.8 459.5H1563.1M1564.2 460.0H1566.5M1567.7 460.0H1570.0M1571.1 460.6H1573.4M1574.6 460.6H1576.9M1578.0 458.3H1580.3M1581.5 458.3H1583.8M1584.9 460.6H1587.2M1588.4 458.7H1590.7M1591.8 459.5H1594.1M1595.3 459.5H1597.6M1598.8 460.6H1601.1M1602.2 459.1H1604.5M1605.7 459.5H1608.0M1609.1 458.3H1611.4M1612.6 460.6H1614.9M1616.0 460.6H1618.3M1619.5 458.3H1621.8M1622.9 459.5H1625.2M1626.4 458.7H1628.7M1629.8 458.7H1632.1M1633.3 458.7H1635.6M1636.7 458.7H1639.0M1640.2 458.7H1642.5M1643.6 458.7H1645.9M1647.1 459.1H1649.4M1650.5 459.1H1652.8M1654.0 460.6H1656.3M1657.4 460.6H1659.7M1660.9 461.0H1663.2M1664.3 456.6H1666.6M1667.8 456.6H1670.1M1671.2 456.6H1673.5M1674.7 461.0H1677.0M1678.1 461.0H1680.4M1681.6 459.1H1683.9M1685.0 459.1H1687.3M1688.5 459.1H1690.8M1691.9 459.5H1694.2M1695.4 459.5H1697.7M1698.8 459.5H1701.1M1702.3 460.6H1704.6M1705.7 459.5H1708.0M1709.2 460.6H1711.5M1712.6 460.6H1714.9M1716.1 459.5H1718.4M1719.5 460.0H1721.8M1723.0 460.0H1725.3M1726.4 460.0H1728.7M1729.9 460.0H1732.2M1733.3 459.5H1735.6M1736.8 459.5H1739.1M1740.2 460.0H1742.5M1743.7 460.0H1746.0M1747.1 460.0H1749.4M1750.6 458.3H1752.9M1754.0 458.3H1756.3M1757.5 460.6H1759.8M1760.9 460.6H1763.2M1764.4 461.0H1766.7M1767.8 457.0H1770.1M1771.3 457.0H1773.6M1774.7 460.6H1777.0M1778.2 460.6H1780.5M1781.6 460.6H1783.9M1785.1 460.6H1787.4M1788.5 460.6H1790.8M1792.0 459.5H1794.3M1795.4 454.0H1797.7M1798.9 454.0H1801.2M1802.3 459.1H1804.6M1805.8 459.1H1808.1M1809.2 459.1H1811.5M1812.7 458.7H1815.0M1816.1 458.7H1818.4M1819.6 460.0H1821.9M1823.0 459.5H1825.3M1826.5 460.0H1828.8M1829.9 460.0H1832.2M1833.4 461.0H1835.7M1836.8 459.5H1839.1M1840.3 459.5H1842.6M1843.7 459.5H1846.0M1847.2 459.5H1849.5M1850.6 459.5H1852.9M1854.1 459.5H1856.4M1857.5 459.5H1859.8M1861.0 458.3H1863.3M1864.4 458.3H1866.7M1867.9 458.3H1870.2M1871.4 460.0H1873.7M1874.8 460.0H1877.1M1878.3 459.1H1880.6M1881.7 459.5H1884.0M1885.2 461.0H1887.5M1888.6 459.5H1890.9M1892.1 459.5H1894.4M1895.5 459.5H1897.8M1899.0 458.3H1901.3M1902.4 458.3H1904.7M1905.9 458.7H1908.2M1909.3 458.7H1911.6M1912.8 458.7H1915.1M1916.2 458.7H1918.5M1919.7 458.7H1922.0M1923.1 459.5H1925.4M1926.6 459.5H1928.9M1930.0 459.5H1932.3M1933.5 459.5H1935.8M1936.9 458.7H1939.2M1940.4 458.7H1942.7M1943.8 461.0H1946.1M1947.3 461.0H1949.6M1950.7 459.5H1953.0M1954.2 456.1H1956.5M1957.6 456.1H1959.9M1961.1 460.6H1963.4M1964.5 460.6H1966.8M1968.0 459.5H1970.3M1971.4 459.5H1973.7M1974.9 459.5H1977.2M1978.3 459.5H1980.6M1981.8 459.5H1984.1M1985.2 461.0H1987.5M1988.7 461.0H1991.0M1992.1 460.0H1994.4M1995.6 459.5H1997.9M1999.0 459.5H2001.3M2002.5 461.0H2004.8M2005.9 461.0H2008.2M2009.4 459.1H2011.7M2012.8 459.1H2015.1M2016.3 459.1H2018.6M2019.7 461.0H2022.0M2023.2 457.0H2025.5M2026.6 457.0H2028.9M2030.1 457.0H2032.4M2033.5 460.0H2035.8M2037.0 459.1H2039.3M2040.4 459.1H2042.7M2043.9 460.6H2046.2M2047.3 460.6H2049.6M2050.8 459.5H2053.1M2054.2 459.5H2056.5M2057.7 459.5H2060.0M2061.1 459.5H2063.4M2064.6 461.0H2066.9M2068.0 459.5H2070.3M2071.5 460.0H2073.8M2074.9 460.0H2077.2M2078.4 461.0H2080.7M2081.8 461.0H2084.1M2085.3 461.0H2087.6M2088.7 461.0H2091.0M2092.2 459.5H2094.5M2095.6 460.6H2097.9M2099.1 460.6H2101.4M2102.5 460.6H2104.8M2106.0 460.0H2108.3M2109.4 460.0H2111.7M2112.9 460.0H2115.2M2116.3 458.7H2118.6M2119.8 458.7H2122.1M2123.2 455.7H2125.5M2126.7 455.7H2129.0M2130.1 455.7H2132.4M2133.6 459.5H2135.9M2137.0 460.0H2139.3M2140.5 458.7H2142.8M2143.9 458.7H2146.2M2147.4 458.7H2147.4" fill="none" stroke="#c277c6" stroke-width="4" stroke-linecap="round"/><path d="M1319.2 476.9L1319.2 476.9H1321.6L1322.7 476.9H1325.0L1326.2 476.9H1328.5L1329.6 476.9H1331.9L1333.1 476.9H1335.4L1336.5 476.9H1338.8L1340.0 476.9H1342.3L1343.4 476.9H1345.7L1346.9 476.0H1349.2L1350.3 476.0H1352.6L1353.8 476.0H1356.1L1357.2 476.0H1359.5L1360.7 476.9H1363.0L1364.1 476.9H1366.4L1367.6 476.9H1369.9L1371.0 476.9H1373.3L1374.5 476.9H1376.8L1377.9 476.9H1380.2L1381.4 476.9H1383.7L1384.8 476.9H1387.1L1388.3 476.0H1390.6L1391.7 476.0H1394.0L1395.2 476.0H1397.5L1398.6 476.0H1400.9L1402.1 476.0H1404.4L1405.5 476.0H1407.8L1409.0 476.0H1411.3L1412.4 476.0H1414.7L1415.9 476.0H1418.2L1419.3 476.0H1421.6L1422.8 476.0H1425.1L1426.2 476.0H1428.5L1429.7 477.2H1432.0L1433.1 477.2H1435.4L1436.6 477.2H1438.9L1440.0 477.2H1442.3L1443.5 476.0H1445.8L1446.9 476.0H1449.2L1450.4 476.0H1452.7L1453.8 476.0H1456.1L1457.3 476.6H1459.6L1460.7 476.6H1463.0L1464.2 476.6H1466.5L1467.6 476.6H1469.9L1471.1 476.9H1473.4L1474.5 476.9H1476.8L1478.0 476.9H1480.3L1481.4 476.9H1483.7L1484.9 476.0H1487.2L1488.3 476.0H1490.6L1491.8 476.0H1494.1L1495.2 476.0H1497.5L1498.7 476.6H1501.0L1502.1 476.6H1504.4L1505.6 476.6H1507.9L1509.0 476.6H1511.3L1512.5 476.6H1514.8L1515.9 476.6H1518.2L1519.4 476.6H1521.7L1522.8 476.6H1525.1L1526.3 476.6H1528.6L1529.7 476.6H1532.0L1533.2 476.6H1535.5L1536.6 476.6H1538.9L1540.1 476.6H1542.4L1543.5 476.6H1545.8L1547.0 476.6H1549.3L1550.4 476.6H1552.7L1553.9 476.9H1556.2L1557.3 476.9H1559.6L1560.8 476.9H1563.1L1564.2 476.9H1566.5L1567.7 477.2H1570.0L1571.1 477.2H1573.4L1574.6 477.2H1576.9L1578.0 477.2H1580.3L1581.5 477.2H1583.8L1584.9 477.2H1587.2L1588.4 477.2H1590.7L1591.8 477.2H1594.1L1595.3 477.2H1597.6L1598.8 477.2H1601.1L1602.2 477.2H1604.5L1605.7 477.2H1608.0L1609.1 476.9H1611.4L1612.6 476.9H1614.9L1616.0 476.9H1618.3L1619.5 476.9H1621.8L1622.9 476.6H1625.2L1626.4 476.6H1628.7L1629.8 476.6H1632.1L1633.3 476.6H1635.6L1636.7 476.9H1639.0L1640.2 476.9H1642.5L1643.6 476.9H1645.9L1647.1 476.9H1649.4L1650.5 477.2H1652.8L1654.0 477.2H1656.3L1657.4 477.2H1659.7L1660.9 477.2H1663.2L1664.3 476.9H1666.6L1667.8 476.9H1670.1L1671.2 476.9H1673.5L1674.7 476.9H1677.0L1678.1 476.0H1680.4L1681.6 476.0H1683.9L1685.0 476.0H1687.3L1688.5 476.0H1690.8L1691.9 476.9H1694.2L1695.4 476.9H1697.7L1698.8 476.9H1701.1L1702.3 476.9H1704.6L1705.7 476.9H1708.0L1709.2 476.9H1711.5L1712.6 476.9H1714.9L1716.1 476.9H1718.4L1719.5 477.2H1721.8L1723.0 477.2H1725.3L1726.4 477.2H1728.7L1729.9 477.2H1732.2L1733.3 476.6H1735.6L1736.8 476.6H1739.1L1740.2 476.6H1742.5L1743.7 476.6H1746.0L1747.1 477.2H1749.4L1750.6 477.2H1752.9L1754.0 477.2H1756.3L1757.5 477.2H1759.8L1760.9 476.6H1763.2L1764.4 476.6H1766.7L1767.8 476.6H1770.1L1771.3 476.6H1773.6L1774.7 476.9H1777.0L1778.2 476.9H1780.5L1781.6 476.9H1783.9L1785.1 476.9H1787.4L1788.5 476.6H1790.8L1792.0 476.6H1794.3L1795.4 476.6H1797.7L1798.9 476.6H1801.2L1802.3 476.9H1804.6L1805.8 476.9H1808.1L1809.2 476.9H1811.5L1812.7 476.9H1815.0L1816.1 476.9H1818.4L1819.6 476.9H1821.9L1823.0 476.9H1825.3L1826.5 476.9H1828.8L1829.9 476.9H1832.2L1833.4 476.9H1835.7L1836.8 476.9H1839.1L1840.3 476.9H1842.6L1843.7 477.2H1846.0L1847.2 477.2H1849.5L1850.6 477.2H1852.9L1854.1 477.2H1856.4L1857.5 476.9H1859.8L1861.0 476.9H1863.3L1864.4 476.9H1866.7L1867.9 476.9H1870.2L1871.4 476.0H1873.7L1874.8 476.0H1877.1L1878.3 476.0H1880.6L1881.7 476.0H1884.0L1885.2 477.2H1887.5L1888.6 477.2H1890.9L1892.1 477.2H1894.4L1895.5 477.2H1897.8L1899.0 476.6H1901.3L1902.4 476.6H1904.7L1905.9 476.6H1908.2L1909.3 476.6H1911.6L1912.8 476.9H1915.1L1916.2 476.9H1918.5L1919.7 476.9H1922.0L1923.1 476.9H1925.4L1926.6 476.9H1928.9L1930.0 476.9H1932.3L1933.5 476.9H1935.8L1936.9 476.9H1939.2L1940.4 477.2H1942.7L1943.8 477.2H1946.1L1947.3 477.2H1949.6L1950.7 477.2H1953.0L1954.2 476.6H1956.5L1957.6 476.6H1959.9L1961.1 476.6H1963.4L1964.5 476.6H1966.8L1968.0 476.9H1970.3L1971.4 476.9H1973.7L1974.9 476.9H1977.2L1978.3 476.9H1980.6L1981.8 477.2H1984.1L1985.2 477.2H1987.5L1988.7 477.2H1991.0L1992.1 477.2H1994.4L1995.6 476.6H1997.9L1999.0 476.6H2001.3L2002.5 476.6H2004.8L2005.9 476.6H2008.2L2009.4 476.6H2011.7L2012.8 476.6H2015.1L2016.3 476.6H2018.6L2019.7 476.6H2022.0L2023.2 476.9H2025.5L2026.6 476.9H2028.9L2030.1 476.9H2032.4L2033.5 476.9H2035.8L2037.0 476.9H2039.3L2040.4 476.9H2042.7L2043.9 476.9H2046.2L2047.3 476.9H2049.6L2050.8 476.0H2053.1L2054.2 476.0H2056.5L2057.7 476.0H2060.0L2061.1 476.0H2063.4L2064.6 477.2H2066.9L2068.0 477.2H2070.3L2071.5 477.2H2073.8L2074.9 477.2H2077.2L2078.4 476.0H2080.7L2081.8 476.0H2084.1L2085.3 476.0H2087.6L2088.7 476.0H2091.0L2092.2 476.9H2094.5L2095.6 476.9H2097.9L2099.1 476.9H2101.4L2102.5 476.9H2104.8L2106.0 476.9H2108.3L2109.4 476.9H2111.7L2112.9 476.9H2115.2L2116.3 476.9H2118.6L2119.8 476.6H2122.1L2123.2 476.6H2125.5L2126.7 476.6H2129.0L2130.1 476.6H2132.4L2133.6 476.0H2135.9L2137.0 476.0H2139.3L2140.5 476.0H2142.8L2143.9 476.0H2146.2L2147.4 476.9H2147.4" fill="none" stroke="#5980b1" stroke-width="1.8" stroke-linejoin="round"/><path d="M1319.2 476.9H1321.6M1322.7 476.9H1325.0M1326.2 476.9H1328.5M1329.6 476.9H1331.9M1333.1 476.9H1335.4M1336.5 476.9H1338.8M1340.0 476.9H1342.3M1343.4 476.9H1345.7M1346.9 476.0H1349.2M1350.3 476.0H1352.6M1353.8 476.0H1356.1M1357.2 476.0H1359.5M1360.7 476.9H1363.0M1364.1 476.9H1366.4M1367.6 476.9H1369.9M1371.0 476.9H1373.3M1374.5 476.9H1376.8M1377.9 476.9H1380.2M1381.4 476.9H1383.7M1384.8 476.9H1387.1M1388.3 476.0H1390.6M1391.7 476.0H1394.0M1395.2 476.0H1397.5M1398.6 476.0H1400.9M1402.1 476.0H1404.4M1405.5 476.0H1407.8M1409.0 476.0H1411.3M1412.4 476.0H1414.7M1415.9 476.0H1418.2M1419.3 476.0H1421.6M1422.8 476.0H1425.1M1426.2 476.0H1428.5M1429.7 477.2H1432.0M1433.1 477.2H1435.4M1436.6 477.2H1438.9M1440.0 477.2H1442.3M1443.5 476.0H1445.8M1446.9 476.0H1449.2M1450.4 476.0H1452.7M1453.8 476.0H1456.1M1457.3 476.6H1459.6M1460.7 476.6H1463.0M1464.2 476.6H1466.5M1467.6 476.6H1469.9M1471.1 476.9H1473.4M1474.5 476.9H1476.8M1478.0 476.9H1480.3M1481.4 476.9H1483.7M1484.9 476.0H1487.2M1488.3 476.0H1490.6M1491.8 476.0H1494.1M1495.2 476.0H1497.5M1498.7 476.6H1501.0M1502.1 476.6H1504.4M1505.6 476.6H1507.9M1509.0 476.6H1511.3M1512.5 476.6H1514.8M1515.9 476.6H1518.2M1519.4 476.6H1521.7M1522.8 476.6H1525.1M1526.3 476.6H1528.6M1529.7 476.6H1532.0M1533.2 476.6H1535.5M1536.6 476.6H1538.9M1540.1 476.6H1542.4M1543.5 476.6H1545.8M1547.0 476.6H1549.3M1550.4 476.6H1552.7M1553.9 476.9H1556.2M1557.3 476.9H1559.6M1560.8 476.9H1563.1M1564.2 476.9H1566.5M1567.7 477.2H1570.0M1571.1 477.2H1573.4M1574.6 477.2H1576.9M1578.0 477.2H1580.3M1581.5 477.2H1583.8M1584.9 477.2H1587.2M1588.4 477.2H1590.7M1591.8 477.2H1594.1M1595.3 477.2H1597.6M1598.8 477.2H1601.1M1602.2 477.2H1604.5M1605.7 477.2H1608.0M1609.1 476.9H1611.4M1612.6 476.9H1614.9M1616.0 476.9H1618.3M1619.5 476.9H1621.8M1622.9 476.6H1625.2M1626.4 476.6H1628.7M1629.8 476.6H1632.1M1633.3 476.6H1635.6M1636.7 476.9H1639.0M1640.2 476.9H1642.5M1643.6 476.9H1645.9M1647.1 476.9H1649.4M1650.5 477.2H1652.8M1654.0 477.2H1656.3M1657.4 477.2H1659.7M1660.9 477.2H1663.2M1664.3 476.9H1666.6M1667.8 476.9H1670.1M1671.2 476.9H1673.5M1674.7 476.9H1677.0M1678.1 476.0H1680.4M1681.6 476.0H1683.9M1685.0 476.0H1687.3M1688.5 476.0H1690.8M1691.9 476.9H1694.2M1695.4 476.9H1697.7M1698.8 476.9H1701.1M1702.3 476.9H1704.6M1705.7 476.9H1708.0M1709.2 476.9H1711.5M1712.6 476.9H1714.9M1716.1 476.9H1718.4M1719.5 477.2H1721.8M1723.0 477.2H1725.3M1726.4 477.2H1728.7M1729.9 477.2H1732.2M1733.3 476.6H1735.6M1736.8 476.6H1739.1M1740.2 476.6H1742.5M1743.7 476.6H1746.0M1747.1 477.2H1749.4M1750.6 477.2H1752.9M1754.0 477.2H1756.3M1757.5 477.2H1759.8M1760.9 476.6H1763.2M1764.4 476.6H1766.7M1767.8 476.6H1770.1M1771.3 476.6H1773.6M1774.7 476.9H1777.0M1778.2 476.9H1780.5M1781.6 476.9H1783.9M1785.1 476.9H1787.4M1788.5 476.6H1790.8M1792.0 476.6H1794.3M1795.4 476.6H1797.7M1798.9 476.6H1801.2M1802.3 476.9H1804.6M1805.8 476.9H1808.1M1809.2 476.9H1811.5M1812.7 476.9H1815.0M1816.1 476.9H1818.4M1819.6 476.9H1821.9M1823.0 476.9H1825.3M1826.5 476.9H1828.8M1829.9 476.9H1832.2M1833.4 476.9H1835.7M1836.8 476.9H1839.1M1840.3 476.9H1842.6M1843.7 477.2H1846.0M1847.2 477.2H1849.5M1850.6 477.2H1852.9M1854.1 477.2H1856.4M1857.5 476.9H1859.8M1861.0 476.9H1863.3M1864.4 476.9H1866.7M1867.9 476.9H1870.2M1871.4 476.0H1873.7M1874.8 476.0H1877.1M1878.3 476.0H1880.6M1881.7 476.0H1884.0M1885.2 477.2H1887.5M1888.6 477.2H1890.9M1892.1 477.2H1894.4M1895.5 477.2H1897.8M1899.0 476.6H1901.3M1902.4 476.6H1904.7M1905.9 476.6H1908.2M1909.3 476.6H1911.6M1912.8 476.9H1915.1M1916.2 476.9H1918.5M1919.7 476.9H1922.0M1923.1 476.9H1925.4M1926.6 476.9H1928.9M1930.0 476.9H1932.3M1933.5 476.9H1935.8M1936.9 476.9H1939.2M1940.4 477.2H1942.7M1943.8 477.2H1946.1M1947.3 477.2H1949.6M1950.7 477.2H1953.0M1954.2 476.6H1956.5M1957.6 476.6H1959.9M1961.1 476.6H1963.4M1964.5 476.6H1966.8M1968.0 476.9H1970.3M1971.4 476.9H1973.7M1974.9 476.9H1977.2M1978.3 476.9H1980.6M1981.8 477.2H1984.1M1985.2 477.2H1987.5M1988.7 477.2H1991.0M1992.1 477.2H1994.4M1995.6 476.6H1997.9M1999.0 476.6H2001.3M2002.5 476.6H2004.8M2005.9 476.6H2008.2M2009.4 476.6H2011.7M2012.8 476.6H2015.1M2016.3 476.6H2018.6M2019.7 476.6H2022.0M2023.2 476.9H2025.5M2026.6 476.9H2028.9M2030.1 476.9H2032.4M2033.5 476.9H2035.8M2037.0 476.9H2039.3M2040.4 476.9H2042.7M2043.9 476.9H2046.2M2047.3 476.9H2049.6M2050.8 476.0H2053.1M2054.2 476.0H2056.5M2057.7 476.0H2060.0M2061.1 476.0H2063.4M2064.6 477.2H2066.9M2068.0 477.2H2070.3M2071.5 477.2H2073.8M2074.9 477.2H2077.2M2078.4 476.0H2080.7M2081.8 476.0H2084.1M2085.3 476.0H2087.6M2088.7 476.0H2091.0M2092.2 476.9H2094.5M2095.6 476.9H2097.9M2099.1 476.9H2101.4M2102.5 476.9H2104.8M2106.0 476.9H2108.3M2109.4 476.9H2111.7M2112.9 476.9H2115.2M2116.3 476.9H2118.6M2119.8 476.6H2122.1M2123.2 476.6H2125.5M2126.7 476.6H2129.0M2130.1 476.6H2132.4M2133.6 476.0H2135.9M2137.0 476.0H2139.3M2140.5 476.0H2142.8M2143.9 476.0H2146.2M2147.4 476.9H2147.4" fill="none" stroke="#5980b1" stroke-width="3.7" stroke-linecap="round"/><path d="M1321.2 479.4H2147.4" stroke="#a5a0d8" stroke-width="1.3" stroke-dasharray="14 3 22 5 9 2 31 4"/><path d="M1320.2 481.9H2147.4" stroke="#c9566f" stroke-width="3.2" stroke-dasharray="7 3 2 6 11 2 4 9 3 5"/><path d="M1320.2 480.2H2147.4" stroke="#e0607a" stroke-width="1.5" stroke-dasharray="3 9 6 22 2.5 14 7 31 4 18"/><path d="M1321.8 482.1H2147.4" stroke="#ddbe3b" stroke-width="3.6" stroke-linecap="butt" stroke-dasharray="4.5 1.4 3 1.2 4 2 6.5 1.6 4.5 1.3 10 2 8 2.6 3.5 1.6 14 1.5 5.5 1.3 9 2.2 17 1.6"/><path d="M1325.2 484.4H2147.4" stroke="#0c1424" stroke-width=".9"/><path d="M1341.3 481.7h2.6" stroke="#5a3d86" stroke-width="3" stroke-linecap="round"/><path d="M1359.3 482.9h2.6" stroke="#1f4e8c" stroke-width="3" stroke-linecap="round"/><path d="M1384.1 482.9h2.6" stroke="#5a3d86" stroke-width="3" stroke-linecap="round"/><path d="M1453.1 481.7h2.6" stroke="#1f4e8c" stroke-width="3" stroke-linecap="round"/><path d="M1511.1 482.1h2.6" stroke="#8f3bb8" stroke-width="3" stroke-linecap="round"/><path d="M1562.2 482.9h2.6" stroke="#8ab8ff" stroke-width="3" stroke-linecap="round"/><path d="M1640.8 482.1h2.6" stroke="#8ab8ff" stroke-width="3" stroke-linecap="round"/><path d="M1664.3 482.9h2.6" stroke="#8ab8ff" stroke-width="3" stroke-linecap="round"/><path d="M1680.9 482.9h2.6" stroke="#5a3d86" stroke-width="3" stroke-linecap="round"/><path d="M1697.4 481.7h2.6" stroke="#1f4e8c" stroke-width="3" stroke-linecap="round"/><path d="M1701.6 482.9h2.6" stroke="#37872d" stroke-width="3" stroke-linecap="round"/><path d="M1751.3 481.7h2.6" stroke="#1f4e8c" stroke-width="3" stroke-linecap="round"/><path d="M1763.7 482.1h2.6" stroke="#5a3d86" stroke-width="3" stroke-linecap="round"/><path d="M1796.8 482.1h2.6" stroke="#5a3d86" stroke-width="3" stroke-linecap="round"/><path d="M1818.9 482.9h2.6" stroke="#37872d" stroke-width="3" stroke-linecap="round"/><path d="M1863.1 481.7h2.6" stroke="#1f4e8c" stroke-width="3" stroke-linecap="round"/><path d="M1887.9 481.7h2.6" stroke="#1f4e8c" stroke-width="3" stroke-linecap="round"/><path d="M1896.2 482.9h2.6" stroke="#1f4e8c" stroke-width="3" stroke-linecap="round"/><path d="M1941.7 482.1h2.6" stroke="#1f4e8c" stroke-width="3" stroke-linecap="round"/><path d="M2014.9 482.9h2.6" stroke="#8ab8ff" stroke-width="3" stroke-linecap="round"/><path d="M2037.0 482.9h2.6" stroke="#ff780a" stroke-width="3" stroke-linecap="round"/><path d="M2086.7 482.1h2.6" stroke="#1f4e8c" stroke-width="3" stroke-linecap="round"/><path d="M2099.1 482.1h2.6" stroke="#8f3bb8" stroke-width="3" stroke-linecap="round"/><path d="M1410.3 482.9h2.6" stroke="#ff780a" stroke-width="3" stroke-linecap="round"/><path d="M1677.4 478.5h2.2" stroke="#9c0f02" stroke-width="3.4" stroke-linecap="round"/><path d="M2102.5 464.6V482.0" stroke="#b08a8a" stroke-width="1.4"/><path d="M2101.4 461.8h2.2" stroke="#6d1f62" stroke-width="3.4" stroke-linecap="round"/><path d="M2101.4 465.0h2.2" stroke="#f4d598" stroke-width="3.4" stroke-linecap="round"/></svg>
<svg class="b" style="left:2363.60px;top:305.50px;" width="6.6" height="4.4" viewBox="0 0 6.6 4.4"><path d="M1 1 L3.3 3.4 L5.6 1" fill="none" stroke="#6e9fff" stroke-width="1.2" stroke-linecap="round" stroke-linejoin="round"/></svg>
<div class="b" style="left:2155.75px;top:319.00px;width:352.55px;height:1.00px;background:#2f3137;"></div>
<div class="b" style="left:2163.75px;top:329.00px;width:14.20px;height:4.00px;background:#c15c17;border-radius:2.0px;"></div>
<div class="b" style="left:2155.75px;top:343.00px;width:352.55px;height:1.00px;background:#2f3137;"></div>
<div class="b" style="left:2163.75px;top:353.00px;width:14.20px;height:4.00px;background:#73bf69;border-radius:2.0px;"></div>
<div class="b" style="left:2155.75px;top:367.00px;width:352.55px;height:1.00px;background:#2f3137;"></div>
<div class="b" style="left:2163.75px;top:377.00px;width:14.20px;height:4.00px;background:#ca95e5;border-radius:2.0px;"></div>
<div class="b" style="left:2155.75px;top:390.00px;width:352.55px;height:1.00px;background:#2f3137;"></div>
<div class="b" style="left:2163.75px;top:401.00px;width:14.20px;height:4.00px;background:#6d1f62;border-radius:2.0px;"></div>
<div class="b" style="left:2155.75px;top:414.00px;width:352.55px;height:1.00px;background:#2f3137;"></div>
<div class="b" style="left:2163.75px;top:425.00px;width:14.20px;height:4.00px;background:#f4d598;border-radius:2.0px;"></div>
<div class="b" style="left:2155.75px;top:438.00px;width:352.55px;height:1.00px;background:#2f3137;"></div>
<div class="b" style="left:2163.75px;top:448.00px;width:14.20px;height:4.00px;background:#447ebc;border-radius:2.0px;"></div>
<div class="b" style="left:2155.75px;top:462.00px;width:352.55px;height:1.00px;background:#2f3137;"></div>
<div class="b" style="left:2163.75px;top:472.00px;width:14.20px;height:4.00px;background:#890f02;border-radius:2.0px;"></div>
<div class="b" style="left:2155.75px;top:486.00px;width:352.55px;height:1.00px;background:#2f3137;"></div>
<div class="b" style="left:2163.75px;top:496.00px;width:14.20px;height:4.00px;background:#8ab8ff;border-radius:2.0px;"></div>
<div class="b" style="left:2509.00px;top:296.00px;width:9.50px;height:208.00px;background:#2c2c2c;"></div>
<div class="b" style="left:2511.00px;top:308.20px;width:5.50px;height:89.30px;background:#9f9f9f;border-radius:2.8px;"></div>
<svg class="b" style="left:2509.00px;top:297.00px;" width="9.5" height="8" viewBox="0 0 9.5 8"><path d="M4.75 2.2L7.6 6H1.9z" fill="#a0a0a0" stroke="#a0a0a0" stroke-width=".8" stroke-linejoin="round"/></svg>
<svg class="b" style="left:2509.00px;top:494.50px;" width="9.5" height="8" viewBox="0 0 9.5 8"><path d="M4.75 6L7.6 2.2H1.9z" fill="#a0a0a0" stroke="#a0a0a0" stroke-width=".8" stroke-linejoin="round"/></svg>
<div class="b" style="left:14.00px;top:559.00px;width:1253.00px;height:258.00px;background:#181b1f;border:1px solid #2f3137;border-radius:2.0px;"></div>
<div class="t" style="top:568.00px;font-size:14.56px;line-height:16px;color:#ccccdc;-webkit-text-stroke:.42px #ccccdc;left:23.56px;letter-spacing:0.440px;">Top processes by Used memory</div>
<svg class="b" style="left:258.50px;top:568.00px;" width="16" height="16" viewBox="0 0 16 16"><circle cx="8" cy="8" r="6.3" fill="none" stroke="#9597a4" stroke-width="1.2"/><path d="M8 7.4v3.4" stroke="#9597a4" stroke-width="1.3" stroke-linecap="round"/><circle cx="8" cy="5.2" r=".8" fill="#9597a4"/></svg>
<svg class="b" style="left:1255.00px;top:805.00px;" width="11" height="11" viewBox="0 0 11 11"><path d="M10.6 1.4L1.2 10.8M10.6 6L5.8 10.8" stroke="#53555d" stroke-width="1.1" fill="none"/></svg>
<svg class="b" style="left:14.00px;top:559.00px" width="1253" height="258" viewBox="14 559 1253 258"><path d="M80.00 612.50H892.80M80.00 656.50H892.80M80.00 699.50H892.80M80.00 743.50H892.80M80.00 786.50H892.80M116.50 608.25V790.00M184.50 608.25V790.00M252.50 608.25V790.00M320.50 608.25V790.00M387.50 608.25V790.00M455.50 608.25V790.00M523.50 608.25V790.00M591.50 608.25V790.00M658.50 608.25V790.00M726.50 608.25V790.00M794.50 608.25V790.00M862.50 608.25V790.00" stroke="rgba(240,250,255,0.09)" stroke-width="1" fill="none"/><rect x="79.00" y="626.80" width="813.30" height="160.20" fill="#1f2f24"/><rect x="79.00" y="692.70" width="813.30" height="94.30" fill="#2b452f"/><rect x="79.00" y="732.50" width="813.30" height="54.50" fill="#58682d"/><rect x="79.00" y="755.70" width="813.30" height="31.30" fill="#6f7728"/><rect x="79.00" y="767.60" width="813.30" height="19.40" fill="#927a36"/><rect x="79.00" y="773.50" width="813.30" height="13.50" fill="#8a8178"/><rect x="79.00" y="777.40" width="813.30" height="9.60" fill="#a08a50"/><rect x="79.00" y="779.80" width="813.30" height="7.20" fill="#a88f94"/><rect x="79.00" y="783.80" width="813.30" height="3.20" fill="#8f9088"/><rect x="79.00" y="785.30" width="813.30" height="1.70" fill="#b8a060"/><defs><clipPath id="cf14_559"><rect x="79.00" y="626.80" width="813.30" height="160.20"/></clipPath></defs><g clip-path="url(#cf14_559)"><path d="M80.00 612.50H892.80M80.00 656.50H892.80M80.00 699.50H892.80M80.00 743.50H892.80M80.00 786.50H892.80M116.50 608.25V790.00M184.50 608.25V790.00M252.50 608.25V790.00M320.50 608.25V790.00M387.50 608.25V790.00M455.50 608.25V790.00M523.50 608.25V790.00M591.50 608.25V790.00M658.50 608.25V790.00M726.50 608.25V790.00M794.50 608.25V790.00M862.50 608.25V790.00" stroke="rgba(240,250,255,0.07)" stroke-width="1" fill="none"/></g><path d="M80.00 626.80H892.80" stroke="#348a2c" stroke-width="3.80" stroke-linecap="round"/><path d="M80.00 692.70H892.80" stroke="#5fb85a" stroke-width="3.80" stroke-linecap="round"/><path d="M80.00 732.50H892.80" stroke="#f5dc28" stroke-width="3.80" stroke-linecap="round"/><path d="M80.00 755.70H892.80" stroke="#dcc81c" stroke-width="3.80" stroke-linecap="round"/><path d="M80.00 767.60H892.80" stroke="#e0683f" stroke-width="3.80" stroke-linecap="round"/><path d="M227 625h9M324 625h13M599 624.6h10" stroke="#348a2c" stroke-width="2.40" fill="none" stroke-linecap="round" stroke-linejoin="round"/><path d="M345 628.6h26M380 628.6h20M410 628.6h12M440 628.6h30M482 628.6h6M518 628.6h3M556 628.6h6M590 628.6h4" stroke="#348a2c" stroke-width="2.20" fill="none" stroke-linecap="round" stroke-linejoin="round"/><path d="M81 694.6h36M291 694.6h34M468 694.6h52M524 694.8h46M552 693.4h18M655 694.6h6M688 694.6h7M843 694.6h17" stroke="#5fb85a" stroke-width="2.20" fill="none" stroke-linecap="round" stroke-linejoin="round"/><path d="M590 731.3h42M700 731.4h30" stroke="#f5dc28" stroke-width="2.40" fill="none" stroke-linecap="round" stroke-linejoin="round"/><circle cx="893.20" cy="767.60" r="1.90" fill="#f2495c"/><circle cx="893.20" cy="774.60" r="1.80" fill="#8f6fc0"/><circle cx="893.30" cy="779.60" r="1.70" fill="#c17fe0"/><circle cx="893.10" cy="781.60" r="1.60" fill="#5794f2"/></svg>
<svg class="b" style="left:1098.60px;top:609.50px;" width="6.6" height="4.4" viewBox="0 0 6.6 4.4"><path d="M1 1 L3.3 3.4 L5.6 1" fill="none" stroke="#6e9fff" stroke-width="1.2" stroke-linecap="round" stroke-linejoin="round"/></svg>
<div class="b" style="left:900.75px;top:623.00px;width:346.85px;height:1.00px;background:#2f3137;"></div>
<div class="b" style="left:908.75px;top:633.00px;width:14.20px;height:4.00px;background:#37872d;border-radius:2.0px;"></div>
<div class="b" style="left:900.75px;top:647.00px;width:346.85px;height:1.00px;background:#2f3137;"></div>
<div class="b" style="left:908.75px;top:657.00px;width:14.20px;height:4.00px;background:#73bf69;border-radius:2.0px;"></div>
<div class="b" style="left:900.75px;top:671.00px;width:346.85px;height:1.00px;background:#2f3137;"></div>
<div class="b" style="left:908.75px;top:681.00px;width:14.20px;height:4.00px;background:#fade2a;border-radius:2.0px;"></div>
<div class="b" style="left:900.75px;top:694.00px;width:346.85px;height:1.00px;background:#2f3137;"></div>
<div class="b" style="left:908.75px;top:705.00px;width:14.20px;height:4.00px;background:#f2cc0c;border-radius:2.0px;"></div>
<div class="b" style="left:900.75px;top:718.00px;width:346.85px;height:1.00px;background:#2f3137;"></div>
<div class="b" style="left:908.75px;top:729.00px;width:14.20px;height:4.00px;background:#f2495c;border-radius:2.0px;"></div>
<div class="b" style="left:900.75px;top:742.00px;width:346.85px;height:1.00px;background:#2f3137;"></div>
<div class="b" style="left:908.75px;top:752.00px;width:14.20px;height:4.00px;background:#7a64aa;border-radius:2.0px;"></div>
<div class="b" style="left:900.75px;top:766.00px;width:346.85px;height:1.00px;background:#2f3137;"></div>
<div class="b" style="left:908.75px;top:776.00px;width:14.20px;height:4.00px;background:#ff780a;border-radius:2.0px;"></div>
<div class="b" style="left:900.75px;top:790.00px;width:346.85px;height:1.00px;background:#2f3137;"></div>
<div class="b" style="left:908.75px;top:800.00px;width:14.20px;height:4.00px;background:#c17fe0;border-radius:2.0px;"></div>
<div class="b" style="left:1248.40px;top:600.00px;width:9.50px;height:208.00px;background:#2c2c2c;"></div>
<div class="b" style="left:1250.40px;top:612.50px;width:5.50px;height:144.50px;background:#9f9f9f;border-radius:2.8px;"></div>
<svg class="b" style="left:1248.40px;top:601.00px;" width="9.5" height="8" viewBox="0 0 9.5 8"><path d="M4.75 2.2L7.6 6H1.9z" fill="#a0a0a0" stroke="#a0a0a0" stroke-width=".8" stroke-linejoin="round"/></svg>
<svg class="b" style="left:1248.40px;top:798.50px;" width="9.5" height="8" viewBox="0 0 9.5 8"><path d="M4.75 6L7.6 2.2H1.9z" fill="#a0a0a0" stroke="#a0a0a0" stroke-width=".8" stroke-linejoin="round"/></svg>
<div class="b" style="left:1275.00px;top:559.00px;width:1253.00px;height:258.00px;background:#181b1f;border:1px solid #2f3137;border-radius:2.0px;"></div>
<div class="t" style="top:568.00px;font-size:14.56px;line-height:16px;color:#ccccdc;-webkit-text-stroke:.42px #ccccdc;left:1284.56px;letter-spacing:0.418px;">Top processes by Resident Memory</div>
<svg class="b" style="left:2516.00px;top:805.00px;" width="11" height="11" viewBox="0 0 11 11"><path d="M10.6 1.4L1.2 10.8M10.6 6L5.8 10.8" stroke="#53555d" stroke-width="1.1" fill="none"/></svg>
<svg class="b" style="left:1275.00px;top:559.00px" width="1253" height="258" viewBox="1275 559 1253 258"><path d="M1341.00 612.50H2154.00M1341.00 656.50H2154.00M1341.00 699.50H2154.00M1341.00 743.50H2154.00M1341.00 786.50H2154.00M1377.50 608.25V790.00M1445.50 608.25V790.00M1513.50 608.25V790.00M1581.50 608.25V790.00M1648.50 608.25V790.00M1716.50 608.25V790.00M1784.50 608.25V790.00M1852.50 608.25V790.00M1920.50 608.25V790.00M1987.50 608.25V790.00M2055.50 608.25V790.00M2123.50 608.25V790.00" stroke="rgba(240,250,255,0.09)" stroke-width="1" fill="none"/><rect x="1340.00" y="628.00" width="813.50" height="159.00" fill="#1f2f24"/><rect x="1340.00" y="692.70" width="813.50" height="94.30" fill="#2b452f"/><rect x="1340.00" y="733.00" width="813.50" height="54.00" fill="#58682d"/><rect x="1340.00" y="756.80" width="813.50" height="30.20" fill="#6f7728"/><rect x="1340.00" y="767.60" width="813.50" height="19.40" fill="#8f7a36"/><rect x="1340.00" y="777.00" width="813.50" height="10.00" fill="#8a8178"/><rect x="1340.00" y="780.60" width="813.50" height="6.40" fill="#a88f94"/><rect x="1340.00" y="783.80" width="813.50" height="3.20" fill="#8f9088"/><rect x="1340.00" y="785.30" width="813.50" height="1.70" fill="#b8a060"/><defs><clipPath id="cf1275_559"><rect x="1340.00" y="628.00" width="813.50" height="159.00"/></clipPath></defs><g clip-path="url(#cf1275_559)"><path d="M1341.00 612.50H2154.00M1341.00 656.50H2154.00M1341.00 699.50H2154.00M1341.00 743.50H2154.00M1341.00 786.50H2154.00M1377.50 608.25V790.00M1445.50 608.25V790.00M1513.50 608.25V790.00M1581.50 608.25V790.00M1648.50 608.25V790.00M1716.50 608.25V790.00M1784.50 608.25V790.00M1852.50 608.25V790.00M1920.50 608.25V790.00M1987.50 608.25V790.00M2055.50 608.25V790.00M2123.50 608.25V790.00" stroke="rgba(240,250,255,0.07)" stroke-width="1" fill="none"/></g><path d="M1341.00 628.00H2154.00" stroke="#348a2c" stroke-width="3.80" stroke-linecap="round"/><path d="M1341.00 692.70H2154.00" stroke="#5fb85a" stroke-width="3.80" stroke-linecap="round"/><path d="M1341.00 733.00H2154.00" stroke="#f5dc28" stroke-width="3.80" stroke-linecap="round"/><path d="M1341.00 756.80H2154.00" stroke="#dcc81c" stroke-width="3.80" stroke-linecap="round"/><path d="M1341.00 767.60H2154.00" stroke="#e0683f" stroke-width="3.80" stroke-linecap="round"/><path d="M1341.00 775.20H2154.00" stroke="#e08a28" stroke-width="3.40" stroke-linecap="round"/><path d="M1488 626.4h9M1585 626.4h13M1860 626.2h10M2135 626.4h8" stroke="#348a2c" stroke-width="2.40" fill="none" stroke-linecap="round" stroke-linejoin="round"/><path d="M1606 629.8h4M1616 629.8h8M1628 629.8h4M1643 629.8h6M1667 629.8h3M1701 629.8h3M1778 629.8h4M1820 629.8h3M1846 629.8h3" stroke="#348a2c" stroke-width="2.20" fill="none" stroke-linecap="round" stroke-linejoin="round"/><path d="M1342 694.6h36M1552 694.6h34M1729 694.6h52M1785 694.8h46M1813 693.4h18M1950 694.6h6M2105 694.6h17" stroke="#5fb85a" stroke-width="2.20" fill="none" stroke-linecap="round" stroke-linejoin="round"/><path d="M2108 731.6h22M2131 731h22" stroke="#f5dc28" stroke-width="2.60" fill="none" stroke-linecap="round" stroke-linejoin="round"/><circle cx="2154.40" cy="767.60" r="1.90" fill="#f2495c"/><circle cx="2154.40" cy="775.00" r="1.60" fill="#ff780a"/><circle cx="2154.50" cy="777.60" r="1.60" fill="#8f6fc0"/><circle cx="2154.50" cy="780.80" r="1.70" fill="#c17fe0"/><circle cx="2154.30" cy="782.60" r="1.60" fill="#5794f2"/></svg>
<svg class="b" style="left:2359.35px;top:609.50px;" width="6.6" height="4.4" viewBox="0 0 6.6 4.4"><path d="M1 1 L3.3 3.4 L5.6 1" fill="none" stroke="#6e9fff" stroke-width="1.2" stroke-linecap="round" stroke-linejoin="round"/></svg>
<div class="b" style="left:2162.00px;top:623.00px;width:346.30px;height:1.00px;background:#2f3137;"></div>
<div class="b" style="left:2169.75px;top:633.00px;width:14.20px;height:4.00px;background:#37872d;border-radius:2.0px;"></div>
<div class="b" style="left:2162.00px;top:647.00px;width:346.30px;height:1.00px;background:#2f3137;"></div>
<div class="b" style="left:2169.75px;top:657.00px;width:14.20px;height:4.00px;background:#73bf69;border-radius:2.0px;"></div>
<div class="b" style="left:2162.00px;top:671.00px;width:346.30px;height:1.00px;background:#2f3137;"></div>
<div class="b" style="left:2169.75px;top:681.00px;width:14.20px;height:4.00px;background:#fade2a;border-radius:2.0px;"></div>
<div class="b" style="left:2162.00px;top:694.00px;width:346.30px;height:1.00px;background:#2f3137;"></div>
<div class="b" style="left:2169.75px;top:705.00px;width:14.20px;height:4.00px;background:#f2cc0c;border-radius:2.0px;"></div>
<div class="b" style="left:2162.00px;top:718.00px;width:346.30px;height:1.00px;background:#2f3137;"></div>
<div class="b" style="left:2169.75px;top:729.00px;width:14.20px;height:4.00px;background:#f2495c;border-radius:2.0px;"></div>
<div class="b" style="left:2162.00px;top:742.00px;width:346.30px;height:1.00px;background:#2f3137;"></div>
<div class="b" style="left:2169.75px;top:752.00px;width:14.20px;height:4.00px;background:#ff780a;border-radius:2.0px;"></div>
<div class="b" style="left:2162.00px;top:766.00px;width:346.30px;height:1.00px;background:#2f3137;"></div>
<div class="b" style="left:2169.75px;top:776.00px;width:14.20px;height:4.00px;background:#7a64aa;border-radius:2.0px;"></div>
<div class="b" style="left:2162.00px;top:790.00px;width:346.30px;height:1.00px;background:#2f3137;"></div>
<div class="b" style="left:2169.75px;top:800.00px;width:14.20px;height:4.00px;background:#c17fe0;border-radius:2.0px;"></div>
<div class="b" style="left:2509.00px;top:600.00px;width:9.50px;height:208.00px;background:#2c2c2c;"></div>
<div class="b" style="left:2511.00px;top:612.50px;width:5.50px;height:144.50px;background:#9f9f9f;border-radius:2.8px;"></div>
<svg class="b" style="left:2509.00px;top:601.00px;" width="9.5" height="8" viewBox="0 0 9.5 8"><path d="M4.75 2.2L7.6 6H1.9z" fill="#a0a0a0" stroke="#a0a0a0" stroke-width=".8" stroke-linejoin="round"/></svg>
<svg class="b" style="left:2509.00px;top:798.50px;" width="9.5" height="8" viewBox="0 0 9.5 8"><path d="M4.75 6L7.6 2.2H1.9z" fill="#a0a0a0" stroke="#a0a0a0" stroke-width=".8" stroke-linejoin="round"/></svg>
<div class="b" style="left:14.00px;top:825.00px;width:1253.00px;height:258.00px;background:#181b1f;border:1px solid #2f3137;border-radius:2.0px;"></div>
<div class="t" style="top:834.00px;font-size:14.56px;line-height:16px;color:#ccccdc;-webkit-text-stroke:.42px #ccccdc;left:23.56px;letter-spacing:0.478px;">Top processes by Virtual memory</div>
<svg class="b" style="left:1255.00px;top:1071.00px;" width="11" height="11" viewBox="0 0 11 11"><path d="M10.6 1.4L1.2 10.8M10.6 6L5.8 10.8" stroke="#53555d" stroke-width="1.1" fill="none"/></svg>
<svg class="b" style="left:14.00px;top:825.00px" width="1253" height="258" viewBox="14 825 1253 258"><path d="M69.80 899.50H895.90M69.80 950.50H895.90M69.80 1001.50H895.90M69.80 1053.50H895.90M107.50 874.25V1056.00M176.50 874.25V1056.00M245.50 874.25V1056.00M314.50 874.25V1056.00M383.50 874.25V1056.00M452.50 874.25V1056.00M521.50 874.25V1056.00M590.50 874.25V1056.00M658.50 874.25V1056.00M727.50 874.25V1056.00M796.50 874.25V1056.00M865.50 874.25V1056.00" stroke="rgba(240,250,255,0.09)" stroke-width="1" fill="none"/><rect x="68.80" y="892.80" width="826.60" height="160.20" fill="#2d394b"/><rect x="68.80" y="949.70" width="826.60" height="103.30" fill="#553f50"/><rect x="68.80" y="1001.60" width="826.60" height="51.40" fill="#786048"/><rect x="68.80" y="1036.70" width="826.60" height="16.30" fill="#a08c60"/><rect x="68.80" y="1044.60" width="826.60" height="8.40" fill="#958a65"/><defs><clipPath id="cf14_825"><rect x="68.80" y="892.80" width="826.60" height="160.20"/></clipPath></defs><g clip-path="url(#cf14_825)"><path d="M69.80 899.50H895.90M69.80 950.50H895.90M69.80 1001.50H895.90M69.80 1053.50H895.90M107.50 874.25V1056.00M176.50 874.25V1056.00M245.50 874.25V1056.00M314.50 874.25V1056.00M383.50 874.25V1056.00M452.50 874.25V1056.00M521.50 874.25V1056.00M590.50 874.25V1056.00M658.50 874.25V1056.00M727.50 874.25V1056.00M796.50 874.25V1056.00M865.50 874.25V1056.00" stroke="rgba(240,250,255,0.07)" stroke-width="1" fill="none"/></g><path d="M69.80 892.80H895.90" stroke="#88b5fa" stroke-width="4.00" stroke-linecap="round"/><path d="M69.80 949.70H895.90" stroke="#ec4760" stroke-width="4.00" stroke-linecap="round"/><path d="M69.80 1001.60H895.90" stroke="#fbdb27" stroke-width="4.00" stroke-linecap="round"/><path d="M69.80 1030.60H895.90" stroke="#fb8518" stroke-width="4.20" stroke-linecap="round"/><path d="M69.80 1034.70H895.90" stroke="#78a3d0" stroke-width="4.00" stroke-linecap="round"/><path d="M69.80 1040.70H895.90" stroke="#e8c040" stroke-width="1.00" stroke-linecap="round"/><path d="M69.80 1042.90H895.90" stroke="#5c9a2c" stroke-width="3.80" stroke-linecap="round"/><circle cx="896.60" cy="1034.80" r="1.90" fill="#5794f2"/><circle cx="896.60" cy="1042.60" r="1.90" fill="#37872d"/><circle cx="896.40" cy="1045.40" r="1.30" fill="#8f6fc0"/></svg>
<svg class="b" style="left:1102.60px;top:875.50px;" width="6.6" height="4.4" viewBox="0 0 6.6 4.4"><path d="M1 1 L3.3 3.4 L5.6 1" fill="none" stroke="#6e9fff" stroke-width="1.2" stroke-linecap="round" stroke-linejoin="round"/></svg>
<div class="b" style="left:905.75px;top:889.00px;width:341.85px;height:1.00px;background:#2f3137;"></div>
<div class="b" style="left:913.75px;top:899.00px;width:14.20px;height:4.00px;background:#8ab8ff;border-radius:2.0px;"></div>
<div class="b" style="left:905.75px;top:913.00px;width:341.85px;height:1.00px;background:#2f3137;"></div>
<div class="b" style="left:913.75px;top:923.00px;width:14.20px;height:4.00px;background:#f2495c;border-radius:2.0px;"></div>
<div class="b" style="left:905.75px;top:937.00px;width:341.85px;height:1.00px;background:#2f3137;"></div>
<div class="b" style="left:913.75px;top:947.00px;width:14.20px;height:4.00px;background:#fade2a;border-radius:2.0px;"></div>
<div class="b" style="left:905.75px;top:960.00px;width:341.85px;height:1.00px;background:#2f3137;"></div>
<div class="b" style="left:913.75px;top:971.00px;width:14.20px;height:4.00px;background:#ff780a;border-radius:2.0px;"></div>
<div class="b" style="left:905.75px;top:984.00px;width:341.85px;height:1.00px;background:#2f3137;"></div>
<div class="b" style="left:913.75px;top:995.00px;width:14.20px;height:4.00px;background:#73bf69;border-radius:2.0px;"></div>
<div class="b" style="left:905.75px;top:1008.00px;width:341.85px;height:1.00px;background:#2f3137;"></div>
<div class="b" style="left:913.75px;top:1018.00px;width:14.20px;height:4.00px;background:#5794f2;border-radius:2.0px;"></div>
<div class="b" style="left:905.75px;top:1032.00px;width:341.85px;height:1.00px;background:#2f3137;"></div>
<div class="b" style="left:913.75px;top:1042.00px;width:14.20px;height:4.00px;background:#f2cc0c;border-radius:2.0px;"></div>
<div class="b" style="left:905.75px;top:1056.00px;width:341.85px;height:1.00px;background:#2f3137;"></div>
<div class="b" style="left:913.75px;top:1066.00px;width:14.20px;height:4.00px;background:#37872d;border-radius:2.0px;"></div>
<div class="b" style="left:1248.40px;top:866.00px;width:9.50px;height:208.00px;background:#2c2c2c;"></div>
<div class="b" style="left:1250.40px;top:878.30px;width:5.50px;height:144.70px;background:#9f9f9f;border-radius:2.8px;"></div>
<svg class="b" style="left:1248.40px;top:867.00px;" width="9.5" height="8" viewBox="0 0 9.5 8"><path d="M4.75 2.2L7.6 6H1.9z" fill="#a0a0a0" stroke="#a0a0a0" stroke-width=".8" stroke-linejoin="round"/></svg>
<svg class="b" style="left:1248.40px;top:1064.50px;" width="9.5" height="8" viewBox="0 0 9.5 8"><path d="M4.75 6L7.6 2.2H1.9z" fill="#a0a0a0" stroke="#a0a0a0" stroke-width=".8" stroke-linejoin="round"/></svg>
<div class="b" style="left:1275.00px;top:825.00px;width:1253.00px;height:258.00px;background:#181b1f;border:1px solid #2f3137;border-radius:2.0px;"></div>
<div class="t" style="top:834.00px;font-size:14.56px;line-height:16px;color:#ccccdc;-webkit-text-stroke:.42px #ccccdc;left:1284.56px;letter-spacing:0.472px;">Top processes by Swapped Memory</div>
<svg class="b" style="left:2516.00px;top:1071.00px;" width="11" height="11" viewBox="0 0 11 11"><path d="M10.6 1.4L1.2 10.8M10.6 6L5.8 10.8" stroke="#53555d" stroke-width="1.1" fill="none"/></svg>
<svg class="b" style="left:1275.00px;top:825.00px" width="1253" height="258" viewBox="1275 825 1253 258"><path d="M1333.00 874.50H2148.20M1333.00 910.50H2148.20M1333.00 946.50H2148.20M1333.00 981.50H2148.20M1333.00 1017.50H2148.20M1333.00 1053.50H2148.20M1369.50 874.25V1056.00M1437.50 874.25V1056.00M1505.50 874.25V1056.00M1573.50 874.25V1056.00M1641.50 874.25V1056.00M1709.50 874.25V1056.00M1777.50 874.25V1056.00M1845.50 874.25V1056.00M1913.50 874.25V1056.00M1981.50 874.25V1056.00M2049.50 874.25V1056.00M2117.50 874.25V1056.00" stroke="rgba(240,250,255,0.09)" stroke-width="1" fill="none"/><rect x="1332.00" y="892.80" width="815.70" height="160.20" fill="#44262b"/><rect x="1332.00" y="1006.00" width="815.70" height="47.00" fill="#754c4b"/><rect x="1332.00" y="1025.40" width="815.70" height="27.60" fill="#a8a070"/><rect x="1332.00" y="1029.00" width="815.70" height="24.00" fill="#7d6670"/><rect x="1332.00" y="1043.50" width="815.70" height="9.50" fill="#a08860"/><rect x="1332.00" y="1049.60" width="815.70" height="3.40" fill="#a09858"/><defs><clipPath id="cf1275_825"><rect x="1332.00" y="892.80" width="815.70" height="160.20"/></clipPath></defs><g clip-path="url(#cf1275_825)"><path d="M1333.00 874.50H2148.20M1333.00 910.50H2148.20M1333.00 946.50H2148.20M1333.00 981.50H2148.20M1333.00 1017.50H2148.20M1333.00 1053.50H2148.20M1369.50 874.25V1056.00M1437.50 874.25V1056.00M1505.50 874.25V1056.00M1573.50 874.25V1056.00M1641.50 874.25V1056.00M1709.50 874.25V1056.00M1777.50 874.25V1056.00M1845.50 874.25V1056.00M1913.50 874.25V1056.00M1981.50 874.25V1056.00M2049.50 874.25V1056.00M2117.50 874.25V1056.00" stroke="rgba(240,250,255,0.07)" stroke-width="1" fill="none"/></g><path d="M1333.00 892.80H2148.20" stroke="#f2475c" stroke-width="4.00" stroke-linecap="round"/><path d="M1333.00 1002.40H2148.20" stroke="#f5b020" stroke-width="3.20" stroke-linecap="round"/><path d="M1333.00 1006.00H2148.20" stroke="#b574d8" stroke-width="4.00" stroke-linecap="round"/><path d="M1333.00 1025.40H2148.20" stroke="#a8a070" stroke-width="3.20" stroke-linecap="round"/><path d="M1333.00 1029.00H2148.20" stroke="#6a90ee" stroke-width="3.90" stroke-linecap="round"/><path d="M1333.00 1040.20H2148.20" stroke="#6a55b0" stroke-width="2.80" stroke-linecap="round"/><path d="M1333.00 1043.50H2148.20" stroke="#fbdc28" stroke-width="3.90" stroke-linecap="round"/><path d="M1333.00 1049.60H2148.20" stroke="#5a9a2c" stroke-width="3.60" stroke-linecap="round"/><circle cx="2148.90" cy="1025.20" r="1.80" fill="#73bf69"/><circle cx="2148.90" cy="1040.20" r="1.60" fill="#8f6fc0"/><circle cx="2148.90" cy="1049.60" r="1.80" fill="#37872d"/></svg>
<svg class="b" style="left:2360.10px;top:875.50px;" width="6.6" height="4.4" viewBox="0 0 6.6 4.4"><path d="M1 1 L3.3 3.4 L5.6 1" fill="none" stroke="#6e9fff" stroke-width="1.2" stroke-linecap="round" stroke-linejoin="round"/></svg>
<div class="b" style="left:2157.75px;top:889.00px;width:350.55px;height:1.00px;background:#2f3137;"></div>
<div class="b" style="left:2165.75px;top:899.00px;width:14.20px;height:4.00px;background:#f2495c;border-radius:2.0px;"></div>
<div class="b" style="left:2157.75px;top:913.00px;width:350.55px;height:1.00px;background:#2f3137;"></div>
<div class="b" style="left:2165.75px;top:923.00px;width:14.20px;height:4.00px;background:#f2cc0c;border-radius:2.0px;"></div>
<div class="b" style="left:2157.75px;top:937.00px;width:350.55px;height:1.00px;background:#2f3137;"></div>
<div class="b" style="left:2165.75px;top:947.00px;width:14.20px;height:4.00px;background:#c17fe0;border-radius:2.0px;"></div>
<div class="b" style="left:2157.75px;top:960.00px;width:350.55px;height:1.00px;background:#2f3137;"></div>
<div class="b" style="left:2165.75px;top:971.00px;width:14.20px;height:4.00px;background:#73bf69;border-radius:2.0px;"></div>
<div class="b" style="left:2157.75px;top:984.00px;width:350.55px;height:1.00px;background:#2f3137;"></div>
<div class="b" style="left:2165.75px;top:995.00px;width:14.20px;height:4.00px;background:#5794f2;border-radius:2.0px;"></div>
<div class="b" style="left:2157.75px;top:1008.00px;width:350.55px;height:1.00px;background:#2f3137;"></div>
<div class="b" style="left:2165.75px;top:1018.00px;width:14.20px;height:4.00px;background:#8ab8ff;border-radius:2.0px;"></div>
<div class="b" style="left:2157.75px;top:1032.00px;width:350.55px;height:1.00px;background:#2f3137;"></div>
<div class="b" style="left:2165.75px;top:1042.00px;width:14.20px;height:4.00px;background:#ff780a;border-radius:2.0px;"></div>
<div class="b" style="left:2157.75px;top:1056.00px;width:350.55px;height:1.00px;background:#2f3137;"></div>
<div class="b" style="left:2165.75px;top:1066.00px;width:14.20px;height:4.00px;background:#7a64aa;border-radius:2.0px;"></div>
<div class="b" style="left:2509.00px;top:866.00px;width:9.50px;height:208.00px;background:#2c2c2c;"></div>
<div class="b" style="left:2511.00px;top:878.30px;width:5.50px;height:144.70px;background:#9f9f9f;border-radius:2.8px;"></div>
<svg class="b" style="left:2509.00px;top:867.00px;" width="9.5" height="8" viewBox="0 0 9.5 8"><path d="M4.75 2.2L7.6 6H1.9z" fill="#a0a0a0" stroke="#a0a0a0" stroke-width=".8" stroke-linejoin="round"/></svg>
<svg class="b" style="left:2509.00px;top:1064.50px;" width="9.5" height="8" viewBox="0 0 9.5 8"><path d="M4.75 6L7.6 2.2H1.9z" fill="#a0a0a0" stroke="#a0a0a0" stroke-width=".8" stroke-linejoin="round"/></svg>
<svg class="b" style="left:23.80px;top:229.20px;" width="8.4" height="5.4" viewBox="0 0 8.4 5.4"><path d="M1 1 L4.2 4.4 L7.4 1" fill="none" stroke="#ccccdc" stroke-width="1.4" stroke-linecap="round" stroke-linejoin="round"/></svg>
<div class="t" style="top:222.00px;font-size:16.64px;line-height:19px;color:#ccccdc;-webkit-text-stroke:.42px #ccccdc;left:43.70px;letter-spacing:0.257px;">Process CPU Usage</div>
<svg class="b" style="left:23.80px;top:533.50px;" width="8.4" height="5.4" viewBox="0 0 8.4 5.4"><path d="M1 1 L4.2 4.4 L7.4 1" fill="none" stroke="#ccccdc" stroke-width="1.4" stroke-linecap="round" stroke-linejoin="round"/></svg>
<div class="t" style="top:526.00px;font-size:16.64px;line-height:19px;color:#ccccdc;-webkit-text-stroke:.42px #ccccdc;left:43.70px;letter-spacing:0.472px;">Process Memory Usage</div>
<svg class="b" style="left:25.10px;top:1101.60px;" width="5.4" height="8.4" viewBox="0 0 5.4 8.4"><path d="M1 1 L4.4 4.2 L1 7.4" fill="none" stroke="#ccccdc" stroke-width="1.4" stroke-linecap="round" stroke-linejoin="round"/></svg>
<div class="t" style="top:1096.00px;font-size:16.64px;line-height:19px;color:#ccccdc;-webkit-text-stroke:.42px #ccccdc;left:43.70px;letter-spacing:0.285px;">Process Disk IO Usage</div>
<div class="t" style="top:1099.00px;font-size:12.48px;line-height:14px;color:#9597a4;-webkit-text-stroke:.16px #9597a4;font-style:italic;left:243.42px;letter-spacing:0.342px;">(2 panels)</div>
<div class="b" style="left:14.00px;top:1120.00px;width:2513.00px;height:1.00px;background:#2f3137;"></div>
<svg class="b" style="left:2507.00px;top:1100.00px;" width="8" height="12.4" viewBox="0 0 8 12.4"><g fill="#9597a4"><circle cx="1.6" cy="1.6" r="1.05"/><circle cx="1.6" cy="6.2" r="1.05"/><circle cx="1.6" cy="10.8" r="1.05"/><circle cx="6.4" cy="1.6" r="1.05"/><circle cx="6.4" cy="6.2" r="1.05"/><circle cx="6.4" cy="10.8" r="1.05"/></g></svg>
<svg class="b" style="left:25.10px;top:1139.60px;" width="5.4" height="8.4" viewBox="0 0 5.4 8.4"><path d="M1 1 L4.4 4.2 L1 7.4" fill="none" stroke="#ccccdc" stroke-width="1.4" stroke-linecap="round" stroke-linejoin="round"/></svg>
<div class="t" style="top:1134.00px;font-size:16.64px;line-height:19px;color:#ccccdc;-webkit-text-stroke:.42px #ccccdc;left:43.70px;letter-spacing:0.405px;">Process and Thread Counts</div>
<div class="t" style="top:1137.00px;font-size:12.48px;line-height:14px;color:#9597a4;-webkit-text-stroke:.16px #9597a4;font-style:italic;left:282.42px;letter-spacing:0.342px;">(2 panels)</div>
<div class="b" style="left:14.00px;top:1158.00px;width:2513.00px;height:1.00px;background:#2f3137;"></div>
<svg class="b" style="left:2507.00px;top:1138.00px;" width="8" height="12.4" viewBox="0 0 8 12.4"><g fill="#9597a4"><circle cx="1.6" cy="1.6" r="1.05"/><circle cx="1.6" cy="6.2" r="1.05"/><circle cx="1.6" cy="10.8" r="1.05"/><circle cx="6.4" cy="1.6" r="1.05"/><circle cx="6.4" cy="6.2" r="1.05"/><circle cx="6.4" cy="10.8" r="1.05"/></g></svg>
<svg class="b" style="left:25.10px;top:1177.60px;" width="5.4" height="8.4" viewBox="0 0 5.4 8.4"><path d="M1 1 L4.4 4.2 L1 7.4" fill="none" stroke="#ccccdc" stroke-width="1.4" stroke-linecap="round" stroke-linejoin="round"/></svg>
<div class="t" style="top:1172.00px;font-size:16.64px;line-height:19px;color:#ccccdc;-webkit-text-stroke:.42px #ccccdc;left:43.70px;letter-spacing:0.488px;">Process Context Switches</div>
<div class="t" style="top:1175.00px;font-size:12.48px;line-height:14px;color:#9597a4;-webkit-text-stroke:.16px #9597a4;font-style:italic;left:270.42px;letter-spacing:0.342px;">(2 panels)</div>
<div class="b" style="left:14.00px;top:1196.00px;width:2513.00px;height:1.00px;background:#2f3137;"></div>
<svg class="b" style="left:2507.00px;top:1176.00px;" width="8" height="12.4" viewBox="0 0 8 12.4"><g fill="#9597a4"><circle cx="1.6" cy="1.6" r="1.05"/><circle cx="1.6" cy="6.2" r="1.05"/><circle cx="1.6" cy="10.8" r="1.05"/><circle cx="6.4" cy="1.6" r="1.05"/><circle cx="6.4" cy="6.2" r="1.05"/><circle cx="6.4" cy="10.8" r="1.05"/></g></svg>
<svg class="b" style="left:25.10px;top:1215.60px;" width="5.4" height="8.4" viewBox="0 0 5.4 8.4"><path d="M1 1 L4.4 4.2 L1 7.4" fill="none" stroke="#ccccdc" stroke-width="1.4" stroke-linecap="round" stroke-linejoin="round"/></svg>
<div class="t" style="top:1210.00px;font-size:16.64px;line-height:19px;color:#ccccdc;-webkit-text-stroke:.42px #ccccdc;left:43.70px;letter-spacing:0.445px;">Process File Descriptors</div>
<div class="t" style="top:1213.00px;font-size:12.48px;line-height:14px;color:#9597a4;-webkit-text-stroke:.16px #9597a4;font-style:italic;left:256.42px;letter-spacing:0.342px;">(2 panels)</div>
<div class="b" style="left:14.00px;top:1234.00px;width:2513.00px;height:1.00px;background:#2f3137;"></div>
<svg class="b" style="left:2507.00px;top:1214.00px;" width="8" height="12.4" viewBox="0 0 8 12.4"><g fill="#9597a4"><circle cx="1.6" cy="1.6" r="1.05"/><circle cx="1.6" cy="6.2" r="1.05"/><circle cx="1.6" cy="10.8" r="1.05"/><circle cx="6.4" cy="1.6" r="1.05"/><circle cx="6.4" cy="6.2" r="1.05"/><circle cx="6.4" cy="10.8" r="1.05"/></g></svg>
<svg class="b" style="left:25.10px;top:1253.60px;" width="5.4" height="8.4" viewBox="0 0 5.4 8.4"><path d="M1 1 L4.4 4.2 L1 7.4" fill="none" stroke="#ccccdc" stroke-width="1.4" stroke-linecap="round" stroke-linejoin="round"/></svg>
<div class="t" style="top:1248.00px;font-size:16.64px;line-height:19px;color:#ccccdc;-webkit-text-stroke:.42px #ccccdc;left:43.70px;letter-spacing:0.285px;">Process Page Faults</div>
<div class="t" style="top:1251.00px;font-size:12.48px;line-height:14px;color:#9597a4;-webkit-text-stroke:.16px #9597a4;font-style:italic;left:224.42px;letter-spacing:0.342px;">(2 panels)</div>
<div class="b" style="left:14.00px;top:1272.00px;width:2513.00px;height:1.00px;background:#2f3137;"></div>
<svg class="b" style="left:2507.00px;top:1252.00px;" width="8" height="12.4" viewBox="0 0 8 12.4"><g fill="#9597a4"><circle cx="1.6" cy="1.6" r="1.05"/><circle cx="1.6" cy="6.2" r="1.05"/><circle cx="1.6" cy="10.8" r="1.05"/><circle cx="6.4" cy="1.6" r="1.05"/><circle cx="6.4" cy="6.2" r="1.05"/><circle cx="6.4" cy="10.8" r="1.05"/></g></svg>
<div class="b" style="left:0;top:0;width:2557px;height:1267px;will-change:transform">
<div class="t" style="top:150.00px;font-size:29.12px;line-height:32px;color:#5a98ba;font-style:italic;left:1019.12px;letter-spacing:0.332px;-webkit-text-stroke:.25px #5a98ba;">Data for</div>
<div class="t" style="top:150.00px;font-size:29.12px;line-height:32px;color:#f58b1c;font-style:italic;left:1133.62px;letter-spacing:-1.322px;-webkit-text-stroke:.25px #f58b1c;">192.168.1.73</div>
<div class="t" style="top:150.00px;font-size:29.12px;line-height:32px;color:#5a98ba;font-style:italic;left:1294.12px;letter-spacing:1.055px;-webkit-text-stroke:.25px #5a98ba;">with</div>
<div class="t" style="top:150.00px;font-size:29.12px;line-height:32px;color:#f58b1c;font-style:italic;left:1357.12px;letter-spacing:0.727px;-webkit-text-stroke:.25px #f58b1c;">5s</div>
<div class="t" style="top:150.00px;font-size:29.12px;line-height:32px;color:#5a98ba;font-style:italic;left:1395.22px;letter-spacing:0.548px;-webkit-text-stroke:.25px #5a98ba;">resolution</div>
<div class="t" style="top:306.00px;font-size:12.48px;line-height:14px;color:#ccccdc;-webkit-text-stroke:.16px #ccccdc;right:2501.62px;text-align:right;letter-spacing:0.492px;">40%</div>
<div class="t" style="top:348.00px;font-size:12.48px;line-height:14px;color:#ccccdc;-webkit-text-stroke:.16px #ccccdc;right:2501.70px;text-align:right;letter-spacing:0.410px;">30%</div>
<div class="t" style="top:391.00px;font-size:12.48px;line-height:14px;color:#ccccdc;-webkit-text-stroke:.16px #ccccdc;right:2501.79px;text-align:right;letter-spacing:0.328px;">20%</div>
<div class="t" style="top:433.00px;font-size:12.48px;line-height:14px;color:#ccccdc;-webkit-text-stroke:.16px #ccccdc;right:2502.52px;text-align:right;letter-spacing:-0.410px;">10%</div>
<div class="t" style="top:476.00px;font-size:12.48px;line-height:14px;color:#ccccdc;-webkit-text-stroke:.16px #ccccdc;right:2501.84px;text-align:right;letter-spacing:0.270px;">0%</div>
<div class="t" style="top:491.00px;font-size:12.48px;line-height:14px;color:#ccccdc;-webkit-text-stroke:.16px #ccccdc;left:-202.75px;width:600px;text-align:center;letter-spacing:0.091px;">10:20</div>
<div class="t" style="top:491.00px;font-size:12.48px;line-height:14px;color:#ccccdc;-webkit-text-stroke:.16px #ccccdc;left:-132.79px;width:600px;text-align:center;letter-spacing:0.020px;">10:25</div>
<div class="t" style="top:491.00px;font-size:12.48px;line-height:14px;color:#ccccdc;-webkit-text-stroke:.16px #ccccdc;left:-63.73px;width:600px;text-align:center;letter-spacing:0.140px;">10:30</div>
<div class="t" style="top:491.00px;font-size:12.48px;line-height:14px;color:#ccccdc;-webkit-text-stroke:.16px #ccccdc;left:5.23px;width:600px;text-align:center;letter-spacing:0.069px;">10:35</div>
<div class="t" style="top:491.00px;font-size:12.48px;line-height:14px;color:#ccccdc;-webkit-text-stroke:.16px #ccccdc;left:75.29px;width:600px;text-align:center;letter-spacing:0.190px;">10:40</div>
<div class="t" style="top:491.00px;font-size:12.48px;line-height:14px;color:#ccccdc;-webkit-text-stroke:.16px #ccccdc;left:144.26px;width:600px;text-align:center;letter-spacing:0.118px;">10:45</div>
<div class="t" style="top:491.00px;font-size:12.48px;line-height:14px;color:#ccccdc;-webkit-text-stroke:.16px #ccccdc;left:214.25px;width:600px;text-align:center;letter-spacing:0.104px;">10:50</div>
<div class="t" style="top:491.00px;font-size:12.48px;line-height:14px;color:#ccccdc;-webkit-text-stroke:.16px #ccccdc;left:283.22px;width:600px;text-align:center;letter-spacing:0.032px;">10:55</div>
<div class="t" style="top:491.00px;font-size:12.48px;line-height:14px;color:#ccccdc;-webkit-text-stroke:.16px #ccccdc;left:352.12px;width:600px;text-align:center;letter-spacing:-0.167px;">11:00</div>
<div class="t" style="top:491.00px;font-size:12.48px;line-height:14px;color:#ccccdc;-webkit-text-stroke:.16px #ccccdc;left:422.08px;width:600px;text-align:center;letter-spacing:-0.239px;">11:05</div>
<div class="t" style="top:491.00px;font-size:12.48px;line-height:14px;color:#ccccdc;-webkit-text-stroke:.16px #ccccdc;left:490.85px;width:600px;text-align:center;letter-spacing:-0.694px;">11:10</div>
<div class="t" style="top:491.00px;font-size:12.48px;line-height:14px;color:#ccccdc;-webkit-text-stroke:.16px #ccccdc;left:560.82px;width:600px;text-align:center;letter-spacing:-0.765px;">11:15</div>
<div class="t" style="top:300.00px;font-size:12.48px;line-height:14px;color:#6e9fff;-webkit-text-stroke:.42px #6e9fff;left:931.12px;letter-spacing:0.464px;">Name</div>
<div class="t" style="top:300.00px;font-size:12.48px;line-height:14px;color:#6e9fff;-webkit-text-stroke:.42px #6e9fff;left:1074.12px;letter-spacing:0.542px;">Mean</div>
<div class="t" style="top:300.00px;font-size:12.48px;line-height:14px;color:#6e9fff;-webkit-text-stroke:.42px #6e9fff;right:1378.61px;text-align:right;letter-spacing:0.703px;">Max</div>
<div class="t" style="top:300.00px;font-size:12.48px;line-height:14px;color:#6e9fff;-webkit-text-stroke:.42px #6e9fff;right:1318.45px;text-align:right;letter-spacing:0.860px;">Min</div>
<div class="t" style="top:324.00px;font-size:12.48px;line-height:14px;color:#ccccdc;-webkit-text-stroke:.16px #ccccdc;left:931.12px;letter-spacing:0.643px;">python3</div>
<div class="t" style="top:324.00px;font-size:12.48px;line-height:14px;color:#ccccdc;-webkit-text-stroke:.16px #ccccdc;right:1442.01px;text-align:right;letter-spacing:0.603px;">22.4%</div>
<div class="t" style="top:324.00px;font-size:12.48px;line-height:14px;color:#ccccdc;-webkit-text-stroke:.16px #ccccdc;right:1379.55px;text-align:right;letter-spacing:0.063px;">37.7%</div>
<div class="t" style="top:324.00px;font-size:12.48px;line-height:14px;color:#ccccdc;-webkit-text-stroke:.16px #ccccdc;right:1317.43px;text-align:right;letter-spacing:-0.017px;">19.7%</div>
<div class="t" style="top:348.00px;font-size:12.48px;line-height:14px;color:#ccccdc;-webkit-text-stroke:.16px #ccccdc;left:931.12px;letter-spacing:0.503px;">alloy</div>
<div class="t" style="top:348.00px;font-size:12.48px;line-height:14px;color:#ccccdc;-webkit-text-stroke:.16px #ccccdc;right:1442.61px;text-align:right;letter-spacing:0.003px;">13.3%</div>
<div class="t" style="top:348.00px;font-size:12.48px;line-height:14px;color:#ccccdc;-webkit-text-stroke:.16px #ccccdc;right:1379.55px;text-align:right;letter-spacing:0.063px;">14.3%</div>
<div class="t" style="top:348.00px;font-size:12.48px;line-height:14px;color:#ccccdc;-webkit-text-stroke:.16px #ccccdc;right:1317.35px;text-align:right;letter-spacing:0.063px;">12.3%</div>
<div class="t" style="top:372.00px;font-size:12.48px;line-height:14px;color:#ccccdc;-webkit-text-stroke:.16px #ccccdc;left:931.12px;letter-spacing:0.736px;">go2rtc</div>
<div class="t" style="top:372.00px;font-size:12.48px;line-height:14px;color:#ccccdc;-webkit-text-stroke:.16px #ccccdc;right:1442.25px;text-align:right;letter-spacing:0.363px;">5.72%</div>
<div class="t" style="top:372.00px;font-size:12.48px;line-height:14px;color:#ccccdc;-webkit-text-stroke:.16px #ccccdc;right:1379.01px;text-align:right;letter-spacing:0.603px;">6.93%</div>
<div class="t" style="top:372.00px;font-size:12.48px;line-height:14px;color:#ccccdc;-webkit-text-stroke:.16px #ccccdc;right:1316.91px;text-align:right;letter-spacing:0.503px;">5.20%</div>
<div class="t" style="top:395.00px;font-size:12.48px;line-height:14px;color:#ccccdc;-webkit-text-stroke:.16px #ccccdc;left:931.12px;letter-spacing:0.484px;">systemd-hostnam</div>
<div class="t" style="top:395.00px;font-size:12.48px;line-height:14px;color:#ccccdc;-webkit-text-stroke:.16px #ccccdc;right:1442.25px;text-align:right;letter-spacing:0.363px;">5.07%</div>
<div class="t" style="top:395.00px;font-size:12.48px;line-height:14px;color:#ccccdc;-webkit-text-stroke:.16px #ccccdc;right:1379.25px;text-align:right;letter-spacing:0.363px;">5.07%</div>
<div class="t" style="top:395.00px;font-size:12.48px;line-height:14px;color:#ccccdc;-webkit-text-stroke:.16px #ccccdc;right:1317.05px;text-align:right;letter-spacing:0.363px;">5.07%</div>
<div class="t" style="top:419.00px;font-size:12.48px;line-height:14px;color:#ccccdc;-webkit-text-stroke:.16px #ccccdc;left:931.12px;letter-spacing:0.514px;">systemd-timedat</div>
<div class="t" style="top:419.00px;font-size:12.48px;line-height:14px;color:#ccccdc;-webkit-text-stroke:.16px #ccccdc;right:1441.89px;text-align:right;letter-spacing:0.723px;">4.40%</div>
<div class="t" style="top:419.00px;font-size:12.48px;line-height:14px;color:#ccccdc;-webkit-text-stroke:.16px #ccccdc;right:1378.89px;text-align:right;letter-spacing:0.723px;">4.40%</div>
<div class="t" style="top:419.00px;font-size:12.48px;line-height:14px;color:#ccccdc;-webkit-text-stroke:.16px #ccccdc;right:1316.69px;text-align:right;letter-spacing:0.723px;">4.40%</div>
<div class="t" style="top:443.00px;font-size:12.48px;line-height:14px;color:#ccccdc;-webkit-text-stroke:.16px #ccccdc;left:931.12px;letter-spacing:0.464px;">pulseaudio</div>
<div class="t" style="top:443.00px;font-size:12.48px;line-height:14px;color:#ccccdc;-webkit-text-stroke:.16px #ccccdc;right:1442.61px;text-align:right;letter-spacing:0.003px;">1.67%</div>
<div class="t" style="top:443.00px;font-size:12.48px;line-height:14px;color:#ccccdc;-webkit-text-stroke:.16px #ccccdc;right:1379.01px;text-align:right;letter-spacing:0.603px;">2.00%</div>
<div class="t" style="top:443.00px;font-size:12.48px;line-height:14px;color:#ccccdc;-webkit-text-stroke:.16px #ccccdc;right:1317.41px;text-align:right;letter-spacing:0.003px;">1.07%</div>
<div class="t" style="top:467.00px;font-size:12.48px;line-height:14px;color:#ccccdc;-webkit-text-stroke:.16px #ccccdc;left:931.12px;letter-spacing:0.483px;">sshd-session</div>
<div class="t" style="top:467.00px;font-size:12.48px;line-height:14px;color:#ccccdc;-webkit-text-stroke:.16px #ccccdc;right:1442.61px;text-align:right;letter-spacing:0.003px;">1.07%</div>
<div class="t" style="top:467.00px;font-size:12.48px;line-height:14px;color:#ccccdc;-webkit-text-stroke:.16px #ccccdc;right:1379.61px;text-align:right;letter-spacing:0.003px;">1.07%</div>
<div class="t" style="top:467.00px;font-size:12.48px;line-height:14px;color:#ccccdc;-webkit-text-stroke:.16px #ccccdc;right:1317.41px;text-align:right;letter-spacing:0.003px;">1.07%</div>
<div class="t" style="top:491.00px;font-size:12.48px;line-height:14px;color:#ccccdc;-webkit-text-stroke:.16px #ccccdc;left:931.12px;letter-spacing:0.497px;">containerd-shim</div>
<div class="t" style="top:491.00px;font-size:12.48px;line-height:14px;color:#ccccdc;-webkit-text-stroke:.16px #ccccdc;right:1442.10px;text-align:right;letter-spacing:0.513px;">0.793%</div>
<div class="t" style="top:491.00px;font-size:12.48px;line-height:14px;color:#ccccdc;-webkit-text-stroke:.16px #ccccdc;right:1379.61px;text-align:right;letter-spacing:0.003px;">1.73%</div>
<div class="t" style="top:491.00px;font-size:12.48px;line-height:14px;color:#ccccdc;-webkit-text-stroke:.16px #ccccdc;right:1316.87px;text-align:right;letter-spacing:0.546px;">0.267%</div>
<div class="t" style="top:306.00px;font-size:12.48px;line-height:14px;color:#ccccdc;-webkit-text-stroke:.16px #ccccdc;right:1242.09px;text-align:right;letter-spacing:0.328px;">20%</div>
<div class="t" style="top:348.00px;font-size:12.48px;line-height:14px;color:#ccccdc;-webkit-text-stroke:.16px #ccccdc;right:1242.94px;text-align:right;letter-spacing:-0.529px;">15%</div>
<div class="t" style="top:391.00px;font-size:12.48px;line-height:14px;color:#ccccdc;-webkit-text-stroke:.16px #ccccdc;right:1242.82px;text-align:right;letter-spacing:-0.410px;">10%</div>
<div class="t" style="top:433.00px;font-size:12.48px;line-height:14px;color:#ccccdc;-webkit-text-stroke:.16px #ccccdc;right:1242.32px;text-align:right;letter-spacing:0.092px;">5%</div>
<div class="t" style="top:476.00px;font-size:12.48px;line-height:14px;color:#ccccdc;-webkit-text-stroke:.16px #ccccdc;right:1242.14px;text-align:right;letter-spacing:0.270px;">0%</div>
<div class="t" style="top:491.00px;font-size:12.48px;line-height:14px;color:#ccccdc;-webkit-text-stroke:.16px #ccccdc;left:1057.25px;width:600px;text-align:center;letter-spacing:0.091px;">10:20</div>
<div class="t" style="top:491.00px;font-size:12.48px;line-height:14px;color:#ccccdc;-webkit-text-stroke:.16px #ccccdc;left:1126.21px;width:600px;text-align:center;letter-spacing:0.020px;">10:25</div>
<div class="t" style="top:491.00px;font-size:12.48px;line-height:14px;color:#ccccdc;-webkit-text-stroke:.16px #ccccdc;left:1195.27px;width:600px;text-align:center;letter-spacing:0.140px;">10:30</div>
<div class="t" style="top:491.00px;font-size:12.48px;line-height:14px;color:#ccccdc;-webkit-text-stroke:.16px #ccccdc;left:1264.23px;width:600px;text-align:center;letter-spacing:0.069px;">10:35</div>
<div class="t" style="top:491.00px;font-size:12.48px;line-height:14px;color:#ccccdc;-webkit-text-stroke:.16px #ccccdc;left:1333.29px;width:600px;text-align:center;letter-spacing:0.190px;">10:40</div>
<div class="t" style="top:491.00px;font-size:12.48px;line-height:14px;color:#ccccdc;-webkit-text-stroke:.16px #ccccdc;left:1402.26px;width:600px;text-align:center;letter-spacing:0.118px;">10:45</div>
<div class="t" style="top:491.00px;font-size:12.48px;line-height:14px;color:#ccccdc;-webkit-text-stroke:.16px #ccccdc;left:1471.25px;width:600px;text-align:center;letter-spacing:0.104px;">10:50</div>
<div class="t" style="top:491.00px;font-size:12.48px;line-height:14px;color:#ccccdc;-webkit-text-stroke:.16px #ccccdc;left:1540.22px;width:600px;text-align:center;letter-spacing:0.032px;">10:55</div>
<div class="t" style="top:491.00px;font-size:12.48px;line-height:14px;color:#ccccdc;-webkit-text-stroke:.16px #ccccdc;left:1609.12px;width:600px;text-align:center;letter-spacing:-0.167px;">11:00</div>
<div class="t" style="top:491.00px;font-size:12.48px;line-height:14px;color:#ccccdc;-webkit-text-stroke:.16px #ccccdc;left:1678.08px;width:600px;text-align:center;letter-spacing:-0.239px;">11:05</div>
<div class="t" style="top:491.00px;font-size:12.48px;line-height:14px;color:#ccccdc;-webkit-text-stroke:.16px #ccccdc;left:1746.85px;width:600px;text-align:center;letter-spacing:-0.694px;">11:10</div>
<div class="t" style="top:491.00px;font-size:12.48px;line-height:14px;color:#ccccdc;-webkit-text-stroke:.16px #ccccdc;left:1815.82px;width:600px;text-align:center;letter-spacing:-0.765px;">11:15</div>
<div class="t" style="top:300.00px;font-size:12.48px;line-height:14px;color:#6e9fff;-webkit-text-stroke:.42px #6e9fff;left:2185.87px;letter-spacing:0.464px;">Name</div>
<div class="t" style="top:300.00px;font-size:12.48px;line-height:14px;color:#6e9fff;-webkit-text-stroke:.42px #6e9fff;left:2328.37px;letter-spacing:0.542px;">Mean</div>
<div class="t" style="top:300.00px;font-size:12.48px;line-height:14px;color:#6e9fff;-webkit-text-stroke:.42px #6e9fff;right:124.11px;text-align:right;letter-spacing:0.703px;">Max</div>
<div class="t" style="top:300.00px;font-size:12.48px;line-height:14px;color:#6e9fff;-webkit-text-stroke:.42px #6e9fff;right:64.15px;text-align:right;letter-spacing:0.860px;">Min</div>
<div class="t" style="top:324.00px;font-size:12.48px;line-height:14px;color:#ccccdc;-webkit-text-stroke:.16px #ccccdc;left:2185.87px;letter-spacing:0.643px;">python3</div>
<div class="t" style="top:324.00px;font-size:12.48px;line-height:14px;color:#ccccdc;-webkit-text-stroke:.16px #ccccdc;right:188.03px;text-align:right;letter-spacing:-0.113px;">11.2%</div>
<div class="t" style="top:324.00px;font-size:12.48px;line-height:14px;color:#ccccdc;-webkit-text-stroke:.16px #ccccdc;right:125.31px;text-align:right;letter-spacing:0.103px;">18.9%</div>
<div class="t" style="top:324.00px;font-size:12.48px;line-height:14px;color:#ccccdc;-webkit-text-stroke:.16px #ccccdc;right:56.35px;text-align:right;letter-spacing:0.363px;">9.87%</div>
<div class="t" style="top:348.00px;font-size:12.48px;line-height:14px;color:#ccccdc;-webkit-text-stroke:.16px #ccccdc;left:2185.87px;letter-spacing:0.503px;">alloy</div>
<div class="t" style="top:348.00px;font-size:12.48px;line-height:14px;color:#ccccdc;-webkit-text-stroke:.16px #ccccdc;right:187.51px;text-align:right;letter-spacing:0.403px;">6.67%</div>
<div class="t" style="top:348.00px;font-size:12.48px;line-height:14px;color:#ccccdc;-webkit-text-stroke:.16px #ccccdc;right:125.91px;text-align:right;letter-spacing:-0.497px;">7.13%</div>
<div class="t" style="top:348.00px;font-size:12.48px;line-height:14px;color:#ccccdc;-webkit-text-stroke:.16px #ccccdc;right:56.87px;text-align:right;letter-spacing:-0.157px;">6.13%</div>
<div class="t" style="top:372.00px;font-size:12.48px;line-height:14px;color:#ccccdc;-webkit-text-stroke:.16px #ccccdc;left:2185.87px;letter-spacing:0.736px;">go2rtc</div>
<div class="t" style="top:372.00px;font-size:12.48px;line-height:14px;color:#ccccdc;-webkit-text-stroke:.16px #ccccdc;right:187.35px;text-align:right;letter-spacing:0.563px;">2.86%</div>
<div class="t" style="top:372.00px;font-size:12.48px;line-height:14px;color:#ccccdc;-webkit-text-stroke:.16px #ccccdc;right:124.95px;text-align:right;letter-spacing:0.463px;">3.47%</div>
<div class="t" style="top:372.00px;font-size:12.48px;line-height:14px;color:#ccccdc;-webkit-text-stroke:.16px #ccccdc;right:56.15px;text-align:right;letter-spacing:0.563px;">2.60%</div>
<div class="t" style="top:395.00px;font-size:12.48px;line-height:14px;color:#ccccdc;-webkit-text-stroke:.16px #ccccdc;left:2185.87px;letter-spacing:0.484px;">systemd-hostnam</div>
<div class="t" style="top:395.00px;font-size:12.48px;line-height:14px;color:#ccccdc;-webkit-text-stroke:.16px #ccccdc;right:187.35px;text-align:right;letter-spacing:0.563px;">2.53%</div>
<div class="t" style="top:395.00px;font-size:12.48px;line-height:14px;color:#ccccdc;-webkit-text-stroke:.16px #ccccdc;right:124.85px;text-align:right;letter-spacing:0.563px;">2.53%</div>
<div class="t" style="top:395.00px;font-size:12.48px;line-height:14px;color:#ccccdc;-webkit-text-stroke:.16px #ccccdc;right:56.15px;text-align:right;letter-spacing:0.563px;">2.53%</div>
<div class="t" style="top:419.00px;font-size:12.48px;line-height:14px;color:#ccccdc;-webkit-text-stroke:.16px #ccccdc;left:2185.87px;letter-spacing:0.514px;">systemd-timedat</div>
<div class="t" style="top:419.00px;font-size:12.48px;line-height:14px;color:#ccccdc;-webkit-text-stroke:.16px #ccccdc;right:187.31px;text-align:right;letter-spacing:0.603px;">2.20%</div>
<div class="t" style="top:419.00px;font-size:12.48px;line-height:14px;color:#ccccdc;-webkit-text-stroke:.16px #ccccdc;right:124.81px;text-align:right;letter-spacing:0.603px;">2.20%</div>
<div class="t" style="top:419.00px;font-size:12.48px;line-height:14px;color:#ccccdc;-webkit-text-stroke:.16px #ccccdc;right:56.11px;text-align:right;letter-spacing:0.603px;">2.20%</div>
<div class="t" style="top:443.00px;font-size:12.48px;line-height:14px;color:#ccccdc;-webkit-text-stroke:.16px #ccccdc;left:2185.87px;letter-spacing:0.464px;">pulseaudio</div>
<div class="t" style="top:443.00px;font-size:12.48px;line-height:14px;color:#ccccdc;-webkit-text-stroke:.16px #ccccdc;right:187.32px;text-align:right;letter-spacing:0.596px;">0.835%</div>
<div class="t" style="top:443.00px;font-size:12.48px;line-height:14px;color:#ccccdc;-webkit-text-stroke:.16px #ccccdc;right:125.07px;text-align:right;letter-spacing:0.346px;">1.000%</div>
<div class="t" style="top:443.00px;font-size:12.48px;line-height:14px;color:#ccccdc;-webkit-text-stroke:.16px #ccccdc;right:56.20px;text-align:right;letter-spacing:0.513px;">0.533%</div>
<div class="t" style="top:467.00px;font-size:12.48px;line-height:14px;color:#ccccdc;-webkit-text-stroke:.16px #ccccdc;left:2185.87px;letter-spacing:0.483px;">sshd-session</div>
<div class="t" style="top:467.00px;font-size:12.48px;line-height:14px;color:#ccccdc;-webkit-text-stroke:.16px #ccccdc;right:187.32px;text-align:right;letter-spacing:0.596px;">0.533%</div>
<div class="t" style="top:467.00px;font-size:12.48px;line-height:14px;color:#ccccdc;-webkit-text-stroke:.16px #ccccdc;right:124.82px;text-align:right;letter-spacing:0.596px;">0.533%</div>
<div class="t" style="top:467.00px;font-size:12.48px;line-height:14px;color:#ccccdc;-webkit-text-stroke:.16px #ccccdc;right:56.20px;text-align:right;letter-spacing:0.513px;">0.533%</div>
<div class="t" style="top:491.00px;font-size:12.48px;line-height:14px;color:#ccccdc;-webkit-text-stroke:.16px #ccccdc;left:2185.87px;letter-spacing:0.497px;">containerd-shim</div>
<div class="t" style="top:491.00px;font-size:12.48px;line-height:14px;color:#ccccdc;-webkit-text-stroke:.16px #ccccdc;right:187.40px;text-align:right;letter-spacing:0.513px;">0.387%</div>
<div class="t" style="top:491.00px;font-size:12.48px;line-height:14px;color:#ccccdc;-webkit-text-stroke:.16px #ccccdc;right:124.90px;text-align:right;letter-spacing:0.513px;">0.867%</div>
<div class="t" style="top:491.00px;font-size:12.48px;line-height:14px;color:#ccccdc;-webkit-text-stroke:.16px #ccccdc;right:56.70px;text-align:right;letter-spacing:0.013px;">0.133%</div>
<div class="t" style="top:605.00px;font-size:12.48px;line-height:14px;color:#ccccdc;-webkit-text-stroke:.16px #ccccdc;right:2482.19px;text-align:right;letter-spacing:-0.479px;">1 GiB</div>
<div class="t" style="top:649.00px;font-size:12.48px;line-height:14px;color:#ccccdc;-webkit-text-stroke:.16px #ccccdc;right:2481.43px;text-align:right;letter-spacing:0.284px;">768 MiB</div>
<div class="t" style="top:692.00px;font-size:12.48px;line-height:14px;color:#ccccdc;-webkit-text-stroke:.16px #ccccdc;right:2481.74px;text-align:right;letter-spacing:-0.024px;">512 MiB</div>
<div class="t" style="top:736.00px;font-size:12.48px;line-height:14px;color:#ccccdc;-webkit-text-stroke:.16px #ccccdc;right:2481.39px;text-align:right;letter-spacing:0.328px;">256 MiB</div>
<div class="t" style="top:779.00px;font-size:12.48px;line-height:14px;color:#ccccdc;-webkit-text-stroke:.16px #ccccdc;right:2481.52px;text-align:right;letter-spacing:0.197px;">0 B</div>
<div class="t" style="top:795.00px;font-size:12.48px;line-height:14px;color:#ccccdc;-webkit-text-stroke:.16px #ccccdc;left:-183.75px;width:600px;text-align:center;letter-spacing:0.091px;">10:20</div>
<div class="t" style="top:795.00px;font-size:12.48px;line-height:14px;color:#ccccdc;-webkit-text-stroke:.16px #ccccdc;left:-115.79px;width:600px;text-align:center;letter-spacing:0.020px;">10:25</div>
<div class="t" style="top:795.00px;font-size:12.48px;line-height:14px;color:#ccccdc;-webkit-text-stroke:.16px #ccccdc;left:-47.73px;width:600px;text-align:center;letter-spacing:0.140px;">10:30</div>
<div class="t" style="top:795.00px;font-size:12.48px;line-height:14px;color:#ccccdc;-webkit-text-stroke:.16px #ccccdc;left:20.23px;width:600px;text-align:center;letter-spacing:0.069px;">10:35</div>
<div class="t" style="top:795.00px;font-size:12.48px;line-height:14px;color:#ccccdc;-webkit-text-stroke:.16px #ccccdc;left:87.29px;width:600px;text-align:center;letter-spacing:0.190px;">10:40</div>
<div class="t" style="top:795.00px;font-size:12.48px;line-height:14px;color:#ccccdc;-webkit-text-stroke:.16px #ccccdc;left:155.26px;width:600px;text-align:center;letter-spacing:0.118px;">10:45</div>
<div class="t" style="top:795.00px;font-size:12.48px;line-height:14px;color:#ccccdc;-webkit-text-stroke:.16px #ccccdc;left:223.25px;width:600px;text-align:center;letter-spacing:0.104px;">10:50</div>
<div class="t" style="top:795.00px;font-size:12.48px;line-height:14px;color:#ccccdc;-webkit-text-stroke:.16px #ccccdc;left:291.22px;width:600px;text-align:center;letter-spacing:0.032px;">10:55</div>
<div class="t" style="top:795.00px;font-size:12.48px;line-height:14px;color:#ccccdc;-webkit-text-stroke:.16px #ccccdc;left:358.12px;width:600px;text-align:center;letter-spacing:-0.167px;">11:00</div>
<div class="t" style="top:795.00px;font-size:12.48px;line-height:14px;color:#ccccdc;-webkit-text-stroke:.16px #ccccdc;left:426.08px;width:600px;text-align:center;letter-spacing:-0.239px;">11:05</div>
<div class="t" style="top:795.00px;font-size:12.48px;line-height:14px;color:#ccccdc;-webkit-text-stroke:.16px #ccccdc;left:493.85px;width:600px;text-align:center;letter-spacing:-0.694px;">11:10</div>
<div class="t" style="top:795.00px;font-size:12.48px;line-height:14px;color:#ccccdc;-webkit-text-stroke:.16px #ccccdc;left:561.82px;width:600px;text-align:center;letter-spacing:-0.765px;">11:15</div>
<div class="t" style="top:604.00px;font-size:12.48px;line-height:14px;color:#6e9fff;-webkit-text-stroke:.42px #6e9fff;left:930.87px;letter-spacing:0.464px;">Name</div>
<div class="t" style="top:604.00px;font-size:12.48px;line-height:14px;color:#6e9fff;-webkit-text-stroke:.42px #6e9fff;left:1063.87px;letter-spacing:0.417px;">Mean</div>
<div class="t" style="top:604.00px;font-size:12.48px;line-height:14px;color:#6e9fff;-webkit-text-stroke:.42px #6e9fff;right:1388.86px;text-align:right;letter-spacing:0.703px;">Max</div>
<div class="t" style="top:604.00px;font-size:12.48px;line-height:14px;color:#6e9fff;-webkit-text-stroke:.42px #6e9fff;right:1324.15px;text-align:right;letter-spacing:0.860px;">Min</div>
<div class="t" style="top:628.00px;font-size:12.48px;line-height:14px;color:#ccccdc;-webkit-text-stroke:.16px #ccccdc;left:930.87px;letter-spacing:0.454px;">python3</div>
<div class="t" style="top:628.00px;font-size:12.48px;line-height:14px;color:#ccccdc;-webkit-text-stroke:.16px #ccccdc;right:1451.49px;text-align:right;letter-spacing:0.424px;">943 MiB</div>
<div class="t" style="top:628.00px;font-size:12.48px;line-height:14px;color:#ccccdc;-webkit-text-stroke:.16px #ccccdc;right:1384.40px;text-align:right;letter-spacing:0.011px;">951 MiB</div>
<div class="t" style="top:628.00px;font-size:12.48px;line-height:14px;color:#ccccdc;-webkit-text-stroke:.16px #ccccdc;right:1316.52px;text-align:right;letter-spacing:0.389px;">939 MiB</div>
<div class="t" style="top:652.00px;font-size:12.48px;line-height:14px;color:#ccccdc;-webkit-text-stroke:.16px #ccccdc;left:930.87px;letter-spacing:0.246px;">alloy</div>
<div class="t" style="top:652.00px;font-size:12.48px;line-height:14px;color:#ccccdc;-webkit-text-stroke:.16px #ccccdc;right:1451.60px;text-align:right;letter-spacing:0.310px;">555 MiB</div>
<div class="t" style="top:652.00px;font-size:12.48px;line-height:14px;color:#ccccdc;-webkit-text-stroke:.16px #ccccdc;right:1384.08px;text-align:right;letter-spacing:0.336px;">556 MiB</div>
<div class="t" style="top:652.00px;font-size:12.48px;line-height:14px;color:#ccccdc;-webkit-text-stroke:.16px #ccccdc;right:1316.58px;text-align:right;letter-spacing:0.336px;">553 MiB</div>
<div class="t" style="top:676.00px;font-size:12.48px;line-height:14px;color:#ccccdc;-webkit-text-stroke:.16px #ccccdc;left:930.87px;letter-spacing:0.353px;">systemd-journal</div>
<div class="t" style="top:676.00px;font-size:12.48px;line-height:14px;color:#ccccdc;-webkit-text-stroke:.16px #ccccdc;right:1451.52px;text-align:right;letter-spacing:0.389px;">324 MiB</div>
<div class="t" style="top:676.00px;font-size:12.48px;line-height:14px;color:#ccccdc;-webkit-text-stroke:.16px #ccccdc;right:1384.06px;text-align:right;letter-spacing:0.354px;">328 MiB</div>
<div class="t" style="top:676.00px;font-size:12.48px;line-height:14px;color:#ccccdc;-webkit-text-stroke:.16px #ccccdc;right:1316.91px;text-align:right;letter-spacing:0.002px;">321 MiB</div>
<div class="t" style="top:699.00px;font-size:12.48px;line-height:14px;color:#ccccdc;-webkit-text-stroke:.16px #ccccdc;left:930.87px;letter-spacing:0.363px;">containerd-shim</div>
<div class="t" style="top:699.00px;font-size:12.48px;line-height:14px;color:#ccccdc;-webkit-text-stroke:.16px #ccccdc;right:1451.88px;text-align:right;letter-spacing:0.038px;">186 MiB</div>
<div class="t" style="top:699.00px;font-size:12.48px;line-height:14px;color:#ccccdc;-webkit-text-stroke:.16px #ccccdc;right:1384.48px;text-align:right;letter-spacing:-0.068px;">187 MiB</div>
<div class="t" style="top:699.00px;font-size:12.48px;line-height:14px;color:#ccccdc;-webkit-text-stroke:.16px #ccccdc;right:1316.90px;text-align:right;letter-spacing:0.011px;">185 MiB</div>
<div class="t" style="top:723.00px;font-size:12.48px;line-height:14px;color:#ccccdc;-webkit-text-stroke:.16px #ccccdc;left:930.87px;letter-spacing:0.500px;">ffmpeg</div>
<div class="t" style="top:723.00px;font-size:12.48px;line-height:14px;color:#ccccdc;-webkit-text-stroke:.16px #ccccdc;right:1451.89px;text-align:right;letter-spacing:0.027px;">120 MiB</div>
<div class="t" style="top:723.00px;font-size:12.48px;line-height:14px;color:#ccccdc;-webkit-text-stroke:.16px #ccccdc;right:1384.39px;text-align:right;letter-spacing:0.027px;">120 MiB</div>
<div class="t" style="top:723.00px;font-size:12.48px;line-height:14px;color:#ccccdc;-webkit-text-stroke:.16px #ccccdc;right:1316.89px;text-align:right;letter-spacing:0.027px;">120 MiB</div>
<div class="t" style="top:747.00px;font-size:12.48px;line-height:14px;color:#ccccdc;-webkit-text-stroke:.16px #ccccdc;left:930.87px;letter-spacing:0.276px;">node</div>
<div class="t" style="top:747.00px;font-size:12.48px;line-height:14px;color:#ccccdc;-webkit-text-stroke:.16px #ccccdc;right:1451.55px;text-align:right;letter-spacing:0.368px;">69.4 MiB</div>
<div class="t" style="top:747.00px;font-size:12.48px;line-height:14px;color:#ccccdc;-webkit-text-stroke:.16px #ccccdc;right:1384.08px;text-align:right;letter-spacing:0.337px;">69.9 MiB</div>
<div class="t" style="top:747.00px;font-size:12.48px;line-height:14px;color:#ccccdc;-webkit-text-stroke:.16px #ccccdc;right:1316.55px;text-align:right;letter-spacing:0.359px;">69.0 MiB</div>
<div class="t" style="top:771.00px;font-size:12.48px;line-height:14px;color:#ccccdc;-webkit-text-stroke:.16px #ccccdc;left:930.87px;letter-spacing:0.386px;">dockerd</div>
<div class="t" style="top:771.00px;font-size:12.48px;line-height:14px;color:#ccccdc;-webkit-text-stroke:.16px #ccccdc;right:1451.88px;text-align:right;letter-spacing:0.030px;">69.1 MiB</div>
<div class="t" style="top:771.00px;font-size:12.48px;line-height:14px;color:#ccccdc;-webkit-text-stroke:.16px #ccccdc;right:1384.08px;text-align:right;letter-spacing:0.337px;">69.9 MiB</div>
<div class="t" style="top:771.00px;font-size:12.48px;line-height:14px;color:#ccccdc;-webkit-text-stroke:.16px #ccccdc;right:1316.60px;text-align:right;letter-spacing:0.314px;">68.5 MiB</div>
<div class="t" style="top:795.00px;font-size:12.48px;line-height:14px;color:#ccccdc;-webkit-text-stroke:.16px #ccccdc;left:930.87px;letter-spacing:0.509px;">go2rtc</div>
<div class="t" style="top:795.00px;font-size:12.48px;line-height:14px;color:#ccccdc;-webkit-text-stroke:.16px #ccccdc;right:1451.67px;text-align:right;letter-spacing:0.245px;">37.6 MiB</div>
<div class="t" style="top:795.00px;font-size:12.48px;line-height:14px;color:#ccccdc;-webkit-text-stroke:.16px #ccccdc;right:1384.05px;text-align:right;letter-spacing:0.359px;">38.0 MiB</div>
<div class="t" style="top:795.00px;font-size:12.48px;line-height:14px;color:#ccccdc;-webkit-text-stroke:.16px #ccccdc;right:1316.98px;text-align:right;letter-spacing:-0.062px;">37.1 MiB</div>
<div class="t" style="top:605.00px;font-size:12.48px;line-height:14px;color:#ccccdc;-webkit-text-stroke:.16px #ccccdc;right:1221.19px;text-align:right;letter-spacing:-0.479px;">1 GiB</div>
<div class="t" style="top:649.00px;font-size:12.48px;line-height:14px;color:#ccccdc;-webkit-text-stroke:.16px #ccccdc;right:1220.43px;text-align:right;letter-spacing:0.284px;">768 MiB</div>
<div class="t" style="top:692.00px;font-size:12.48px;line-height:14px;color:#ccccdc;-webkit-text-stroke:.16px #ccccdc;right:1220.74px;text-align:right;letter-spacing:-0.024px;">512 MiB</div>
<div class="t" style="top:736.00px;font-size:12.48px;line-height:14px;color:#ccccdc;-webkit-text-stroke:.16px #ccccdc;right:1220.39px;text-align:right;letter-spacing:0.328px;">256 MiB</div>
<div class="t" style="top:779.00px;font-size:12.48px;line-height:14px;color:#ccccdc;-webkit-text-stroke:.16px #ccccdc;right:1220.52px;text-align:right;letter-spacing:0.197px;">0 B</div>
<div class="t" style="top:795.00px;font-size:12.48px;line-height:14px;color:#ccccdc;-webkit-text-stroke:.16px #ccccdc;left:1077.25px;width:600px;text-align:center;letter-spacing:0.091px;">10:20</div>
<div class="t" style="top:795.00px;font-size:12.48px;line-height:14px;color:#ccccdc;-webkit-text-stroke:.16px #ccccdc;left:1145.21px;width:600px;text-align:center;letter-spacing:0.020px;">10:25</div>
<div class="t" style="top:795.00px;font-size:12.48px;line-height:14px;color:#ccccdc;-webkit-text-stroke:.16px #ccccdc;left:1213.27px;width:600px;text-align:center;letter-spacing:0.140px;">10:30</div>
<div class="t" style="top:795.00px;font-size:12.48px;line-height:14px;color:#ccccdc;-webkit-text-stroke:.16px #ccccdc;left:1281.23px;width:600px;text-align:center;letter-spacing:0.069px;">10:35</div>
<div class="t" style="top:795.00px;font-size:12.48px;line-height:14px;color:#ccccdc;-webkit-text-stroke:.16px #ccccdc;left:1348.29px;width:600px;text-align:center;letter-spacing:0.190px;">10:40</div>
<div class="t" style="top:795.00px;font-size:12.48px;line-height:14px;color:#ccccdc;-webkit-text-stroke:.16px #ccccdc;left:1416.26px;width:600px;text-align:center;letter-spacing:0.118px;">10:45</div>
<div class="t" style="top:795.00px;font-size:12.48px;line-height:14px;color:#ccccdc;-webkit-text-stroke:.16px #ccccdc;left:1484.25px;width:600px;text-align:center;letter-spacing:0.104px;">10:50</div>
<div class="t" style="top:795.00px;font-size:12.48px;line-height:14px;color:#ccccdc;-webkit-text-stroke:.16px #ccccdc;left:1552.22px;width:600px;text-align:center;letter-spacing:0.032px;">10:55</div>
<div class="t" style="top:795.00px;font-size:12.48px;line-height:14px;color:#ccccdc;-webkit-text-stroke:.16px #ccccdc;left:1620.12px;width:600px;text-align:center;letter-spacing:-0.167px;">11:00</div>
<div class="t" style="top:795.00px;font-size:12.48px;line-height:14px;color:#ccccdc;-webkit-text-stroke:.16px #ccccdc;left:1687.08px;width:600px;text-align:center;letter-spacing:-0.239px;">11:05</div>
<div class="t" style="top:795.00px;font-size:12.48px;line-height:14px;color:#ccccdc;-webkit-text-stroke:.16px #ccccdc;left:1754.85px;width:600px;text-align:center;letter-spacing:-0.694px;">11:10</div>
<div class="t" style="top:795.00px;font-size:12.48px;line-height:14px;color:#ccccdc;-webkit-text-stroke:.16px #ccccdc;left:1822.82px;width:600px;text-align:center;letter-spacing:-0.765px;">11:15</div>
<div class="t" style="top:604.00px;font-size:12.48px;line-height:14px;color:#6e9fff;-webkit-text-stroke:.42px #6e9fff;left:2191.62px;letter-spacing:0.464px;">Name</div>
<div class="t" style="top:604.00px;font-size:12.48px;line-height:14px;color:#6e9fff;-webkit-text-stroke:.42px #6e9fff;left:2324.62px;letter-spacing:0.542px;">Mean</div>
<div class="t" style="top:604.00px;font-size:12.48px;line-height:14px;color:#6e9fff;-webkit-text-stroke:.42px #6e9fff;right:127.86px;text-align:right;letter-spacing:0.703px;">Max</div>
<div class="t" style="top:604.00px;font-size:12.48px;line-height:14px;color:#6e9fff;-webkit-text-stroke:.42px #6e9fff;right:63.45px;text-align:right;letter-spacing:0.860px;">Min</div>
<div class="t" style="top:628.00px;font-size:12.48px;line-height:14px;color:#ccccdc;-webkit-text-stroke:.16px #ccccdc;left:2191.62px;letter-spacing:0.454px;">python3</div>
<div class="t" style="top:628.00px;font-size:12.48px;line-height:14px;color:#ccccdc;-webkit-text-stroke:.16px #ccccdc;right:190.52px;text-align:right;letter-spacing:0.389px;">938 MiB</div>
<div class="t" style="top:628.00px;font-size:12.48px;line-height:14px;color:#ccccdc;-webkit-text-stroke:.16px #ccccdc;right:123.32px;text-align:right;letter-spacing:0.398px;">945 MiB</div>
<div class="t" style="top:628.00px;font-size:12.48px;line-height:14px;color:#ccccdc;-webkit-text-stroke:.16px #ccccdc;right:55.79px;text-align:right;letter-spacing:0.424px;">934 MiB</div>
<div class="t" style="top:652.00px;font-size:12.48px;line-height:14px;color:#ccccdc;-webkit-text-stroke:.16px #ccccdc;left:2191.62px;letter-spacing:0.246px;">alloy</div>
<div class="t" style="top:652.00px;font-size:12.48px;line-height:14px;color:#ccccdc;-webkit-text-stroke:.16px #ccccdc;right:190.60px;text-align:right;letter-spacing:0.310px;">555 MiB</div>
<div class="t" style="top:652.00px;font-size:12.48px;line-height:14px;color:#ccccdc;-webkit-text-stroke:.16px #ccccdc;right:123.38px;text-align:right;letter-spacing:0.336px;">556 MiB</div>
<div class="t" style="top:652.00px;font-size:12.48px;line-height:14px;color:#ccccdc;-webkit-text-stroke:.16px #ccccdc;right:55.88px;text-align:right;letter-spacing:0.336px;">553 MiB</div>
<div class="t" style="top:676.00px;font-size:12.48px;line-height:14px;color:#ccccdc;-webkit-text-stroke:.16px #ccccdc;left:2191.62px;letter-spacing:0.353px;">systemd-journal</div>
<div class="t" style="top:676.00px;font-size:12.48px;line-height:14px;color:#ccccdc;-webkit-text-stroke:.16px #ccccdc;right:190.59px;text-align:right;letter-spacing:0.319px;">322 MiB</div>
<div class="t" style="top:676.00px;font-size:12.48px;line-height:14px;color:#ccccdc;-webkit-text-stroke:.16px #ccccdc;right:123.36px;text-align:right;letter-spacing:0.354px;">326 MiB</div>
<div class="t" style="top:676.00px;font-size:12.48px;line-height:14px;color:#ccccdc;-webkit-text-stroke:.16px #ccccdc;right:55.84px;text-align:right;letter-spacing:0.379px;">320 MiB</div>
<div class="t" style="top:699.00px;font-size:12.48px;line-height:14px;color:#ccccdc;-webkit-text-stroke:.16px #ccccdc;left:2191.62px;letter-spacing:0.363px;">containerd-shim</div>
<div class="t" style="top:699.00px;font-size:12.48px;line-height:14px;color:#ccccdc;-webkit-text-stroke:.16px #ccccdc;right:190.85px;text-align:right;letter-spacing:0.062px;">180 MiB</div>
<div class="t" style="top:699.00px;font-size:12.48px;line-height:14px;color:#ccccdc;-webkit-text-stroke:.16px #ccccdc;right:124.03px;text-align:right;letter-spacing:-0.314px;">181 MiB</div>
<div class="t" style="top:699.00px;font-size:12.48px;line-height:14px;color:#ccccdc;-webkit-text-stroke:.16px #ccccdc;right:56.28px;text-align:right;letter-spacing:-0.068px;">179 MiB</div>
<div class="t" style="top:723.00px;font-size:12.48px;line-height:14px;color:#ccccdc;-webkit-text-stroke:.16px #ccccdc;left:2191.62px;letter-spacing:0.500px;">ffmpeg</div>
<div class="t" style="top:723.00px;font-size:12.48px;line-height:14px;color:#ccccdc;-webkit-text-stroke:.16px #ccccdc;right:190.89px;text-align:right;letter-spacing:0.027px;">120 MiB</div>
<div class="t" style="top:723.00px;font-size:12.48px;line-height:14px;color:#ccccdc;-webkit-text-stroke:.16px #ccccdc;right:123.69px;text-align:right;letter-spacing:0.027px;">120 MiB</div>
<div class="t" style="top:723.00px;font-size:12.48px;line-height:14px;color:#ccccdc;-webkit-text-stroke:.16px #ccccdc;right:56.19px;text-align:right;letter-spacing:0.027px;">120 MiB</div>
<div class="t" style="top:747.00px;font-size:12.48px;line-height:14px;color:#ccccdc;-webkit-text-stroke:.16px #ccccdc;left:2191.62px;letter-spacing:0.386px;">dockerd</div>
<div class="t" style="top:747.00px;font-size:12.48px;line-height:14px;color:#ccccdc;-webkit-text-stroke:.16px #ccccdc;right:190.88px;text-align:right;letter-spacing:0.030px;">69.1 MiB</div>
<div class="t" style="top:747.00px;font-size:12.48px;line-height:14px;color:#ccccdc;-webkit-text-stroke:.16px #ccccdc;right:123.38px;text-align:right;letter-spacing:0.337px;">69.9 MiB</div>
<div class="t" style="top:747.00px;font-size:12.48px;line-height:14px;color:#ccccdc;-webkit-text-stroke:.16px #ccccdc;right:55.90px;text-align:right;letter-spacing:0.314px;">68.5 MiB</div>
<div class="t" style="top:771.00px;font-size:12.48px;line-height:14px;color:#ccccdc;-webkit-text-stroke:.16px #ccccdc;left:2191.62px;letter-spacing:0.276px;">node</div>
<div class="t" style="top:771.00px;font-size:12.48px;line-height:14px;color:#ccccdc;-webkit-text-stroke:.16px #ccccdc;right:190.88px;text-align:right;letter-spacing:0.038px;">51.4 MiB</div>
<div class="t" style="top:771.00px;font-size:12.48px;line-height:14px;color:#ccccdc;-webkit-text-stroke:.16px #ccccdc;right:123.71px;text-align:right;letter-spacing:0.007px;">51.9 MiB</div>
<div class="t" style="top:771.00px;font-size:12.48px;line-height:14px;color:#ccccdc;-webkit-text-stroke:.16px #ccccdc;right:56.19px;text-align:right;letter-spacing:0.028px;">51.0 MiB</div>
<div class="t" style="top:795.00px;font-size:12.48px;line-height:14px;color:#ccccdc;-webkit-text-stroke:.16px #ccccdc;left:2191.62px;letter-spacing:0.509px;">go2rtc</div>
<div class="t" style="top:795.00px;font-size:12.48px;line-height:14px;color:#ccccdc;-webkit-text-stroke:.16px #ccccdc;right:190.67px;text-align:right;letter-spacing:0.245px;">37.6 MiB</div>
<div class="t" style="top:795.00px;font-size:12.48px;line-height:14px;color:#ccccdc;-webkit-text-stroke:.16px #ccccdc;right:123.35px;text-align:right;letter-spacing:0.359px;">38.0 MiB</div>
<div class="t" style="top:795.00px;font-size:12.48px;line-height:14px;color:#ccccdc;-webkit-text-stroke:.16px #ccccdc;right:56.28px;text-align:right;letter-spacing:-0.062px;">37.1 MiB</div>
<div class="t" style="top:892.00px;font-size:12.48px;line-height:14px;color:#ccccdc;-webkit-text-stroke:.16px #ccccdc;right:2491.59px;text-align:right;letter-spacing:0.126px;">24 GiB</div>
<div class="t" style="top:943.00px;font-size:12.48px;line-height:14px;color:#ccccdc;-webkit-text-stroke:.16px #ccccdc;right:2492.00px;text-align:right;letter-spacing:-0.284px;">16 GiB</div>
<div class="t" style="top:994.00px;font-size:12.48px;line-height:14px;color:#ccccdc;-webkit-text-stroke:.16px #ccccdc;right:2491.70px;text-align:right;letter-spacing:0.013px;">8 GiB</div>
<div class="t" style="top:1046.00px;font-size:12.48px;line-height:14px;color:#ccccdc;-webkit-text-stroke:.16px #ccccdc;right:2491.52px;text-align:right;letter-spacing:0.197px;">0 B</div>
<div class="t" style="top:1061.00px;font-size:12.48px;line-height:14px;color:#ccccdc;-webkit-text-stroke:.16px #ccccdc;left:-192.75px;width:600px;text-align:center;letter-spacing:0.091px;">10:20</div>
<div class="t" style="top:1061.00px;font-size:12.48px;line-height:14px;color:#ccccdc;-webkit-text-stroke:.16px #ccccdc;left:-123.79px;width:600px;text-align:center;letter-spacing:0.020px;">10:25</div>
<div class="t" style="top:1061.00px;font-size:12.48px;line-height:14px;color:#ccccdc;-webkit-text-stroke:.16px #ccccdc;left:-54.73px;width:600px;text-align:center;letter-spacing:0.140px;">10:30</div>
<div class="t" style="top:1061.00px;font-size:12.48px;line-height:14px;color:#ccccdc;-webkit-text-stroke:.16px #ccccdc;left:14.23px;width:600px;text-align:center;letter-spacing:0.069px;">10:35</div>
<div class="t" style="top:1061.00px;font-size:12.48px;line-height:14px;color:#ccccdc;-webkit-text-stroke:.16px #ccccdc;left:83.29px;width:600px;text-align:center;letter-spacing:0.190px;">10:40</div>
<div class="t" style="top:1061.00px;font-size:12.48px;line-height:14px;color:#ccccdc;-webkit-text-stroke:.16px #ccccdc;left:152.26px;width:600px;text-align:center;letter-spacing:0.118px;">10:45</div>
<div class="t" style="top:1061.00px;font-size:12.48px;line-height:14px;color:#ccccdc;-webkit-text-stroke:.16px #ccccdc;left:221.25px;width:600px;text-align:center;letter-spacing:0.104px;">10:50</div>
<div class="t" style="top:1061.00px;font-size:12.48px;line-height:14px;color:#ccccdc;-webkit-text-stroke:.16px #ccccdc;left:290.22px;width:600px;text-align:center;letter-spacing:0.032px;">10:55</div>
<div class="t" style="top:1061.00px;font-size:12.48px;line-height:14px;color:#ccccdc;-webkit-text-stroke:.16px #ccccdc;left:358.12px;width:600px;text-align:center;letter-spacing:-0.167px;">11:00</div>
<div class="t" style="top:1061.00px;font-size:12.48px;line-height:14px;color:#ccccdc;-webkit-text-stroke:.16px #ccccdc;left:427.08px;width:600px;text-align:center;letter-spacing:-0.239px;">11:05</div>
<div class="t" style="top:1061.00px;font-size:12.48px;line-height:14px;color:#ccccdc;-webkit-text-stroke:.16px #ccccdc;left:495.85px;width:600px;text-align:center;letter-spacing:-0.694px;">11:10</div>
<div class="t" style="top:1061.00px;font-size:12.48px;line-height:14px;color:#ccccdc;-webkit-text-stroke:.16px #ccccdc;left:564.82px;width:600px;text-align:center;letter-spacing:-0.765px;">11:15</div>
<div class="t" style="top:870.00px;font-size:12.48px;line-height:14px;color:#6e9fff;-webkit-text-stroke:.42px #6e9fff;left:934.87px;letter-spacing:0.464px;">Name</div>
<div class="t" style="top:870.00px;font-size:12.48px;line-height:14px;color:#6e9fff;-webkit-text-stroke:.42px #6e9fff;left:1067.62px;letter-spacing:0.542px;">Mean</div>
<div class="t" style="top:870.00px;font-size:12.48px;line-height:14px;color:#6e9fff;-webkit-text-stroke:.42px #6e9fff;right:1384.86px;text-align:right;letter-spacing:0.703px;">Max</div>
<div class="t" style="top:870.00px;font-size:12.48px;line-height:14px;color:#6e9fff;-webkit-text-stroke:.42px #6e9fff;right:1322.45px;text-align:right;letter-spacing:0.860px;">Min</div>
<div class="t" style="top:894.00px;font-size:12.48px;line-height:14px;color:#ccccdc;-webkit-text-stroke:.16px #ccccdc;left:934.87px;letter-spacing:0.363px;">containerd-shim</div>
<div class="t" style="top:894.00px;font-size:12.48px;line-height:14px;color:#ccccdc;-webkit-text-stroke:.16px #ccccdc;right:1448.10px;text-align:right;letter-spacing:-0.184px;">25.1 GiB</div>
<div class="t" style="top:894.00px;font-size:12.48px;line-height:14px;color:#ccccdc;-webkit-text-stroke:.16px #ccccdc;right:1382.60px;text-align:right;letter-spacing:-0.184px;">25.1 GiB</div>
<div class="t" style="top:894.00px;font-size:12.48px;line-height:14px;color:#ccccdc;-webkit-text-stroke:.16px #ccccdc;right:1317.10px;text-align:right;letter-spacing:-0.184px;">25.1 GiB</div>
<div class="t" style="top:918.00px;font-size:12.48px;line-height:14px;color:#ccccdc;-webkit-text-stroke:.16px #ccccdc;left:934.87px;letter-spacing:0.447px;">docker-proxy</div>
<div class="t" style="top:918.00px;font-size:12.48px;line-height:14px;color:#ccccdc;-webkit-text-stroke:.16px #ccccdc;right:1448.07px;text-align:right;letter-spacing:-0.161px;">16.2 GiB</div>
<div class="t" style="top:918.00px;font-size:12.48px;line-height:14px;color:#ccccdc;-webkit-text-stroke:.16px #ccccdc;right:1382.57px;text-align:right;letter-spacing:-0.161px;">16.2 GiB</div>
<div class="t" style="top:918.00px;font-size:12.48px;line-height:14px;color:#ccccdc;-webkit-text-stroke:.16px #ccccdc;right:1317.07px;text-align:right;letter-spacing:-0.161px;">16.2 GiB</div>
<div class="t" style="top:942.00px;font-size:12.48px;line-height:14px;color:#ccccdc;-webkit-text-stroke:.16px #ccccdc;left:934.87px;letter-spacing:0.353px;">systemd-journal</div>
<div class="t" style="top:942.00px;font-size:12.48px;line-height:14px;color:#ccccdc;-webkit-text-stroke:.16px #ccccdc;right:1448.07px;text-align:right;letter-spacing:-0.153px;">8.15 GiB</div>
<div class="t" style="top:942.00px;font-size:12.48px;line-height:14px;color:#ccccdc;-webkit-text-stroke:.16px #ccccdc;right:1382.57px;text-align:right;letter-spacing:-0.153px;">8.15 GiB</div>
<div class="t" style="top:942.00px;font-size:12.48px;line-height:14px;color:#ccccdc;-webkit-text-stroke:.16px #ccccdc;right:1317.07px;text-align:right;letter-spacing:-0.153px;">8.15 GiB</div>
<div class="t" style="top:965.00px;font-size:12.48px;line-height:14px;color:#ccccdc;-webkit-text-stroke:.16px #ccccdc;left:934.87px;letter-spacing:0.374px;">docker</div>
<div class="t" style="top:965.00px;font-size:12.48px;line-height:14px;color:#ccccdc;-webkit-text-stroke:.16px #ccccdc;right:1447.76px;text-align:right;letter-spacing:0.154px;">3.58 GiB</div>
<div class="t" style="top:965.00px;font-size:12.48px;line-height:14px;color:#ccccdc;-webkit-text-stroke:.16px #ccccdc;right:1382.26px;text-align:right;letter-spacing:0.154px;">3.58 GiB</div>
<div class="t" style="top:965.00px;font-size:12.48px;line-height:14px;color:#ccccdc;-webkit-text-stroke:.16px #ccccdc;right:1316.76px;text-align:right;letter-spacing:0.154px;">3.58 GiB</div>
<div class="t" style="top:989.00px;font-size:12.48px;line-height:14px;color:#ccccdc;-webkit-text-stroke:.16px #ccccdc;left:934.87px;letter-spacing:0.246px;">alloy</div>
<div class="t" style="top:989.00px;font-size:12.48px;line-height:14px;color:#ccccdc;-webkit-text-stroke:.16px #ccccdc;right:1448.07px;text-align:right;letter-spacing:-0.153px;">3.15 GiB</div>
<div class="t" style="top:989.00px;font-size:12.48px;line-height:14px;color:#ccccdc;-webkit-text-stroke:.16px #ccccdc;right:1382.57px;text-align:right;letter-spacing:-0.153px;">3.15 GiB</div>
<div class="t" style="top:989.00px;font-size:12.48px;line-height:14px;color:#ccccdc;-webkit-text-stroke:.16px #ccccdc;right:1317.07px;text-align:right;letter-spacing:-0.153px;">3.15 GiB</div>
<div class="t" style="top:1013.00px;font-size:12.48px;line-height:14px;color:#ccccdc;-webkit-text-stroke:.16px #ccccdc;left:934.87px;letter-spacing:0.386px;">dockerd</div>
<div class="t" style="top:1013.00px;font-size:12.48px;line-height:14px;color:#ccccdc;-webkit-text-stroke:.16px #ccccdc;right:1448.07px;text-align:right;letter-spacing:-0.161px;">2.91 GiB</div>
<div class="t" style="top:1013.00px;font-size:12.48px;line-height:14px;color:#ccccdc;-webkit-text-stroke:.16px #ccccdc;right:1382.57px;text-align:right;letter-spacing:-0.161px;">2.91 GiB</div>
<div class="t" style="top:1013.00px;font-size:12.48px;line-height:14px;color:#ccccdc;-webkit-text-stroke:.16px #ccccdc;right:1317.07px;text-align:right;letter-spacing:-0.161px;">2.91 GiB</div>
<div class="t" style="top:1037.00px;font-size:12.48px;line-height:14px;color:#ccccdc;-webkit-text-stroke:.16px #ccccdc;left:934.87px;letter-spacing:0.328px;">containerd</div>
<div class="t" style="top:1037.00px;font-size:12.48px;line-height:14px;color:#ccccdc;-webkit-text-stroke:.16px #ccccdc;right:1448.02px;text-align:right;letter-spacing:-0.109px;">1.90 GiB</div>
<div class="t" style="top:1037.00px;font-size:12.48px;line-height:14px;color:#ccccdc;-webkit-text-stroke:.16px #ccccdc;right:1382.52px;text-align:right;letter-spacing:-0.109px;">1.90 GiB</div>
<div class="t" style="top:1037.00px;font-size:12.48px;line-height:14px;color:#ccccdc;-webkit-text-stroke:.16px #ccccdc;right:1317.02px;text-align:right;letter-spacing:-0.109px;">1.90 GiB</div>
<div class="t" style="top:1061.00px;font-size:12.48px;line-height:14px;color:#ccccdc;-webkit-text-stroke:.16px #ccccdc;left:934.87px;letter-spacing:0.454px;">python3</div>
<div class="t" style="top:1061.00px;font-size:12.48px;line-height:14px;color:#ccccdc;-webkit-text-stroke:.16px #ccccdc;right:1448.14px;text-align:right;letter-spacing:-0.222px;">1.78 GiB</div>
<div class="t" style="top:1061.00px;font-size:12.48px;line-height:14px;color:#ccccdc;-webkit-text-stroke:.16px #ccccdc;right:1382.64px;text-align:right;letter-spacing:-0.222px;">1.78 GiB</div>
<div class="t" style="top:1061.00px;font-size:12.48px;line-height:14px;color:#ccccdc;-webkit-text-stroke:.16px #ccccdc;right:1317.14px;text-align:right;letter-spacing:-0.222px;">1.78 GiB</div>
<div class="t" style="top:867.00px;font-size:12.48px;line-height:14px;color:#ccccdc;-webkit-text-stroke:.16px #ccccdc;right:1228.39px;text-align:right;letter-spacing:0.327px;">20 MiB</div>
<div class="t" style="top:903.00px;font-size:12.48px;line-height:14px;color:#ccccdc;-webkit-text-stroke:.16px #ccccdc;right:1228.78px;text-align:right;letter-spacing:-0.071px;">16 MiB</div>
<div class="t" style="top:939.00px;font-size:12.48px;line-height:14px;color:#ccccdc;-webkit-text-stroke:.16px #ccccdc;right:1228.83px;text-align:right;letter-spacing:-0.112px;">12 MiB</div>
<div class="t" style="top:974.00px;font-size:12.48px;line-height:14px;color:#ccccdc;-webkit-text-stroke:.16px #ccccdc;right:1228.44px;text-align:right;letter-spacing:0.269px;">8 MiB</div>
<div class="t" style="top:1010.00px;font-size:12.48px;line-height:14px;color:#ccccdc;-webkit-text-stroke:.16px #ccccdc;right:1228.40px;text-align:right;letter-spacing:0.318px;">4 MiB</div>
<div class="t" style="top:1046.00px;font-size:12.48px;line-height:14px;color:#ccccdc;-webkit-text-stroke:.16px #ccccdc;right:1228.52px;text-align:right;letter-spacing:0.197px;">0 B</div>
<div class="t" style="top:1061.00px;font-size:12.48px;line-height:14px;color:#ccccdc;-webkit-text-stroke:.16px #ccccdc;left:1069.25px;width:600px;text-align:center;letter-spacing:0.091px;">10:20</div>
<div class="t" style="top:1061.00px;font-size:12.48px;line-height:14px;color:#ccccdc;-webkit-text-stroke:.16px #ccccdc;left:1137.21px;width:600px;text-align:center;letter-spacing:0.020px;">10:25</div>
<div class="t" style="top:1061.00px;font-size:12.48px;line-height:14px;color:#ccccdc;-webkit-text-stroke:.16px #ccccdc;left:1205.27px;width:600px;text-align:center;letter-spacing:0.140px;">10:30</div>
<div class="t" style="top:1061.00px;font-size:12.48px;line-height:14px;color:#ccccdc;-webkit-text-stroke:.16px #ccccdc;left:1273.23px;width:600px;text-align:center;letter-spacing:0.069px;">10:35</div>
<div class="t" style="top:1061.00px;font-size:12.48px;line-height:14px;color:#ccccdc;-webkit-text-stroke:.16px #ccccdc;left:1341.29px;width:600px;text-align:center;letter-spacing:0.190px;">10:40</div>
<div class="t" style="top:1061.00px;font-size:12.48px;line-height:14px;color:#ccccdc;-webkit-text-stroke:.16px #ccccdc;left:1409.26px;width:600px;text-align:center;letter-spacing:0.118px;">10:45</div>
<div class="t" style="top:1061.00px;font-size:12.48px;line-height:14px;color:#ccccdc;-webkit-text-stroke:.16px #ccccdc;left:1477.25px;width:600px;text-align:center;letter-spacing:0.104px;">10:50</div>
<div class="t" style="top:1061.00px;font-size:12.48px;line-height:14px;color:#ccccdc;-webkit-text-stroke:.16px #ccccdc;left:1545.22px;width:600px;text-align:center;letter-spacing:0.032px;">10:55</div>
<div class="t" style="top:1061.00px;font-size:12.48px;line-height:14px;color:#ccccdc;-webkit-text-stroke:.16px #ccccdc;left:1613.12px;width:600px;text-align:center;letter-spacing:-0.167px;">11:00</div>
<div class="t" style="top:1061.00px;font-size:12.48px;line-height:14px;color:#ccccdc;-webkit-text-stroke:.16px #ccccdc;left:1681.08px;width:600px;text-align:center;letter-spacing:-0.239px;">11:05</div>
<div class="t" style="top:1061.00px;font-size:12.48px;line-height:14px;color:#ccccdc;-webkit-text-stroke:.16px #ccccdc;left:1748.85px;width:600px;text-align:center;letter-spacing:-0.694px;">11:10</div>
<div class="t" style="top:1061.00px;font-size:12.48px;line-height:14px;color:#ccccdc;-webkit-text-stroke:.16px #ccccdc;left:1816.82px;width:600px;text-align:center;letter-spacing:-0.765px;">11:15</div>
<div class="t" style="top:870.00px;font-size:12.48px;line-height:14px;color:#6e9fff;-webkit-text-stroke:.42px #6e9fff;left:2187.37px;letter-spacing:0.464px;">Name</div>
<div class="t" style="top:870.00px;font-size:12.48px;line-height:14px;color:#6e9fff;-webkit-text-stroke:.42px #6e9fff;left:2325.37px;letter-spacing:0.542px;">Mean</div>
<div class="t" style="top:870.00px;font-size:12.48px;line-height:14px;color:#6e9fff;-webkit-text-stroke:.42px #6e9fff;right:126.86px;text-align:right;letter-spacing:0.703px;">Max</div>
<div class="t" style="top:870.00px;font-size:12.48px;line-height:14px;color:#6e9fff;-webkit-text-stroke:.42px #6e9fff;right:62.70px;text-align:right;letter-spacing:0.860px;">Min</div>
<div class="t" style="top:894.00px;font-size:12.48px;line-height:14px;color:#ccccdc;-webkit-text-stroke:.16px #ccccdc;left:2187.37px;letter-spacing:0.276px;">node</div>
<div class="t" style="top:894.00px;font-size:12.48px;line-height:14px;color:#ccccdc;-webkit-text-stroke:.16px #ccccdc;right:189.98px;text-align:right;letter-spacing:-0.071px;">18 MiB</div>
<div class="t" style="top:894.00px;font-size:12.48px;line-height:14px;color:#ccccdc;-webkit-text-stroke:.16px #ccccdc;right:122.98px;text-align:right;letter-spacing:-0.071px;">18 MiB</div>
<div class="t" style="top:894.00px;font-size:12.48px;line-height:14px;color:#ccccdc;-webkit-text-stroke:.16px #ccccdc;right:55.98px;text-align:right;letter-spacing:-0.071px;">18 MiB</div>
<div class="t" style="top:918.00px;font-size:12.48px;line-height:14px;color:#ccccdc;-webkit-text-stroke:.16px #ccccdc;left:2187.37px;letter-spacing:0.363px;">containerd-shim</div>
<div class="t" style="top:918.00px;font-size:12.48px;line-height:14px;color:#ccccdc;-webkit-text-stroke:.16px #ccccdc;right:189.71px;text-align:right;letter-spacing:0.199px;">5.75 MiB</div>
<div class="t" style="top:918.00px;font-size:12.48px;line-height:14px;color:#ccccdc;-webkit-text-stroke:.16px #ccccdc;right:122.71px;text-align:right;letter-spacing:0.199px;">5.75 MiB</div>
<div class="t" style="top:918.00px;font-size:12.48px;line-height:14px;color:#ccccdc;-webkit-text-stroke:.16px #ccccdc;right:55.71px;text-align:right;letter-spacing:0.199px;">5.75 MiB</div>
<div class="t" style="top:942.00px;font-size:12.48px;line-height:14px;color:#ccccdc;-webkit-text-stroke:.16px #ccccdc;left:2187.37px;letter-spacing:0.454px;">python3</div>
<div class="t" style="top:942.00px;font-size:12.48px;line-height:14px;color:#ccccdc;-webkit-text-stroke:.16px #ccccdc;right:189.60px;text-align:right;letter-spacing:0.314px;">5.38 MiB</div>
<div class="t" style="top:942.00px;font-size:12.48px;line-height:14px;color:#ccccdc;-webkit-text-stroke:.16px #ccccdc;right:122.60px;text-align:right;letter-spacing:0.314px;">5.38 MiB</div>
<div class="t" style="top:942.00px;font-size:12.48px;line-height:14px;color:#ccccdc;-webkit-text-stroke:.16px #ccccdc;right:55.60px;text-align:right;letter-spacing:0.314px;">5.38 MiB</div>
<div class="t" style="top:965.00px;font-size:12.48px;line-height:14px;color:#ccccdc;-webkit-text-stroke:.16px #ccccdc;left:2187.37px;letter-spacing:0.206px;">bash</div>
<div class="t" style="top:965.00px;font-size:12.48px;line-height:14px;color:#ccccdc;-webkit-text-stroke:.16px #ccccdc;right:189.88px;text-align:right;letter-spacing:0.030px;">3.13 MiB</div>
<div class="t" style="top:965.00px;font-size:12.48px;line-height:14px;color:#ccccdc;-webkit-text-stroke:.16px #ccccdc;right:122.88px;text-align:right;letter-spacing:0.030px;">3.13 MiB</div>
<div class="t" style="top:965.00px;font-size:12.48px;line-height:14px;color:#ccccdc;-webkit-text-stroke:.16px #ccccdc;right:55.88px;text-align:right;letter-spacing:0.030px;">3.13 MiB</div>
<div class="t" style="top:989.00px;font-size:12.48px;line-height:14px;color:#ccccdc;-webkit-text-stroke:.16px #ccccdc;left:2187.37px;letter-spacing:0.235px;">pulseaudio</div>
<div class="t" style="top:989.00px;font-size:12.48px;line-height:14px;color:#ccccdc;-webkit-text-stroke:.16px #ccccdc;right:189.72px;text-align:right;letter-spacing:0.191px;">2.75 MiB</div>
<div class="t" style="top:989.00px;font-size:12.48px;line-height:14px;color:#ccccdc;-webkit-text-stroke:.16px #ccccdc;right:122.72px;text-align:right;letter-spacing:0.191px;">2.75 MiB</div>
<div class="t" style="top:989.00px;font-size:12.48px;line-height:14px;color:#ccccdc;-webkit-text-stroke:.16px #ccccdc;right:55.72px;text-align:right;letter-spacing:0.191px;">2.75 MiB</div>
<div class="t" style="top:1013.00px;font-size:12.48px;line-height:14px;color:#ccccdc;-webkit-text-stroke:.16px #ccccdc;left:2187.37px;letter-spacing:0.374px;">docker</div>
<div class="t" style="top:1013.00px;font-size:12.48px;line-height:14px;color:#ccccdc;-webkit-text-stroke:.16px #ccccdc;right:189.89px;text-align:right;letter-spacing:0.028px;">1.50 MiB</div>
<div class="t" style="top:1013.00px;font-size:12.48px;line-height:14px;color:#ccccdc;-webkit-text-stroke:.16px #ccccdc;right:122.89px;text-align:right;letter-spacing:0.028px;">1.50 MiB</div>
<div class="t" style="top:1013.00px;font-size:12.48px;line-height:14px;color:#ccccdc;-webkit-text-stroke:.16px #ccccdc;right:55.89px;text-align:right;letter-spacing:0.028px;">1.50 MiB</div>
<div class="t" style="top:1037.00px;font-size:12.48px;line-height:14px;color:#ccccdc;-webkit-text-stroke:.16px #ccccdc;left:2187.37px;letter-spacing:0.377px;">hass-configurat</div>
<div class="t" style="top:1037.00px;font-size:12.48px;line-height:14px;color:#ccccdc;-webkit-text-stroke:.16px #ccccdc;right:189.89px;text-align:right;letter-spacing:0.028px;">1.50 MiB</div>
<div class="t" style="top:1037.00px;font-size:12.48px;line-height:14px;color:#ccccdc;-webkit-text-stroke:.16px #ccccdc;right:122.89px;text-align:right;letter-spacing:0.028px;">1.50 MiB</div>
<div class="t" style="top:1037.00px;font-size:12.48px;line-height:14px;color:#ccccdc;-webkit-text-stroke:.16px #ccccdc;right:55.89px;text-align:right;letter-spacing:0.028px;">1.50 MiB</div>
<div class="t" style="top:1061.00px;font-size:12.48px;line-height:14px;color:#ccccdc;-webkit-text-stroke:.16px #ccccdc;left:2187.37px;letter-spacing:0.353px;">systemd-journal</div>
<div class="t" style="top:1061.00px;font-size:12.48px;line-height:14px;color:#ccccdc;-webkit-text-stroke:.16px #ccccdc;right:189.89px;text-align:right;letter-spacing:0.028px;">1.50 MiB</div>
<div class="t" style="top:1061.00px;font-size:12.48px;line-height:14px;color:#ccccdc;-webkit-text-stroke:.16px #ccccdc;right:122.89px;text-align:right;letter-spacing:0.028px;">1.50 MiB</div>
<div class="t" style="top:1061.00px;font-size:12.48px;line-height:14px;color:#ccccdc;-webkit-text-stroke:.16px #ccccdc;right:55.89px;text-align:right;letter-spacing:0.028px;">1.50 MiB</div>
</div>
</body></html>
